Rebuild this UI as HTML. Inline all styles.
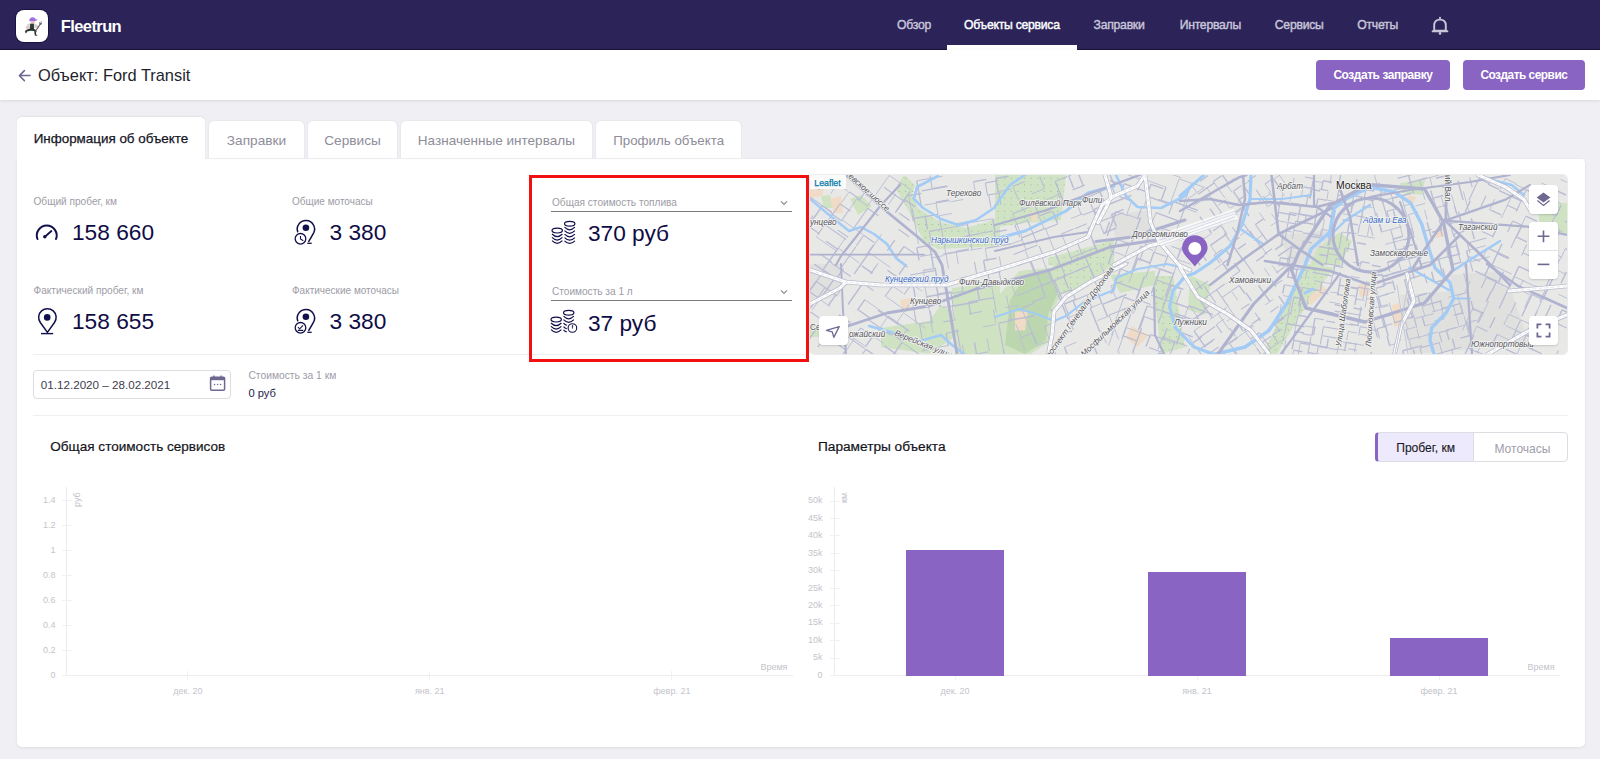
<!DOCTYPE html><html><head><meta charset="utf-8"><style>
html,body{margin:0;padding:0;width:1600px;height:759px;overflow:hidden;background:#efeff4;font-family:"Liberation Sans",sans-serif;position:relative}
.t{position:absolute;white-space:nowrap}
svg{position:absolute;overflow:visible}
</style></head><body>
<div style="position:absolute;left:0px;top:0px;width:1600px;height:50px;background:#2c2459;"></div>
<div style="position:absolute;left:0px;top:49px;width:1600px;height:1px;background:#1a143f;"></div>
<div style="position:absolute;left:16px;top:9.5px;width:32px;height:32px;background:#fff;border-radius:8px;box-shadow:0 0 0 1px #191340;"></div>
<svg style="left:16px;top:9.5px" width="32" height="32" viewBox="0 0 32 32">
<path d="M13.3 10.6 Q13.4 7.4 16.8 7.3 Q19.2 7.4 19.6 9.2 L21.8 9.6 Q21 10.8 19 11.1 L13.6 11.3 Z" fill="#9b72e6"/>
<path d="M14.6 11 L18.9 11 L18.6 13.6 Q16.8 14.6 15 13.6 Z" fill="#f1bcbc"/>
<path d="M11 14.6 Q14 13 17 13.4 Q20.5 13.6 22.3 15.8 L21.6 17.6 Q18.5 17.2 17.6 18.4 L13 18.6 Q11.8 17.6 10.8 17.2 Z" fill="#d6d6d6"/>
<path d="M14.2 13.8 L17.8 13.8 L18 19 L14 19.2 Z" fill="#2b3a35"/>
<ellipse cx="11.4" cy="17.4" rx="1.5" ry="1.5" fill="#f1bcbc"/>
<ellipse cx="21.7" cy="17.2" rx="1.4" ry="1.6" fill="#f1bcbc"/>
<path d="M14 18.6 L10.6 19.8 L9 21 L9.6 23.4 L10.8 22.6 L11 21.4 L14.6 20.8 L18.2 21 L18.8 25.4 L21.4 25.8 L21 24.8 L20 24.4 L20.2 20.4 L17.6 18.6 Z" fill="#263430"/>
<path d="M19.8 20.8 L24.6 13.6" stroke="#666" stroke-width="1.1"/>
<path d="M23.6 12.4 L24.2 14 L25.8 13.6 M24.8 12.2 L25.6 11.8" stroke="#555" stroke-width="1.1" fill="none"/>
<path d="M19.2 19.6 L19.6 21.6 L20.8 21" stroke="#555" stroke-width="1" fill="none"/>
</svg>
<div class="t" style="font-size:16.5px;line-height:16.5px;top:18.43px;color:#ffffff;font-weight:700;left:60.8px;letter-spacing:-0.6px;">Fleetrun</div>
<div class="t" style="font-size:12.2px;line-height:12.2px;top:18.67px;color:#c9c6d9;-webkit-text-stroke:0.4px #c9c6d9;left:897px;letter-spacing:-0.25px;">Обзор</div>
<div class="t" style="font-size:12.2px;line-height:12.2px;top:18.67px;color:#ffffff;-webkit-text-stroke:0.4px #ffffff;left:964px;letter-spacing:-0.25px;">Объекты сервиса</div>
<div class="t" style="font-size:12.2px;line-height:12.2px;top:18.67px;color:#c9c6d9;-webkit-text-stroke:0.4px #c9c6d9;left:1093.6px;letter-spacing:-0.25px;">Заправки</div>
<div class="t" style="font-size:12.2px;line-height:12.2px;top:18.67px;color:#c9c6d9;-webkit-text-stroke:0.4px #c9c6d9;left:1179.7px;letter-spacing:-0.25px;">Интервалы</div>
<div class="t" style="font-size:12.2px;line-height:12.2px;top:18.67px;color:#c9c6d9;-webkit-text-stroke:0.4px #c9c6d9;left:1274.8px;letter-spacing:-0.25px;">Сервисы</div>
<div class="t" style="font-size:12.2px;line-height:12.2px;top:18.67px;color:#c9c6d9;-webkit-text-stroke:0.4px #c9c6d9;left:1357.3px;letter-spacing:-0.25px;">Отчеты</div>
<div style="position:absolute;left:947px;top:45px;width:130px;height:4.6px;background:#ffffff;"></div>
<svg style="left:1430px;top:16px" width="20" height="20" viewBox="0 0 20 20">
<path d="M10 1.6 L10 3" stroke="#c9c6d9" stroke-width="1.8" stroke-linecap="round"/>
<path d="M4.2 14.8 L4.2 9.4 Q4.2 3.6 10 3.6 Q15.8 3.6 15.8 9.4 L15.8 14.8 Z" fill="none" stroke="#c9c6d9" stroke-width="1.9" stroke-linejoin="round"/>
<path d="M2.6 15.2 L17.4 15.2" stroke="#c9c6d9" stroke-width="1.9" stroke-linecap="round"/>
<circle cx="10" cy="17.4" r="1.3" fill="#c9c6d9"/>
</svg>
<div style="position:absolute;left:0px;top:50px;width:1600px;height:50px;background:#ffffff;box-shadow:0 1px 3px rgba(0,0,0,0.10);"></div>
<svg style="left:17px;top:68px" width="15" height="15" viewBox="0 0 15 15">
<path d="M13 7.6 L2.6 7.6 M7.4 2.6 L2.4 7.6 L7.4 12.6" stroke="#6e6891" stroke-width="1.5" fill="none" stroke-linecap="round" stroke-linejoin="round"/>
</svg>
<div class="t" style="font-size:16.4px;line-height:16.4px;top:67.32px;color:#1f1f2e;left:38px;">Объект: Ford Transit</div>
<div style="position:absolute;left:1316px;top:60px;width:134px;height:30px;background:#8964c2;border-radius:4px;"></div>
<div style="position:absolute;left:1463px;top:60px;width:122px;height:30px;background:#8964c2;border-radius:4px;"></div>
<div class="t" style="font-size:11.9px;line-height:11.9px;top:69.93px;color:#ffffff;font-weight:700;left:1333.4px;letter-spacing:-0.4px;">Создать заправку</div>
<div class="t" style="font-size:11.9px;line-height:11.9px;top:69.93px;color:#ffffff;font-weight:700;left:1480.4px;letter-spacing:-0.5px;">Создать сервис</div>
<div style="position:absolute;left:17px;top:158px;width:1568px;height:588.6px;background:#ffffff;border-radius:0 5px 5px 5px;box-shadow:0 1px 3px rgba(0,0,0,0.08);"></div>
<div style="position:absolute;left:209px;top:121px;width:95px;height:37px;background:#ffffff;border-radius:5px 5px 0 0;box-shadow:0 0 2px rgba(0,0,0,0.10);"></div>
<div style="position:absolute;left:308px;top:121px;width:89px;height:37px;background:#ffffff;border-radius:5px 5px 0 0;box-shadow:0 0 2px rgba(0,0,0,0.10);"></div>
<div style="position:absolute;left:401px;top:121px;width:191.39999999999998px;height:37px;background:#ffffff;border-radius:5px 5px 0 0;box-shadow:0 0 2px rgba(0,0,0,0.10);"></div>
<div style="position:absolute;left:596px;top:121px;width:145px;height:37px;background:#ffffff;border-radius:5px 5px 0 0;box-shadow:0 0 2px rgba(0,0,0,0.10);"></div>
<div style="position:absolute;left:17px;top:158px;width:1568px;height:1px;background:#ecebf0;"></div>
<div style="position:absolute;left:17px;top:117px;width:188px;height:42px;background:#ffffff;border-radius:5px 5px 0 0;box-shadow:0 -1px 2px rgba(0,0,0,0.06);"></div>
<div class="t" style="font-size:13.4px;line-height:13.4px;top:131.56px;color:#15151f;-webkit-text-stroke:0.25px #15151f;left:33.7px;">Информация об объекте</div>
<div class="t" style="font-size:13.68px;line-height:13.68px;top:133.92px;color:#8e8d99;left:226.8px;">Заправки</div>
<div class="t" style="font-size:13.68px;line-height:13.68px;top:133.92px;color:#8e8d99;left:324.2px;">Сервисы</div>
<div class="t" style="font-size:13.56px;line-height:13.56px;top:134.02px;color:#8e8d99;left:417.8px;">Назначенные интервалы</div>
<div class="t" style="font-size:13.34px;line-height:13.34px;top:134.21px;color:#8e8d99;left:613.2px;">Профиль объекта</div>
<div class="t" style="font-size:10.1px;line-height:10.1px;top:196.85px;color:#9d9ca6;left:33.5px;">Общий пробег, км</div>
<div class="t" style="font-size:22.7px;line-height:22.7px;top:221.18px;color:#0f0c45;left:72px;">158 660</div>
<div class="t" style="font-size:10.0px;line-height:10.0px;top:196.94px;color:#9d9ca6;left:292px;">Общие моточасы</div>
<div class="t" style="font-size:22.7px;line-height:22.7px;top:220.78px;color:#0f0c45;left:329.5px;">3 380</div>
<div class="t" style="font-size:10.1px;line-height:10.1px;top:286.05px;color:#9d9ca6;left:33.5px;">Фактический пробег, км</div>
<div class="t" style="font-size:22.7px;line-height:22.7px;top:309.68px;color:#0f0c45;left:72px;">158 655</div>
<div class="t" style="font-size:10.0px;line-height:10.0px;top:286.13px;color:#9d9ca6;left:292px;">Фактические моточасы</div>
<div class="t" style="font-size:22.7px;line-height:22.7px;top:309.68px;color:#0f0c45;left:329.5px;">3 380</div>
<svg style="left:30px;top:213.5px" width="32" height="30" viewBox="0 0 32 30">
<path d="M7.5 25 A9.92 9.92 0 1 1 26 25" fill="none" stroke="#12104a" stroke-width="2" stroke-linecap="round"/>
<path d="M14.6 23 L21.4 17" stroke="#12104a" stroke-width="1.8" stroke-linecap="round"/>
<circle cx="14.8" cy="22.8" r="1.7" fill="#12104a"/>
</svg>
<svg style="left:30px;top:300px" width="40" height="40" viewBox="0 0 40 40">
<path d="M17.4 32.4 L10.3 22.5 A8.75 8.75 0 1 1 24.5 22.5 Z" fill="none" stroke="#12104a" stroke-width="1.5" stroke-linejoin="round"/>
<circle cx="17.2" cy="17.4" r="3.3" fill="#12104a"/>
<path d="M11 33.6 L23.2 33.6" stroke="#12104a" stroke-width="1.4"/>
</svg>
<svg style="left:289px;top:214px" width="32" height="34" viewBox="0 0 32 34">
<path d="M8.7 17.8 A8.65 8.65 0 1 1 24.8 18.6 Q22.6 22.6 19.8 27.4" fill="none" stroke="#12104a" stroke-width="1.5" stroke-linecap="round"/>
<circle cx="16.9" cy="13.7" r="3.3" fill="#12104a"/>
<circle cx="11.5" cy="24.8" r="5.3" fill="none" stroke="#12104a" stroke-width="1.3"/>
<path d="M11.5 21.9 L11.5 25 L14.3 26.8" fill="none" stroke="#12104a" stroke-width="1.1"/>
<path d="M18.3 29.3 L22.7 29.3" stroke="#12104a" stroke-width="1.3"/>
</svg>
<svg style="left:289px;top:303.3px" width="32" height="34" viewBox="0 0 32 34">
<path d="M8.7 17.8 A8.65 8.65 0 1 1 24.8 18.6 Q22.6 22.6 19.8 27.4" fill="none" stroke="#12104a" stroke-width="1.5" stroke-linecap="round"/>
<circle cx="16.9" cy="13.7" r="3.3" fill="#12104a"/>
<circle cx="11.5" cy="24.8" r="5.3" fill="none" stroke="#12104a" stroke-width="1.3"/>
<path d="M8.9 24.2 L10.7 25.8 L14 22.4 M8.8 27.4 L14.2 27.4" fill="none" stroke="#12104a" stroke-width="1.1"/>
<path d="M18.3 29.3 L22.7 29.3" stroke="#12104a" stroke-width="1.3"/>
</svg>
<div style="position:absolute;left:33px;top:354px;width:775px;height:1px;background:#eeeef3;"></div>
<div style="position:absolute;left:33px;top:414.5px;width:1535px;height:1px;background:#eeeef3;"></div>
<div class="t" style="font-size:10.1px;line-height:10.1px;top:197.85px;color:#9d9ca6;left:552px;">Общая стоимость топлива</div>
<div style="position:absolute;left:551px;top:210.8px;width:240.6px;height:1.6px;background:#7a7a80;"></div>
<div class="t" style="font-size:10.1px;line-height:10.1px;top:287.05px;color:#9d9ca6;left:552px;">Стоимость за 1 л</div>
<div style="position:absolute;left:551px;top:299.8px;width:240.6px;height:1.6px;background:#7a7a80;"></div>
<svg style="left:779px;top:198.5px" width="10" height="8" viewBox="0 0 10 8"><path d="M2 2.4 L5 5.4 L8 2.4" fill="none" stroke="#8a8a94" stroke-width="1.2"/></svg>
<svg style="left:779px;top:287.7px" width="10" height="8" viewBox="0 0 10 8"><path d="M2 2.4 L5 5.4 L8 2.4" fill="none" stroke="#8a8a94" stroke-width="1.2"/></svg>
<svg style="left:550.5px;top:216px" width="32" height="28" viewBox="0 0 32 28"><ellipse cx="6.2" cy="14.6" rx="5.2" ry="2.4" fill="none" stroke="#12104a" stroke-width="1.2"/><path d="M1 18.0 Q6.2 23.2 11.4 18.0" fill="none" stroke="#12104a" stroke-width="1.2"/><path d="M1 21.4 Q6.2 26.6 11.4 21.4" fill="none" stroke="#12104a" stroke-width="1.2"/><path d="M1 24.7 Q6.2 29.9 11.4 24.7" fill="none" stroke="#12104a" stroke-width="1.2"/><ellipse cx="18.7" cy="7.8" rx="5.2" ry="2.4" fill="none" stroke="#12104a" stroke-width="1.2"/><path d="M13.5 11.2 Q18.7 16.4 23.9 11.2" fill="none" stroke="#12104a" stroke-width="1.2"/><path d="M13.5 14.7 Q18.7 19.9 23.9 14.7" fill="none" stroke="#12104a" stroke-width="1.2"/><path d="M13.5 18.2 Q18.7 23.4 23.9 18.2" fill="none" stroke="#12104a" stroke-width="1.2"/><path d="M13.5 21.6 Q18.7 26.8 23.9 21.6" fill="none" stroke="#12104a" stroke-width="1.2"/><path d="M13.5 24.8 Q18.7 30.0 23.9 24.8" fill="none" stroke="#12104a" stroke-width="1.2"/></svg>
<svg style="left:549.5px;top:305px" width="32" height="28" viewBox="0 0 32 28"><ellipse cx="6.2" cy="14.6" rx="5.2" ry="2.4" fill="none" stroke="#12104a" stroke-width="1.2"/><path d="M1 18.0 Q6.2 23.2 11.4 18.0" fill="none" stroke="#12104a" stroke-width="1.2"/><path d="M1 21.4 Q6.2 26.6 11.4 21.4" fill="none" stroke="#12104a" stroke-width="1.2"/><path d="M1 24.7 Q6.2 29.9 11.4 24.7" fill="none" stroke="#12104a" stroke-width="1.2"/><ellipse cx="18.7" cy="7.8" rx="5.2" ry="2.4" fill="none" stroke="#12104a" stroke-width="1.2"/><path d="M13.5 11.2 Q18.7 16.4 23.9 11.2" fill="none" stroke="#12104a" stroke-width="1.2"/><path d="M13.5 14.7 Q18.7 19.9 23.9 14.7" fill="none" stroke="#12104a" stroke-width="1.2"/><path d="M13.5 18.2 Q15 19.8 16.8 20.4" fill="none" stroke="#12104a" stroke-width="1.2"/><path d="M13.5 21.6 Q15 23.200000000000003 16.8 23.8" fill="none" stroke="#12104a" stroke-width="1.2"/><path d="M13.5 24.8 Q15 26.4 16.8 27.0" fill="none" stroke="#12104a" stroke-width="1.2"/><circle cx="22.4" cy="23" r="4.3" fill="#fff" stroke="#12104a" stroke-width="1.1"/><path d="M22.4 20.4 L22.4 23.6 M22.4 20.4 L23.4 21" fill="none" stroke="#12104a" stroke-width="0.9"/></svg>
<div class="t" style="font-size:22.66px;line-height:22.66px;top:222.22px;color:#0f0c45;left:588px;">370 руб</div>
<div class="t" style="font-size:22.66px;line-height:22.66px;top:311.52px;color:#0f0c45;left:588px;">37 руб</div>
<div style="position:absolute;left:529px;top:175px;width:280px;height:187px;border:3px solid #f21010;box-sizing:border-box;"></div>
<div style="position:absolute;left:33.4px;top:369.7px;width:198px;height:29.3px;border:1px solid #dcdce2;border-radius:4px;box-sizing:border-box;"></div>
<div class="t" style="font-size:11.65px;line-height:11.65px;top:379.44px;color:#3e3d4c;left:40.8px;">01.12.2020 – 28.02.2021</div>
<svg style="left:208px;top:373px" width="20" height="20" viewBox="0 0 20 20">
<rect x="2.6" y="4.2" width="14" height="13" rx="1.2" fill="none" stroke="#6e6891" stroke-width="1.5"/>
<rect x="2.6" y="4.2" width="14" height="3" fill="#6e6891"/>
<path d="M6 2.4 L6 5 M13.2 2.4 L13.2 5" stroke="#6e6891" stroke-width="1.4"/>
<circle cx="6.6" cy="11.4" r="0.75" fill="#6e6891"/><circle cx="9.6" cy="11.4" r="0.75" fill="#6e6891"/><circle cx="12.6" cy="11.4" r="0.75" fill="#6e6891"/>
</svg>
<div class="t" style="font-size:10.3px;line-height:10.3px;top:371.38px;color:#9d9ca6;left:248.4px;">Стоимость за 1 км</div>
<div class="t" style="font-size:11.2px;line-height:11.2px;top:387.92px;color:#1f1c4d;left:248.4px;">0 руб</div>
<div style="position:absolute;left:810px;top:175px;width:757px;height:179px;border-radius:4px;overflow:hidden;box-shadow:0 0 0 1px rgba(0,0,0,0.08)">
<svg style="left:0;top:0" width="757" height="179" viewBox="0 0 757 179"><defs><pattern id="gd" x="0" y="0" width="6.6" height="6.6" patternUnits="userSpaceOnUse"><rect width="6.6" height="6.6" fill="#d0e3c4"/><circle cx="3.3" cy="3.3" r="0.55" fill="#8fb386"/></pattern></defs><rect x="0" y="0" width="757" height="179" fill="#e8e9e6"/><polygon points="0.0,89.0 30.0,89.0 30.0,120.0 0.0,128.0" fill="#e0e1df" /><polygon points="590.0,120.0 700.0,112.0 720.0,170.0 600.0,179.0" fill="#e0e1df" /><polygon points="300.0,40.0 340.0,35.0 345.0,60.0 305.0,62.0" fill="#e0e1df" /><polygon points="470.0,60.0 520.0,55.0 525.0,85.0 480.0,90.0" fill="#e0e1df" /><polygon points="640.0,100.0 690.0,96.0 700.0,140.0 650.0,150.0" fill="#e0e1df" /><polygon points="62.0,1.0 93.0,1.0 86.0,14.0 97.0,33.0 107.0,53.0 114.0,66.0 128.0,74.0 190.0,71.0 190.0,40.0 178.0,47.0 155.0,53.0 130.0,47.0 108.0,33.0 102.0,20.0 105.0,10.0 96.0,1.0" fill="url(#gd)" /><polygon points="185.0,0.0 256.0,0.0 251.0,45.0 220.0,47.5 185.0,52.0" fill="url(#gd)" /><polygon points="11.0,21.0 20.0,20.0 24.0,33.0 14.0,33.0" fill="#cfe3c3" /><polygon points="40.0,24.0 51.0,20.0 62.0,31.0 48.0,40.0" fill="#cfe3c3" /><polygon points="238.0,83.0 304.0,65.0 304.0,90.0 238.0,90.0" fill="url(#gd)" /><polygon points="71.0,153.0 119.0,146.0 131.0,130.0 142.0,136.0 148.0,160.0 119.0,179.0 71.0,172.0" fill="#cfe3c3" /><polygon points="209.0,96.0 244.0,92.6 251.5,119.0 241.0,139.0 241.0,166.0 220.6,179.0 185.0,179.0 185.0,125.0" fill="#cfe3c3" /><polygon points="242.0,89.0 304.0,89.0 268.0,116.0 251.5,119.0" fill="url(#gd)" /><polygon points="345.0,101.0 363.0,101.0 375.0,172.0 351.0,179.0 345.0,125.0" fill="url(#gd)" /><polygon points="142.0,113.0 190.0,107.0 190.0,179.0 148.0,179.0" fill="#cfe3c3" /><polygon points="506.6,74.0 530.0,57.0 542.0,66.5 530.0,90.0 500.6,90.0" fill="#cfe3c3" /><polygon points="494.7,89.0 524.0,92.6 489.0,142.5 467.0,179.0 453.0,179.0 477.0,128.0" fill="url(#gd)" /><polygon points="300.0,100.0 345.0,96.0 345.0,110.0 310.0,118.0" fill="#cfe3c3" /><polygon points="0.0,150.0 12.0,152.0 12.0,162.0 0.0,162.0" fill="#cfe3c3" /><polygon points="728.0,30.0 757.0,28.0 757.0,60.0 730.0,55.0" fill="#cfe3c3" /><polygon points="590.0,8.0 615.0,5.0 612.0,20.0 592.0,18.0" fill="#cfe3c3" /><polygon points="380.0,100.0 400.0,110.0 395.0,140.0 378.0,135.0" fill="#cfe3c3" /><polygon points="215.0,100.0 240.0,96.0 248.0,118.0 238.0,140.0 236.0,165.0 215.0,179.0 195.0,170.0 200.0,125.0" fill="#bcd7b0" /><polygon points="20.0,24.0 31.0,21.0 33.0,38.0 24.0,38.0" fill="#f0dcc6" /><polygon points="0.0,15.0 14.0,14.0 12.0,21.0 0.0,23.0" fill="#f0dcc6" /><polygon points="205.0,136.5 218.0,136.5 215.0,155.5 205.0,155.5" fill="#f0dcc6" /><polygon points="321.6,151.0 339.0,160.0 327.5,172.0 315.6,163.0" fill="#f0dcc6" /><polygon points="498.0,123.4 512.5,110.0 517.0,115.0 500.6,130.6" fill="#f0dcc6" /><polygon points="90.0,125.0 100.0,123.0 100.0,133.0 92.0,134.0" fill="#f0dcc6" /><polygon points="548.0,110.0 557.0,108.0 560.0,120.0 550.0,122.0" fill="#f0dcc6" /><polygon points="582.0,130.0 590.0,128.0 592.0,150.0 584.0,152.0" fill="#f0dcc6" /><polygon points="598.0,20.0 606.0,22.0 604.0,28.0 596.0,26.0" fill="#f0dcc6" /><polygon points="220.0,37.0 226.0,36.0 228.0,46.0 222.0,46.0" fill="#f0dcc6" /><polygon points="625.0,55.0 633.0,53.0 634.0,62.0 626.0,63.0" fill="#f0dcc6" /><line x1="-0.9" y1="7.2" x2="9.8" y2="14.7" stroke="#b9bcd4" stroke-width="1.1"/><line x1="-0.9" y1="7.2" x2="-8.4" y2="17.9" stroke="#b9bcd4" stroke-width="0.9"/><line x1="16.5" y1="1.3" x2="37.8" y2="16.2" stroke="#b9bcd4" stroke-width="0.9"/><line x1="16.5" y1="1.3" x2="9.1" y2="12.0" stroke="#b9bcd4" stroke-width="1.1"/><line x1="0.6" y1="22.4" x2="21.9" y2="37.3" stroke="#b9bcd4" stroke-width="1.1"/><line x1="0.6" y1="22.4" x2="-14.3" y2="43.7" stroke="#b9bcd4" stroke-width="0.9"/><line x1="28.2" y1="8.0" x2="20.7" y2="18.6" stroke="#b9bcd4" stroke-width="0.9"/><line x1="12.2" y1="31.0" x2="22.8" y2="38.5" stroke="#b9bcd4" stroke-width="0.9"/><line x1="12.2" y1="31.0" x2="-2.7" y2="52.3" stroke="#b9bcd4" stroke-width="1.4"/><line x1="3.0" y1="40.6" x2="-11.9" y2="61.9" stroke="#b9bcd4" stroke-width="1.1"/><line x1="-1.3" y1="51.3" x2="9.4" y2="58.8" stroke="#b9bcd4" stroke-width="1.1"/><line x1="-1.3" y1="51.3" x2="-16.2" y2="72.6" stroke="#b9bcd4" stroke-width="0.9"/><line x1="44.8" y1="6.3" x2="66.1" y2="21.2" stroke="#b9bcd4" stroke-width="1.1"/><line x1="39.2" y1="16.8" x2="49.8" y2="24.3" stroke="#b9bcd4" stroke-width="1.1"/><line x1="39.2" y1="16.8" x2="31.7" y2="27.5" stroke="#b9bcd4" stroke-width="0.9"/><line x1="30.0" y1="28.8" x2="40.7" y2="36.2" stroke="#b9bcd4" stroke-width="1.1"/><line x1="30.0" y1="28.8" x2="15.1" y2="50.1" stroke="#b9bcd4" stroke-width="1.1"/><line x1="21.1" y1="38.5" x2="31.7" y2="46.0" stroke="#b9bcd4" stroke-width="1.1"/><line x1="14.8" y1="49.6" x2="36.1" y2="64.5" stroke="#b9bcd4" stroke-width="1.1"/><line x1="14.8" y1="49.6" x2="7.3" y2="60.2" stroke="#b9bcd4" stroke-width="1.1"/><line x1="5.7" y1="61.4" x2="27.0" y2="76.3" stroke="#b9bcd4" stroke-width="0.9"/><line x1="56.3" y1="15.3" x2="48.9" y2="25.9" stroke="#b9bcd4" stroke-width="1.1"/><line x1="47.0" y1="23.6" x2="57.6" y2="31.1" stroke="#b9bcd4" stroke-width="0.9"/><line x1="47.0" y1="23.6" x2="39.5" y2="34.3" stroke="#b9bcd4" stroke-width="0.9"/><line x1="39.4" y1="34.3" x2="31.9" y2="45.0" stroke="#b9bcd4" stroke-width="1.1"/><line x1="32.0" y1="44.8" x2="53.3" y2="59.7" stroke="#b9bcd4" stroke-width="0.9"/><line x1="27.5" y1="54.9" x2="38.1" y2="62.3" stroke="#b9bcd4" stroke-width="1.1"/><line x1="16.2" y1="66.3" x2="26.9" y2="73.8" stroke="#b9bcd4" stroke-width="1.4"/><line x1="10.9" y1="79.5" x2="21.6" y2="87.0" stroke="#b9bcd4" stroke-width="1.1"/><line x1="4.2" y1="89.1" x2="25.5" y2="104.0" stroke="#b9bcd4" stroke-width="1.4"/><line x1="79.3" y1="0.4" x2="89.9" y2="7.8" stroke="#b9bcd4" stroke-width="0.9"/><line x1="79.3" y1="0.4" x2="64.3" y2="21.7" stroke="#b9bcd4" stroke-width="0.9"/><line x1="74.0" y1="12.3" x2="95.3" y2="27.2" stroke="#b9bcd4" stroke-width="1.1"/><line x1="64.7" y1="20.7" x2="75.3" y2="28.2" stroke="#b9bcd4" stroke-width="0.9"/><line x1="64.7" y1="20.7" x2="57.2" y2="31.4" stroke="#b9bcd4" stroke-width="0.9"/><line x1="57.7" y1="33.3" x2="68.4" y2="40.8" stroke="#b9bcd4" stroke-width="1.1"/><line x1="57.7" y1="33.3" x2="42.8" y2="54.6" stroke="#b9bcd4" stroke-width="1.1"/><line x1="34.9" y1="63.8" x2="20.0" y2="85.1" stroke="#b9bcd4" stroke-width="0.9"/><line x1="28.2" y1="73.1" x2="49.5" y2="88.0" stroke="#b9bcd4" stroke-width="0.9"/><line x1="28.2" y1="73.1" x2="13.3" y2="94.4" stroke="#b9bcd4" stroke-width="1.4"/><line x1="19.4" y1="86.6" x2="40.7" y2="101.5" stroke="#b9bcd4" stroke-width="1.1"/><line x1="14.3" y1="95.1" x2="35.6" y2="110.0" stroke="#b9bcd4" stroke-width="0.9"/><line x1="14.3" y1="95.1" x2="-0.6" y2="116.4" stroke="#b9bcd4" stroke-width="1.1"/><line x1="6.1" y1="106.3" x2="27.4" y2="121.2" stroke="#b9bcd4" stroke-width="1.1"/><line x1="6.1" y1="106.3" x2="-1.3" y2="116.9" stroke="#b9bcd4" stroke-width="1.4"/><line x1="-0.0" y1="117.0" x2="10.6" y2="124.5" stroke="#b9bcd4" stroke-width="1.1"/><line x1="-0.0" y1="117.0" x2="-7.5" y2="127.7" stroke="#b9bcd4" stroke-width="1.1"/><line x1="90.6" y1="7.5" x2="101.2" y2="15.0" stroke="#b9bcd4" stroke-width="0.9"/><line x1="90.6" y1="7.5" x2="83.1" y2="18.2" stroke="#b9bcd4" stroke-width="1.4"/><line x1="85.8" y1="18.9" x2="78.4" y2="29.5" stroke="#b9bcd4" stroke-width="0.9"/><line x1="53.7" y1="60.2" x2="64.4" y2="67.7" stroke="#b9bcd4" stroke-width="1.1"/><line x1="53.7" y1="60.2" x2="46.3" y2="70.9" stroke="#b9bcd4" stroke-width="1.1"/><line x1="45.7" y1="71.9" x2="30.8" y2="93.2" stroke="#b9bcd4" stroke-width="1.1"/><line x1="33.5" y1="93.6" x2="26.0" y2="104.3" stroke="#b9bcd4" stroke-width="1.4"/><line x1="24.9" y1="103.0" x2="35.6" y2="110.5" stroke="#b9bcd4" stroke-width="0.9"/><line x1="24.9" y1="103.0" x2="10.0" y2="124.3" stroke="#b9bcd4" stroke-width="1.4"/><line x1="15.2" y1="112.2" x2="0.3" y2="133.5" stroke="#b9bcd4" stroke-width="1.1"/><line x1="9.7" y1="124.3" x2="20.3" y2="131.7" stroke="#b9bcd4" stroke-width="0.9"/><line x1="9.7" y1="124.3" x2="2.2" y2="134.9" stroke="#b9bcd4" stroke-width="0.9"/><line x1="0.6" y1="137.0" x2="11.3" y2="144.5" stroke="#b9bcd4" stroke-width="1.1"/><line x1="0.6" y1="137.0" x2="-14.3" y2="158.3" stroke="#b9bcd4" stroke-width="0.9"/><line x1="100.2" y1="16.3" x2="85.3" y2="37.6" stroke="#b9bcd4" stroke-width="1.4"/><line x1="94.5" y1="24.5" x2="105.2" y2="32.0" stroke="#b9bcd4" stroke-width="1.4"/><line x1="94.5" y1="24.5" x2="87.1" y2="35.2" stroke="#b9bcd4" stroke-width="1.4"/><line x1="89.0" y1="38.0" x2="99.6" y2="45.5" stroke="#b9bcd4" stroke-width="1.1"/><line x1="71.6" y1="59.3" x2="56.6" y2="80.6" stroke="#b9bcd4" stroke-width="0.9"/><line x1="63.6" y1="69.8" x2="56.1" y2="80.5" stroke="#b9bcd4" stroke-width="1.4"/><line x1="59.1" y1="77.6" x2="80.4" y2="92.5" stroke="#b9bcd4" stroke-width="0.9"/><line x1="59.1" y1="77.6" x2="44.2" y2="98.9" stroke="#b9bcd4" stroke-width="1.4"/><line x1="51.9" y1="90.9" x2="62.6" y2="98.3" stroke="#b9bcd4" stroke-width="1.4"/><line x1="34.3" y1="109.6" x2="26.9" y2="120.3" stroke="#b9bcd4" stroke-width="0.9"/><line x1="25.8" y1="119.9" x2="18.3" y2="130.5" stroke="#b9bcd4" stroke-width="1.4"/><line x1="13.5" y1="143.7" x2="34.8" y2="158.6" stroke="#b9bcd4" stroke-width="1.1"/><line x1="13.5" y1="143.7" x2="-1.4" y2="165.0" stroke="#b9bcd4" stroke-width="1.4"/><line x1="88.5" y1="54.3" x2="99.1" y2="61.8" stroke="#b9bcd4" stroke-width="1.1"/><line x1="84.8" y1="65.1" x2="77.4" y2="75.7" stroke="#b9bcd4" stroke-width="1.4"/><line x1="68.1" y1="88.3" x2="60.6" y2="98.9" stroke="#b9bcd4" stroke-width="1.1"/><line x1="52.9" y1="108.2" x2="63.5" y2="115.6" stroke="#b9bcd4" stroke-width="1.1"/><line x1="52.9" y1="108.2" x2="38.0" y2="129.5" stroke="#b9bcd4" stroke-width="1.4"/><line x1="29.0" y1="139.9" x2="39.6" y2="147.3" stroke="#b9bcd4" stroke-width="1.4"/><line x1="22.7" y1="150.1" x2="15.2" y2="160.7" stroke="#b9bcd4" stroke-width="0.9"/><line x1="15.2" y1="161.4" x2="7.8" y2="172.1" stroke="#b9bcd4" stroke-width="1.1"/><line x1="94.0" y1="71.4" x2="104.7" y2="78.8" stroke="#b9bcd4" stroke-width="1.1"/><line x1="94.0" y1="71.4" x2="86.5" y2="82.0" stroke="#b9bcd4" stroke-width="1.4"/><line x1="87.0" y1="84.7" x2="97.7" y2="92.2" stroke="#b9bcd4" stroke-width="1.4"/><line x1="77.4" y1="95.2" x2="88.0" y2="102.6" stroke="#b9bcd4" stroke-width="1.4"/><line x1="54.8" y1="124.7" x2="76.1" y2="139.6" stroke="#b9bcd4" stroke-width="0.9"/><line x1="54.8" y1="124.7" x2="47.4" y2="135.4" stroke="#b9bcd4" stroke-width="1.4"/><line x1="48.8" y1="135.2" x2="59.4" y2="142.6" stroke="#b9bcd4" stroke-width="1.4"/><line x1="41.0" y1="146.4" x2="26.0" y2="167.7" stroke="#b9bcd4" stroke-width="0.9"/><line x1="33.6" y1="158.7" x2="54.9" y2="173.6" stroke="#b9bcd4" stroke-width="1.1"/><line x1="25.6" y1="167.8" x2="36.2" y2="175.3" stroke="#b9bcd4" stroke-width="1.1"/><line x1="19.6" y1="179.7" x2="12.2" y2="190.3" stroke="#b9bcd4" stroke-width="1.4"/><line x1="96.4" y1="88.9" x2="88.9" y2="99.6" stroke="#b9bcd4" stroke-width="1.4"/><line x1="90.7" y1="101.8" x2="101.4" y2="109.2" stroke="#b9bcd4" stroke-width="0.9"/><line x1="82.6" y1="110.9" x2="93.2" y2="118.3" stroke="#b9bcd4" stroke-width="0.9"/><line x1="82.6" y1="110.9" x2="75.1" y2="121.5" stroke="#b9bcd4" stroke-width="1.1"/><line x1="75.6" y1="121.4" x2="96.9" y2="136.3" stroke="#b9bcd4" stroke-width="0.9"/><line x1="67.8" y1="135.1" x2="89.1" y2="150.0" stroke="#b9bcd4" stroke-width="1.4"/><line x1="58.4" y1="144.6" x2="79.7" y2="159.5" stroke="#b9bcd4" stroke-width="1.1"/><line x1="50.6" y1="152.9" x2="61.2" y2="160.4" stroke="#b9bcd4" stroke-width="1.1"/><line x1="50.6" y1="152.9" x2="43.1" y2="163.6" stroke="#b9bcd4" stroke-width="1.1"/><line x1="44.5" y1="163.7" x2="55.2" y2="171.1" stroke="#b9bcd4" stroke-width="0.9"/><line x1="44.5" y1="163.7" x2="29.6" y2="185.0" stroke="#b9bcd4" stroke-width="0.9"/><line x1="35.8" y1="175.0" x2="28.4" y2="185.7" stroke="#b9bcd4" stroke-width="1.1"/><line x1="101.6" y1="108.9" x2="112.2" y2="116.3" stroke="#b9bcd4" stroke-width="0.9"/><line x1="101.6" y1="108.9" x2="94.1" y2="119.5" stroke="#b9bcd4" stroke-width="1.1"/><line x1="78.1" y1="141.3" x2="99.4" y2="156.3" stroke="#b9bcd4" stroke-width="1.4"/><line x1="78.1" y1="141.3" x2="70.6" y2="152.0" stroke="#b9bcd4" stroke-width="0.9"/><line x1="70.9" y1="152.7" x2="81.5" y2="160.2" stroke="#b9bcd4" stroke-width="1.4"/><line x1="70.9" y1="152.7" x2="63.4" y2="163.4" stroke="#b9bcd4" stroke-width="1.1"/><line x1="63.0" y1="161.0" x2="73.7" y2="168.4" stroke="#b9bcd4" stroke-width="0.9"/><line x1="63.0" y1="161.0" x2="55.6" y2="171.6" stroke="#b9bcd4" stroke-width="1.4"/><line x1="55.9" y1="174.3" x2="77.2" y2="189.2" stroke="#b9bcd4" stroke-width="1.4"/><line x1="55.9" y1="174.3" x2="48.4" y2="185.0" stroke="#b9bcd4" stroke-width="1.1"/><line x1="101.5" y1="126.3" x2="86.6" y2="147.6" stroke="#b9bcd4" stroke-width="0.9"/><line x1="94.4" y1="138.6" x2="115.7" y2="153.5" stroke="#b9bcd4" stroke-width="0.9"/><line x1="82.0" y1="159.0" x2="92.7" y2="166.5" stroke="#b9bcd4" stroke-width="1.4"/><line x1="74.2" y1="170.7" x2="95.5" y2="185.6" stroke="#b9bcd4" stroke-width="1.4"/><line x1="67.3" y1="180.4" x2="77.9" y2="187.9" stroke="#b9bcd4" stroke-width="0.9"/><line x1="67.3" y1="180.4" x2="52.4" y2="201.7" stroke="#b9bcd4" stroke-width="1.1"/><line x1="97.6" y1="153.7" x2="90.1" y2="164.4" stroke="#b9bcd4" stroke-width="1.1"/><line x1="92.1" y1="167.3" x2="113.4" y2="182.2" stroke="#b9bcd4" stroke-width="0.9"/><line x1="92.1" y1="167.3" x2="77.1" y2="188.6" stroke="#b9bcd4" stroke-width="1.4"/><line x1="100.7" y1="173.6" x2="111.3" y2="181.0" stroke="#b9bcd4" stroke-width="0.9"/><line x1="99.2" y1="179.6" x2="101.4" y2="192.4" stroke="#b9bcd4" stroke-width="1.1"/><line x1="100.2" y1="100.0" x2="125.8" y2="95.4" stroke="#b9bcd4" stroke-width="1.1"/><line x1="103.0" y1="109.6" x2="105.3" y2="122.4" stroke="#b9bcd4" stroke-width="1.4"/><line x1="102.0" y1="123.6" x2="106.5" y2="149.2" stroke="#b9bcd4" stroke-width="1.1"/><line x1="109.5" y1="149.0" x2="122.3" y2="146.8" stroke="#b9bcd4" stroke-width="0.9"/><line x1="109.5" y1="149.0" x2="114.0" y2="174.6" stroke="#b9bcd4" stroke-width="1.1"/><line x1="111.5" y1="176.0" x2="124.3" y2="173.7" stroke="#b9bcd4" stroke-width="1.1"/><line x1="98.6" y1="20.7" x2="111.4" y2="18.4" stroke="#b9bcd4" stroke-width="1.4"/><line x1="98.6" y1="20.7" x2="103.2" y2="46.3" stroke="#b9bcd4" stroke-width="0.9"/><line x1="102.2" y1="33.7" x2="104.5" y2="46.5" stroke="#b9bcd4" stroke-width="1.1"/><line x1="104.0" y1="43.4" x2="116.8" y2="41.1" stroke="#b9bcd4" stroke-width="1.4"/><line x1="104.0" y1="43.4" x2="108.5" y2="69.0" stroke="#b9bcd4" stroke-width="0.9"/><line x1="106.8" y1="72.6" x2="119.6" y2="70.4" stroke="#b9bcd4" stroke-width="1.1"/><line x1="106.8" y1="72.6" x2="109.1" y2="85.4" stroke="#b9bcd4" stroke-width="1.4"/><line x1="110.3" y1="81.5" x2="123.1" y2="79.3" stroke="#b9bcd4" stroke-width="1.1"/><line x1="113.3" y1="95.4" x2="126.1" y2="93.2" stroke="#b9bcd4" stroke-width="1.1"/><line x1="113.3" y1="95.4" x2="115.6" y2="108.3" stroke="#b9bcd4" stroke-width="0.9"/><line x1="114.1" y1="107.1" x2="126.9" y2="104.9" stroke="#b9bcd4" stroke-width="1.4"/><line x1="114.1" y1="107.1" x2="118.6" y2="132.7" stroke="#b9bcd4" stroke-width="0.9"/><line x1="117.0" y1="121.8" x2="142.6" y2="117.3" stroke="#b9bcd4" stroke-width="1.4"/><line x1="117.0" y1="121.8" x2="121.5" y2="147.4" stroke="#b9bcd4" stroke-width="0.9"/><line x1="120.4" y1="135.9" x2="122.6" y2="148.7" stroke="#b9bcd4" stroke-width="0.9"/><line x1="120.7" y1="145.5" x2="123.0" y2="158.3" stroke="#b9bcd4" stroke-width="0.9"/><line x1="125.2" y1="172.8" x2="138.0" y2="170.5" stroke="#b9bcd4" stroke-width="0.9"/><line x1="106.8" y1="5.8" x2="132.4" y2="1.3" stroke="#b9bcd4" stroke-width="1.1"/><line x1="106.8" y1="5.8" x2="111.3" y2="31.5" stroke="#b9bcd4" stroke-width="1.4"/><line x1="111.8" y1="15.9" x2="137.4" y2="11.3" stroke="#b9bcd4" stroke-width="1.4"/><line x1="114.3" y1="30.1" x2="139.9" y2="25.6" stroke="#b9bcd4" stroke-width="0.9"/><line x1="115.2" y1="41.6" x2="128.0" y2="39.4" stroke="#b9bcd4" stroke-width="1.1"/><line x1="115.2" y1="41.6" x2="117.5" y2="54.4" stroke="#b9bcd4" stroke-width="1.4"/><line x1="119.2" y1="56.4" x2="132.0" y2="54.1" stroke="#b9bcd4" stroke-width="1.4"/><line x1="119.2" y1="56.4" x2="121.5" y2="69.2" stroke="#b9bcd4" stroke-width="1.1"/><line x1="119.1" y1="67.3" x2="123.6" y2="92.9" stroke="#b9bcd4" stroke-width="1.4"/><line x1="120.8" y1="82.9" x2="133.6" y2="80.6" stroke="#b9bcd4" stroke-width="0.9"/><line x1="125.1" y1="92.9" x2="127.3" y2="105.7" stroke="#b9bcd4" stroke-width="1.4"/><line x1="125.8" y1="107.4" x2="128.1" y2="120.2" stroke="#b9bcd4" stroke-width="1.4"/><line x1="127.6" y1="119.0" x2="140.4" y2="116.7" stroke="#b9bcd4" stroke-width="1.1"/><line x1="127.6" y1="119.0" x2="129.9" y2="131.8" stroke="#b9bcd4" stroke-width="1.4"/><line x1="132.9" y1="132.5" x2="145.7" y2="130.3" stroke="#b9bcd4" stroke-width="0.9"/><line x1="133.4" y1="146.9" x2="146.2" y2="144.7" stroke="#b9bcd4" stroke-width="1.1"/><line x1="136.1" y1="158.2" x2="148.9" y2="155.9" stroke="#b9bcd4" stroke-width="1.1"/><line x1="136.1" y1="158.2" x2="138.3" y2="171.0" stroke="#b9bcd4" stroke-width="1.4"/><line x1="120.0" y1="0.5" x2="122.2" y2="13.3" stroke="#b9bcd4" stroke-width="1.1"/><line x1="123.8" y1="13.4" x2="136.6" y2="11.2" stroke="#b9bcd4" stroke-width="1.4"/><line x1="125.9" y1="27.2" x2="138.7" y2="25.0" stroke="#b9bcd4" stroke-width="1.4"/><line x1="125.9" y1="27.2" x2="128.2" y2="40.0" stroke="#b9bcd4" stroke-width="0.9"/><line x1="129.1" y1="40.7" x2="141.9" y2="38.4" stroke="#b9bcd4" stroke-width="0.9"/><line x1="129.1" y1="40.7" x2="131.3" y2="53.5" stroke="#b9bcd4" stroke-width="1.1"/><line x1="131.6" y1="54.2" x2="157.2" y2="49.6" stroke="#b9bcd4" stroke-width="0.9"/><line x1="131.6" y1="54.2" x2="133.8" y2="67.0" stroke="#b9bcd4" stroke-width="0.9"/><line x1="134.0" y1="68.1" x2="159.7" y2="63.6" stroke="#b9bcd4" stroke-width="1.4"/><line x1="134.0" y1="68.1" x2="138.6" y2="93.8" stroke="#b9bcd4" stroke-width="0.9"/><line x1="133.3" y1="79.3" x2="158.9" y2="74.8" stroke="#b9bcd4" stroke-width="1.4"/><line x1="141.1" y1="118.6" x2="153.9" y2="116.3" stroke="#b9bcd4" stroke-width="0.9"/><line x1="141.1" y1="118.6" x2="143.3" y2="131.4" stroke="#b9bcd4" stroke-width="1.1"/><line x1="142.1" y1="131.3" x2="167.7" y2="126.8" stroke="#b9bcd4" stroke-width="1.4"/><line x1="142.1" y1="131.3" x2="144.4" y2="144.1" stroke="#b9bcd4" stroke-width="0.9"/><line x1="146.8" y1="153.8" x2="151.3" y2="179.4" stroke="#b9bcd4" stroke-width="1.1"/><line x1="152.4" y1="169.6" x2="156.9" y2="195.2" stroke="#b9bcd4" stroke-width="0.9"/><line x1="140.5" y1="26.8" x2="153.3" y2="24.5" stroke="#b9bcd4" stroke-width="0.9"/><line x1="144.4" y1="49.1" x2="157.2" y2="46.9" stroke="#b9bcd4" stroke-width="0.9"/><line x1="145.4" y1="63.5" x2="158.2" y2="61.3" stroke="#b9bcd4" stroke-width="1.1"/><line x1="146.1" y1="76.3" x2="158.9" y2="74.0" stroke="#b9bcd4" stroke-width="1.1"/><line x1="146.1" y1="76.3" x2="148.3" y2="89.1" stroke="#b9bcd4" stroke-width="0.9"/><line x1="150.7" y1="103.0" x2="163.5" y2="100.8" stroke="#b9bcd4" stroke-width="1.1"/><line x1="150.7" y1="103.0" x2="153.0" y2="115.8" stroke="#b9bcd4" stroke-width="1.1"/><line x1="158.6" y1="127.1" x2="184.2" y2="122.6" stroke="#b9bcd4" stroke-width="1.4"/><line x1="158.6" y1="127.1" x2="160.9" y2="139.9" stroke="#b9bcd4" stroke-width="1.1"/><line x1="159.1" y1="138.7" x2="171.9" y2="136.5" stroke="#b9bcd4" stroke-width="1.1"/><line x1="164.5" y1="167.3" x2="166.7" y2="180.1" stroke="#b9bcd4" stroke-width="1.4"/><line x1="165.5" y1="179.2" x2="178.3" y2="176.9" stroke="#b9bcd4" stroke-width="1.1"/><line x1="165.5" y1="179.2" x2="170.0" y2="204.8" stroke="#b9bcd4" stroke-width="1.4"/><line x1="157.2" y1="48.2" x2="182.8" y2="43.7" stroke="#b9bcd4" stroke-width="0.9"/><line x1="157.2" y1="48.2" x2="161.7" y2="73.8" stroke="#b9bcd4" stroke-width="1.4"/><line x1="157.0" y1="60.9" x2="169.8" y2="58.6" stroke="#b9bcd4" stroke-width="1.1"/><line x1="160.0" y1="75.2" x2="172.8" y2="73.0" stroke="#b9bcd4" stroke-width="0.9"/><line x1="164.5" y1="86.9" x2="166.8" y2="99.7" stroke="#b9bcd4" stroke-width="1.1"/><line x1="166.2" y1="99.9" x2="191.8" y2="95.4" stroke="#b9bcd4" stroke-width="1.1"/><line x1="167.0" y1="111.5" x2="169.2" y2="124.3" stroke="#b9bcd4" stroke-width="1.4"/><line x1="173.2" y1="151.8" x2="186.0" y2="149.5" stroke="#b9bcd4" stroke-width="0.9"/><line x1="177.1" y1="163.3" x2="179.4" y2="176.1" stroke="#b9bcd4" stroke-width="0.9"/><line x1="163.5" y1="6.7" x2="176.3" y2="4.4" stroke="#b9bcd4" stroke-width="1.4"/><line x1="163.5" y1="6.7" x2="165.7" y2="19.5" stroke="#b9bcd4" stroke-width="0.9"/><line x1="170.2" y1="58.2" x2="183.0" y2="56.0" stroke="#b9bcd4" stroke-width="1.1"/><line x1="175.2" y1="73.4" x2="200.9" y2="68.9" stroke="#b9bcd4" stroke-width="1.4"/><line x1="175.2" y1="73.4" x2="177.5" y2="86.2" stroke="#b9bcd4" stroke-width="0.9"/><line x1="173.6" y1="85.5" x2="186.4" y2="83.2" stroke="#b9bcd4" stroke-width="1.4"/><line x1="173.6" y1="85.5" x2="175.9" y2="98.3" stroke="#b9bcd4" stroke-width="1.4"/><line x1="178.1" y1="99.0" x2="190.9" y2="96.8" stroke="#b9bcd4" stroke-width="0.9"/><line x1="178.1" y1="99.0" x2="180.3" y2="111.8" stroke="#b9bcd4" stroke-width="1.4"/><line x1="181.9" y1="112.4" x2="186.4" y2="138.1" stroke="#b9bcd4" stroke-width="0.9"/><line x1="183.5" y1="134.9" x2="185.8" y2="147.7" stroke="#b9bcd4" stroke-width="0.9"/><line x1="188.7" y1="148.1" x2="201.5" y2="145.8" stroke="#b9bcd4" stroke-width="1.1"/><line x1="188.7" y1="148.1" x2="193.2" y2="173.7" stroke="#b9bcd4" stroke-width="1.1"/><line x1="193.3" y1="173.9" x2="195.5" y2="186.7" stroke="#b9bcd4" stroke-width="1.4"/><line x1="175.4" y1="7.9" x2="188.2" y2="5.6" stroke="#b9bcd4" stroke-width="1.4"/><line x1="175.4" y1="7.9" x2="177.6" y2="20.7" stroke="#b9bcd4" stroke-width="1.1"/><line x1="178.7" y1="19.9" x2="191.5" y2="17.7" stroke="#b9bcd4" stroke-width="1.1"/><line x1="178.7" y1="19.9" x2="181.0" y2="32.7" stroke="#b9bcd4" stroke-width="1.1"/><line x1="182.8" y1="44.2" x2="185.1" y2="57.0" stroke="#b9bcd4" stroke-width="1.4"/><line x1="184.1" y1="57.2" x2="196.9" y2="54.9" stroke="#b9bcd4" stroke-width="1.4"/><line x1="184.1" y1="57.2" x2="186.4" y2="70.0" stroke="#b9bcd4" stroke-width="1.4"/><line x1="189.3" y1="81.4" x2="191.6" y2="94.2" stroke="#b9bcd4" stroke-width="0.9"/><line x1="189.1" y1="96.4" x2="191.4" y2="109.2" stroke="#b9bcd4" stroke-width="1.1"/><line x1="196.6" y1="120.5" x2="201.1" y2="146.1" stroke="#b9bcd4" stroke-width="0.9"/><line x1="195.5" y1="132.8" x2="208.3" y2="130.5" stroke="#b9bcd4" stroke-width="0.9"/><line x1="198.2" y1="145.5" x2="223.8" y2="141.0" stroke="#b9bcd4" stroke-width="1.4"/><line x1="185.8" y1="3.5" x2="198.6" y2="1.3" stroke="#b9bcd4" stroke-width="1.4"/><line x1="185.8" y1="3.5" x2="188.1" y2="16.3" stroke="#b9bcd4" stroke-width="1.4"/><line x1="188.6" y1="16.5" x2="201.4" y2="14.2" stroke="#b9bcd4" stroke-width="0.9"/><line x1="188.6" y1="16.5" x2="190.8" y2="29.3" stroke="#b9bcd4" stroke-width="1.4"/><line x1="205.8" y1="149.2" x2="210.7" y2="161.3" stroke="#b9bcd4" stroke-width="0.9"/><line x1="210.1" y1="163.0" x2="222.1" y2="158.1" stroke="#b9bcd4" stroke-width="1.1"/><line x1="210.1" y1="163.0" x2="215.0" y2="175.1" stroke="#b9bcd4" stroke-width="0.9"/><line x1="201.0" y1="108.6" x2="213.1" y2="103.8" stroke="#b9bcd4" stroke-width="0.9"/><line x1="201.0" y1="108.6" x2="205.9" y2="120.7" stroke="#b9bcd4" stroke-width="0.9"/><line x1="207.3" y1="120.7" x2="219.3" y2="115.9" stroke="#b9bcd4" stroke-width="1.1"/><line x1="211.6" y1="133.3" x2="223.7" y2="128.4" stroke="#b9bcd4" stroke-width="1.4"/><line x1="211.6" y1="133.3" x2="216.5" y2="145.3" stroke="#b9bcd4" stroke-width="0.9"/><line x1="217.0" y1="145.0" x2="226.8" y2="169.1" stroke="#b9bcd4" stroke-width="1.1"/><line x1="221.5" y1="156.7" x2="226.3" y2="168.8" stroke="#b9bcd4" stroke-width="1.4"/><line x1="225.9" y1="171.2" x2="238.0" y2="166.3" stroke="#b9bcd4" stroke-width="0.9"/><line x1="200.9" y1="69.2" x2="213.0" y2="64.3" stroke="#b9bcd4" stroke-width="0.9"/><line x1="203.4" y1="79.6" x2="227.5" y2="69.9" stroke="#b9bcd4" stroke-width="1.1"/><line x1="209.1" y1="90.3" x2="221.2" y2="85.5" stroke="#b9bcd4" stroke-width="1.1"/><line x1="220.2" y1="115.3" x2="244.3" y2="105.6" stroke="#b9bcd4" stroke-width="1.1"/><line x1="222.0" y1="127.3" x2="234.1" y2="122.4" stroke="#b9bcd4" stroke-width="1.4"/><line x1="234.3" y1="151.6" x2="246.3" y2="146.7" stroke="#b9bcd4" stroke-width="1.1"/><line x1="234.3" y1="151.6" x2="239.2" y2="163.7" stroke="#b9bcd4" stroke-width="0.9"/><line x1="238.8" y1="162.8" x2="248.5" y2="186.9" stroke="#b9bcd4" stroke-width="1.4"/><line x1="244.0" y1="175.5" x2="253.7" y2="199.6" stroke="#b9bcd4" stroke-width="0.9"/><line x1="202.7" y1="38.8" x2="214.7" y2="33.9" stroke="#b9bcd4" stroke-width="1.1"/><line x1="202.7" y1="38.8" x2="212.4" y2="62.9" stroke="#b9bcd4" stroke-width="0.9"/><line x1="204.9" y1="50.2" x2="217.0" y2="45.4" stroke="#b9bcd4" stroke-width="0.9"/><line x1="204.9" y1="50.2" x2="209.8" y2="62.3" stroke="#b9bcd4" stroke-width="1.1"/><line x1="211.3" y1="63.1" x2="235.4" y2="53.3" stroke="#b9bcd4" stroke-width="1.4"/><line x1="211.3" y1="63.1" x2="216.2" y2="75.1" stroke="#b9bcd4" stroke-width="0.9"/><line x1="215.5" y1="76.1" x2="225.3" y2="100.2" stroke="#b9bcd4" stroke-width="0.9"/><line x1="220.7" y1="85.9" x2="225.6" y2="98.0" stroke="#b9bcd4" stroke-width="1.4"/><line x1="226.8" y1="98.7" x2="231.7" y2="110.7" stroke="#b9bcd4" stroke-width="1.1"/><line x1="231.3" y1="111.2" x2="255.4" y2="101.5" stroke="#b9bcd4" stroke-width="0.9"/><line x1="231.3" y1="111.2" x2="236.2" y2="123.3" stroke="#b9bcd4" stroke-width="1.1"/><line x1="241.0" y1="133.9" x2="245.9" y2="146.0" stroke="#b9bcd4" stroke-width="1.4"/><line x1="250.0" y1="160.9" x2="262.0" y2="156.0" stroke="#b9bcd4" stroke-width="1.4"/><line x1="254.4" y1="172.1" x2="266.4" y2="167.3" stroke="#b9bcd4" stroke-width="0.9"/><line x1="254.4" y1="172.1" x2="264.1" y2="196.2" stroke="#b9bcd4" stroke-width="1.4"/><line x1="202.9" y1="11.3" x2="214.9" y2="6.5" stroke="#b9bcd4" stroke-width="1.1"/><line x1="202.9" y1="11.3" x2="207.7" y2="23.4" stroke="#b9bcd4" stroke-width="0.9"/><line x1="208.2" y1="23.2" x2="213.1" y2="35.3" stroke="#b9bcd4" stroke-width="0.9"/><line x1="212.1" y1="35.1" x2="224.1" y2="30.2" stroke="#b9bcd4" stroke-width="0.9"/><line x1="217.3" y1="44.3" x2="227.0" y2="68.4" stroke="#b9bcd4" stroke-width="1.1"/><line x1="229.2" y1="71.0" x2="234.1" y2="83.0" stroke="#b9bcd4" stroke-width="1.1"/><line x1="231.8" y1="81.9" x2="241.5" y2="106.0" stroke="#b9bcd4" stroke-width="0.9"/><line x1="238.2" y1="94.2" x2="247.9" y2="118.3" stroke="#b9bcd4" stroke-width="1.4"/><line x1="244.3" y1="104.7" x2="256.3" y2="99.9" stroke="#b9bcd4" stroke-width="0.9"/><line x1="244.3" y1="104.7" x2="254.0" y2="128.8" stroke="#b9bcd4" stroke-width="1.1"/><line x1="248.2" y1="119.8" x2="260.3" y2="115.0" stroke="#b9bcd4" stroke-width="1.1"/><line x1="248.2" y1="119.8" x2="258.0" y2="144.0" stroke="#b9bcd4" stroke-width="1.4"/><line x1="254.3" y1="129.1" x2="266.3" y2="124.2" stroke="#b9bcd4" stroke-width="1.4"/><line x1="254.3" y1="129.1" x2="259.2" y2="141.2" stroke="#b9bcd4" stroke-width="1.1"/><line x1="258.3" y1="142.7" x2="270.4" y2="137.8" stroke="#b9bcd4" stroke-width="0.9"/><line x1="258.3" y1="142.7" x2="263.2" y2="154.7" stroke="#b9bcd4" stroke-width="1.1"/><line x1="221.9" y1="18.8" x2="234.0" y2="14.0" stroke="#b9bcd4" stroke-width="0.9"/><line x1="224.1" y1="28.4" x2="229.0" y2="40.5" stroke="#b9bcd4" stroke-width="1.1"/><line x1="229.0" y1="41.2" x2="241.1" y2="36.3" stroke="#b9bcd4" stroke-width="1.4"/><line x1="229.0" y1="41.2" x2="233.9" y2="53.2" stroke="#b9bcd4" stroke-width="0.9"/><line x1="235.6" y1="53.8" x2="247.7" y2="48.9" stroke="#b9bcd4" stroke-width="1.1"/><line x1="235.6" y1="53.8" x2="245.3" y2="77.9" stroke="#b9bcd4" stroke-width="0.9"/><line x1="245.3" y1="78.1" x2="257.4" y2="73.2" stroke="#b9bcd4" stroke-width="0.9"/><line x1="245.3" y1="78.1" x2="250.2" y2="90.1" stroke="#b9bcd4" stroke-width="1.4"/><line x1="250.8" y1="89.9" x2="255.6" y2="101.9" stroke="#b9bcd4" stroke-width="1.1"/><line x1="253.6" y1="101.3" x2="277.7" y2="91.6" stroke="#b9bcd4" stroke-width="1.1"/><line x1="253.6" y1="101.3" x2="258.5" y2="113.4" stroke="#b9bcd4" stroke-width="1.4"/><line x1="260.3" y1="111.9" x2="265.2" y2="124.0" stroke="#b9bcd4" stroke-width="1.1"/><line x1="263.1" y1="125.7" x2="287.2" y2="116.0" stroke="#b9bcd4" stroke-width="1.1"/><line x1="263.1" y1="125.7" x2="267.9" y2="137.7" stroke="#b9bcd4" stroke-width="1.4"/><line x1="284.3" y1="172.2" x2="289.2" y2="184.2" stroke="#b9bcd4" stroke-width="1.4"/><line x1="229.7" y1="1.6" x2="234.6" y2="13.6" stroke="#b9bcd4" stroke-width="1.1"/><line x1="236.4" y1="24.5" x2="248.5" y2="19.7" stroke="#b9bcd4" stroke-width="0.9"/><line x1="242.7" y1="36.3" x2="247.6" y2="48.4" stroke="#b9bcd4" stroke-width="1.4"/><line x1="251.5" y1="58.9" x2="263.5" y2="54.0" stroke="#b9bcd4" stroke-width="1.1"/><line x1="251.5" y1="58.9" x2="256.3" y2="70.9" stroke="#b9bcd4" stroke-width="0.9"/><line x1="256.9" y1="73.1" x2="261.8" y2="85.2" stroke="#b9bcd4" stroke-width="1.1"/><line x1="261.1" y1="82.7" x2="285.2" y2="73.0" stroke="#b9bcd4" stroke-width="1.1"/><line x1="266.9" y1="95.7" x2="279.0" y2="90.8" stroke="#b9bcd4" stroke-width="1.1"/><line x1="277.2" y1="121.1" x2="282.0" y2="133.2" stroke="#b9bcd4" stroke-width="1.1"/><line x1="280.2" y1="133.0" x2="292.2" y2="128.1" stroke="#b9bcd4" stroke-width="0.9"/><line x1="280.2" y1="133.0" x2="289.9" y2="157.1" stroke="#b9bcd4" stroke-width="1.4"/><line x1="287.5" y1="145.6" x2="299.6" y2="140.7" stroke="#b9bcd4" stroke-width="0.9"/><line x1="291.5" y1="156.3" x2="296.4" y2="168.3" stroke="#b9bcd4" stroke-width="0.9"/><line x1="245.2" y1="6.4" x2="257.3" y2="1.5" stroke="#b9bcd4" stroke-width="1.1"/><line x1="245.2" y1="6.4" x2="255.0" y2="30.5" stroke="#b9bcd4" stroke-width="1.4"/><line x1="247.8" y1="17.6" x2="252.7" y2="29.7" stroke="#b9bcd4" stroke-width="1.1"/><line x1="260.9" y1="43.6" x2="273.0" y2="38.7" stroke="#b9bcd4" stroke-width="0.9"/><line x1="264.7" y1="53.7" x2="276.7" y2="48.8" stroke="#b9bcd4" stroke-width="1.1"/><line x1="267.5" y1="67.9" x2="279.6" y2="63.0" stroke="#b9bcd4" stroke-width="0.9"/><line x1="267.5" y1="67.9" x2="272.4" y2="79.9" stroke="#b9bcd4" stroke-width="1.1"/><line x1="275.0" y1="81.0" x2="284.8" y2="105.1" stroke="#b9bcd4" stroke-width="1.1"/><line x1="280.5" y1="93.8" x2="285.3" y2="105.8" stroke="#b9bcd4" stroke-width="1.4"/><line x1="284.2" y1="104.5" x2="296.3" y2="99.7" stroke="#b9bcd4" stroke-width="0.9"/><line x1="284.2" y1="104.5" x2="289.1" y2="116.6" stroke="#b9bcd4" stroke-width="1.1"/><line x1="287.1" y1="116.4" x2="292.0" y2="128.5" stroke="#b9bcd4" stroke-width="1.4"/><line x1="292.5" y1="129.3" x2="316.6" y2="119.5" stroke="#b9bcd4" stroke-width="1.4"/><line x1="292.5" y1="129.3" x2="297.4" y2="141.3" stroke="#b9bcd4" stroke-width="1.4"/><line x1="299.0" y1="140.3" x2="323.1" y2="130.6" stroke="#b9bcd4" stroke-width="1.1"/><line x1="299.0" y1="140.3" x2="308.7" y2="164.5" stroke="#b9bcd4" stroke-width="0.9"/><line x1="258.7" y1="0.8" x2="270.7" y2="-4.0" stroke="#b9bcd4" stroke-width="1.1"/><line x1="258.7" y1="0.8" x2="263.5" y2="12.9" stroke="#b9bcd4" stroke-width="1.4"/><line x1="262.6" y1="14.9" x2="274.7" y2="10.1" stroke="#b9bcd4" stroke-width="1.4"/><line x1="266.6" y1="28.0" x2="278.7" y2="23.2" stroke="#b9bcd4" stroke-width="1.1"/><line x1="266.6" y1="28.0" x2="271.5" y2="40.1" stroke="#b9bcd4" stroke-width="0.9"/><line x1="273.0" y1="40.0" x2="285.1" y2="35.2" stroke="#b9bcd4" stroke-width="1.1"/><line x1="277.8" y1="52.7" x2="289.8" y2="47.9" stroke="#b9bcd4" stroke-width="0.9"/><line x1="277.8" y1="52.7" x2="287.5" y2="76.8" stroke="#b9bcd4" stroke-width="1.1"/><line x1="282.0" y1="64.2" x2="286.9" y2="76.3" stroke="#b9bcd4" stroke-width="1.4"/><line x1="290.0" y1="87.7" x2="294.9" y2="99.8" stroke="#b9bcd4" stroke-width="0.9"/><line x1="295.1" y1="97.4" x2="319.2" y2="87.7" stroke="#b9bcd4" stroke-width="1.1"/><line x1="300.9" y1="110.8" x2="313.0" y2="106.0" stroke="#b9bcd4" stroke-width="0.9"/><line x1="300.9" y1="110.8" x2="305.8" y2="122.9" stroke="#b9bcd4" stroke-width="0.9"/><line x1="268.5" y1="-0.9" x2="273.4" y2="11.1" stroke="#b9bcd4" stroke-width="1.4"/><line x1="278.0" y1="21.9" x2="290.0" y2="17.0" stroke="#b9bcd4" stroke-width="1.1"/><line x1="278.0" y1="21.9" x2="287.7" y2="46.0" stroke="#b9bcd4" stroke-width="1.1"/><line x1="284.1" y1="34.3" x2="296.1" y2="29.5" stroke="#b9bcd4" stroke-width="1.4"/><line x1="284.1" y1="34.3" x2="288.9" y2="46.4" stroke="#b9bcd4" stroke-width="1.1"/><line x1="289.3" y1="47.1" x2="313.4" y2="37.4" stroke="#b9bcd4" stroke-width="1.1"/><line x1="289.3" y1="47.1" x2="294.2" y2="59.2" stroke="#b9bcd4" stroke-width="1.1"/><line x1="294.4" y1="57.8" x2="306.4" y2="53.0" stroke="#b9bcd4" stroke-width="1.4"/><line x1="299.1" y1="68.4" x2="304.0" y2="80.4" stroke="#b9bcd4" stroke-width="0.9"/><line x1="289.9" y1="16.7" x2="302.0" y2="11.8" stroke="#b9bcd4" stroke-width="1.1"/><line x1="289.9" y1="16.7" x2="294.8" y2="28.8" stroke="#b9bcd4" stroke-width="1.4"/><line x1="297.3" y1="30.0" x2="321.4" y2="20.3" stroke="#b9bcd4" stroke-width="1.4"/><line x1="301.6" y1="39.3" x2="313.6" y2="34.4" stroke="#b9bcd4" stroke-width="1.4"/><line x1="301.6" y1="39.3" x2="306.4" y2="51.4" stroke="#b9bcd4" stroke-width="1.4"/><line x1="299.6" y1="-1.2" x2="311.7" y2="-6.1" stroke="#b9bcd4" stroke-width="1.4"/><line x1="299.6" y1="-1.2" x2="304.5" y2="10.8" stroke="#b9bcd4" stroke-width="1.4"/><line x1="301.4" y1="10.5" x2="325.5" y2="0.7" stroke="#b9bcd4" stroke-width="1.1"/><line x1="301.4" y1="10.5" x2="306.3" y2="22.5" stroke="#b9bcd4" stroke-width="1.1"/><line x1="300.1" y1="5.5" x2="312.3" y2="10.0" stroke="#b9bcd4" stroke-width="1.4"/><line x1="317.7" y1="-0.3" x2="329.9" y2="4.1" stroke="#b9bcd4" stroke-width="0.9"/><line x1="314.2" y1="8.7" x2="338.6" y2="17.6" stroke="#b9bcd4" stroke-width="1.4"/><line x1="314.2" y1="8.7" x2="309.7" y2="20.9" stroke="#b9bcd4" stroke-width="1.4"/><line x1="309.2" y1="21.6" x2="321.4" y2="26.0" stroke="#b9bcd4" stroke-width="1.1"/><line x1="306.1" y1="36.5" x2="318.3" y2="40.9" stroke="#b9bcd4" stroke-width="0.9"/><line x1="306.1" y1="36.5" x2="297.2" y2="60.9" stroke="#b9bcd4" stroke-width="1.4"/><line x1="299.5" y1="46.7" x2="295.1" y2="58.9" stroke="#b9bcd4" stroke-width="1.4"/><line x1="332.0" y1="3.5" x2="356.4" y2="12.4" stroke="#b9bcd4" stroke-width="0.9"/><line x1="332.0" y1="3.5" x2="327.5" y2="15.7" stroke="#b9bcd4" stroke-width="1.1"/><line x1="321.1" y1="27.5" x2="316.7" y2="39.7" stroke="#b9bcd4" stroke-width="0.9"/><line x1="317.4" y1="39.7" x2="329.7" y2="44.1" stroke="#b9bcd4" stroke-width="0.9"/><line x1="307.2" y1="64.4" x2="319.4" y2="68.8" stroke="#b9bcd4" stroke-width="1.1"/><line x1="307.2" y1="64.4" x2="298.3" y2="88.8" stroke="#b9bcd4" stroke-width="1.4"/><line x1="301.8" y1="76.0" x2="314.1" y2="80.5" stroke="#b9bcd4" stroke-width="0.9"/><line x1="340.9" y1="9.3" x2="353.2" y2="13.7" stroke="#b9bcd4" stroke-width="1.4"/><line x1="340.9" y1="9.3" x2="336.5" y2="21.5" stroke="#b9bcd4" stroke-width="1.4"/><line x1="337.6" y1="21.4" x2="362.1" y2="30.2" stroke="#b9bcd4" stroke-width="1.4"/><line x1="337.6" y1="21.4" x2="333.2" y2="33.6" stroke="#b9bcd4" stroke-width="0.9"/><line x1="331.9" y1="31.8" x2="327.5" y2="44.0" stroke="#b9bcd4" stroke-width="1.1"/><line x1="330.6" y1="42.5" x2="321.8" y2="66.9" stroke="#b9bcd4" stroke-width="1.4"/><line x1="323.0" y1="55.2" x2="335.3" y2="59.7" stroke="#b9bcd4" stroke-width="1.1"/><line x1="319.3" y1="69.6" x2="310.4" y2="94.0" stroke="#b9bcd4" stroke-width="0.9"/><line x1="316.4" y1="81.7" x2="311.9" y2="93.9" stroke="#b9bcd4" stroke-width="0.9"/><line x1="310.5" y1="94.1" x2="322.7" y2="98.6" stroke="#b9bcd4" stroke-width="1.1"/><line x1="310.5" y1="94.1" x2="301.6" y2="118.6" stroke="#b9bcd4" stroke-width="1.4"/><line x1="305.2" y1="106.6" x2="329.6" y2="115.5" stroke="#b9bcd4" stroke-width="1.4"/><line x1="305.2" y1="106.6" x2="300.7" y2="118.8" stroke="#b9bcd4" stroke-width="1.1"/><line x1="358.7" y1="-1.8" x2="370.9" y2="2.7" stroke="#b9bcd4" stroke-width="0.9"/><line x1="356.0" y1="12.2" x2="351.5" y2="24.4" stroke="#b9bcd4" stroke-width="1.4"/><line x1="348.6" y1="24.2" x2="360.8" y2="28.6" stroke="#b9bcd4" stroke-width="1.1"/><line x1="345.9" y1="37.7" x2="370.3" y2="46.6" stroke="#b9bcd4" stroke-width="1.4"/><line x1="345.9" y1="37.7" x2="341.4" y2="49.9" stroke="#b9bcd4" stroke-width="0.9"/><line x1="342.5" y1="47.0" x2="338.0" y2="59.2" stroke="#b9bcd4" stroke-width="1.1"/><line x1="338.4" y1="61.7" x2="329.5" y2="86.1" stroke="#b9bcd4" stroke-width="1.1"/><line x1="331.0" y1="71.0" x2="343.2" y2="75.5" stroke="#b9bcd4" stroke-width="0.9"/><line x1="331.0" y1="71.0" x2="322.1" y2="95.5" stroke="#b9bcd4" stroke-width="1.4"/><line x1="327.8" y1="83.5" x2="340.0" y2="88.0" stroke="#b9bcd4" stroke-width="1.4"/><line x1="327.8" y1="83.5" x2="323.3" y2="95.7" stroke="#b9bcd4" stroke-width="1.4"/><line x1="323.4" y1="95.4" x2="318.9" y2="107.7" stroke="#b9bcd4" stroke-width="0.9"/><line x1="314.0" y1="122.1" x2="326.2" y2="126.6" stroke="#b9bcd4" stroke-width="1.4"/><line x1="314.0" y1="122.1" x2="305.1" y2="146.5" stroke="#b9bcd4" stroke-width="0.9"/><line x1="312.0" y1="133.9" x2="324.2" y2="138.4" stroke="#b9bcd4" stroke-width="0.9"/><line x1="306.0" y1="148.1" x2="301.6" y2="160.3" stroke="#b9bcd4" stroke-width="1.1"/><line x1="302.9" y1="158.3" x2="298.5" y2="170.5" stroke="#b9bcd4" stroke-width="0.9"/><line x1="369.2" y1="3.8" x2="381.4" y2="8.3" stroke="#b9bcd4" stroke-width="0.9"/><line x1="369.2" y1="3.8" x2="360.3" y2="28.3" stroke="#b9bcd4" stroke-width="0.9"/><line x1="363.4" y1="26.5" x2="387.8" y2="35.4" stroke="#b9bcd4" stroke-width="1.4"/><line x1="363.4" y1="26.5" x2="358.9" y2="38.7" stroke="#b9bcd4" stroke-width="1.1"/><line x1="353.1" y1="53.4" x2="365.3" y2="57.8" stroke="#b9bcd4" stroke-width="1.1"/><line x1="353.1" y1="53.4" x2="344.2" y2="77.8" stroke="#b9bcd4" stroke-width="0.9"/><line x1="343.9" y1="77.2" x2="356.1" y2="81.6" stroke="#b9bcd4" stroke-width="1.1"/><line x1="343.9" y1="77.2" x2="339.5" y2="89.4" stroke="#b9bcd4" stroke-width="1.4"/><line x1="340.1" y1="90.4" x2="352.3" y2="94.9" stroke="#b9bcd4" stroke-width="1.1"/><line x1="340.1" y1="90.4" x2="335.6" y2="102.6" stroke="#b9bcd4" stroke-width="1.1"/><line x1="334.4" y1="101.6" x2="325.6" y2="126.1" stroke="#b9bcd4" stroke-width="1.4"/><line x1="331.1" y1="112.0" x2="322.2" y2="136.4" stroke="#b9bcd4" stroke-width="1.1"/><line x1="328.5" y1="125.0" x2="340.7" y2="129.4" stroke="#b9bcd4" stroke-width="1.1"/><line x1="328.5" y1="125.0" x2="324.1" y2="137.2" stroke="#b9bcd4" stroke-width="1.4"/><line x1="320.8" y1="139.0" x2="311.9" y2="163.5" stroke="#b9bcd4" stroke-width="1.1"/><line x1="316.5" y1="152.6" x2="341.0" y2="161.5" stroke="#b9bcd4" stroke-width="0.9"/><line x1="316.5" y1="152.6" x2="307.6" y2="177.0" stroke="#b9bcd4" stroke-width="0.9"/><line x1="313.9" y1="161.2" x2="326.1" y2="165.6" stroke="#b9bcd4" stroke-width="1.4"/><line x1="309.3" y1="176.6" x2="304.9" y2="188.9" stroke="#b9bcd4" stroke-width="0.9"/><line x1="381.8" y1="7.9" x2="394.1" y2="12.3" stroke="#b9bcd4" stroke-width="0.9"/><line x1="381.8" y1="7.9" x2="372.9" y2="32.3" stroke="#b9bcd4" stroke-width="0.9"/><line x1="378.9" y1="22.5" x2="374.4" y2="34.7" stroke="#b9bcd4" stroke-width="0.9"/><line x1="374.7" y1="33.0" x2="386.9" y2="37.4" stroke="#b9bcd4" stroke-width="0.9"/><line x1="374.7" y1="33.0" x2="370.3" y2="45.2" stroke="#b9bcd4" stroke-width="1.1"/><line x1="370.5" y1="44.4" x2="366.0" y2="56.6" stroke="#b9bcd4" stroke-width="0.9"/><line x1="365.0" y1="56.4" x2="377.2" y2="60.9" stroke="#b9bcd4" stroke-width="1.4"/><line x1="361.5" y1="71.3" x2="373.7" y2="75.8" stroke="#b9bcd4" stroke-width="1.1"/><line x1="358.0" y1="80.3" x2="353.5" y2="92.5" stroke="#b9bcd4" stroke-width="1.1"/><line x1="350.2" y1="94.0" x2="362.5" y2="98.5" stroke="#b9bcd4" stroke-width="1.4"/><line x1="350.2" y1="94.0" x2="341.3" y2="118.4" stroke="#b9bcd4" stroke-width="1.4"/><line x1="346.8" y1="105.0" x2="371.2" y2="113.9" stroke="#b9bcd4" stroke-width="1.1"/><line x1="341.3" y1="120.2" x2="353.6" y2="124.7" stroke="#b9bcd4" stroke-width="1.4"/><line x1="337.3" y1="130.7" x2="361.8" y2="139.6" stroke="#b9bcd4" stroke-width="1.1"/><line x1="337.3" y1="130.7" x2="328.4" y2="155.1" stroke="#b9bcd4" stroke-width="1.4"/><line x1="334.2" y1="141.5" x2="346.4" y2="145.9" stroke="#b9bcd4" stroke-width="1.1"/><line x1="334.2" y1="141.5" x2="329.8" y2="153.7" stroke="#b9bcd4" stroke-width="1.1"/><line x1="331.5" y1="153.3" x2="322.6" y2="177.7" stroke="#b9bcd4" stroke-width="1.4"/><line x1="322.9" y1="178.8" x2="347.4" y2="187.6" stroke="#b9bcd4" stroke-width="1.4"/><line x1="371.5" y1="72.3" x2="383.7" y2="76.7" stroke="#b9bcd4" stroke-width="0.9"/><line x1="371.5" y1="72.3" x2="367.0" y2="84.5" stroke="#b9bcd4" stroke-width="1.4"/><line x1="368.6" y1="84.9" x2="380.8" y2="89.3" stroke="#b9bcd4" stroke-width="0.9"/><line x1="368.6" y1="84.9" x2="364.2" y2="97.1" stroke="#b9bcd4" stroke-width="0.9"/><line x1="364.2" y1="96.9" x2="355.3" y2="121.4" stroke="#b9bcd4" stroke-width="1.4"/><line x1="361.2" y1="109.9" x2="373.4" y2="114.3" stroke="#b9bcd4" stroke-width="1.4"/><line x1="361.2" y1="109.9" x2="352.3" y2="134.3" stroke="#b9bcd4" stroke-width="1.4"/><line x1="354.6" y1="124.6" x2="366.8" y2="129.1" stroke="#b9bcd4" stroke-width="1.1"/><line x1="352.7" y1="136.1" x2="377.1" y2="145.0" stroke="#b9bcd4" stroke-width="1.4"/><line x1="352.7" y1="136.1" x2="348.2" y2="148.3" stroke="#b9bcd4" stroke-width="1.1"/><line x1="340.5" y1="159.4" x2="364.9" y2="168.3" stroke="#b9bcd4" stroke-width="1.1"/><line x1="340.5" y1="159.4" x2="336.0" y2="171.6" stroke="#b9bcd4" stroke-width="1.4"/><line x1="339.0" y1="172.4" x2="351.2" y2="176.9" stroke="#b9bcd4" stroke-width="1.1"/><line x1="371.0" y1="115.4" x2="366.6" y2="127.7" stroke="#b9bcd4" stroke-width="1.1"/><line x1="366.6" y1="128.5" x2="378.8" y2="132.9" stroke="#b9bcd4" stroke-width="1.4"/><line x1="364.6" y1="138.1" x2="389.0" y2="147.0" stroke="#b9bcd4" stroke-width="1.4"/><line x1="357.1" y1="153.3" x2="352.7" y2="165.5" stroke="#b9bcd4" stroke-width="1.4"/><line x1="352.5" y1="162.1" x2="376.9" y2="171.0" stroke="#b9bcd4" stroke-width="1.1"/><line x1="352.5" y1="162.1" x2="348.0" y2="174.3" stroke="#b9bcd4" stroke-width="1.1"/><line x1="348.8" y1="178.0" x2="361.0" y2="182.4" stroke="#b9bcd4" stroke-width="1.4"/><line x1="348.8" y1="178.0" x2="339.9" y2="202.4" stroke="#b9bcd4" stroke-width="1.4"/><line x1="378.6" y1="130.7" x2="403.0" y2="139.6" stroke="#b9bcd4" stroke-width="1.4"/><line x1="378.6" y1="130.7" x2="374.2" y2="142.9" stroke="#b9bcd4" stroke-width="0.9"/><line x1="373.7" y1="145.9" x2="385.9" y2="150.3" stroke="#b9bcd4" stroke-width="0.9"/><line x1="373.7" y1="145.9" x2="369.2" y2="158.1" stroke="#b9bcd4" stroke-width="0.9"/><line x1="370.6" y1="157.4" x2="382.8" y2="161.8" stroke="#b9bcd4" stroke-width="1.4"/><line x1="370.6" y1="157.4" x2="366.2" y2="169.6" stroke="#b9bcd4" stroke-width="1.4"/><line x1="364.8" y1="166.8" x2="360.4" y2="179.0" stroke="#b9bcd4" stroke-width="1.1"/><line x1="379.7" y1="173.7" x2="375.2" y2="185.9" stroke="#b9bcd4" stroke-width="1.1"/><line x1="378.3" y1="161.3" x2="384.0" y2="169.5" stroke="#b9bcd4" stroke-width="0.9"/><line x1="383.7" y1="167.4" x2="391.9" y2="161.7" stroke="#b9bcd4" stroke-width="1.4"/><line x1="388.3" y1="175.2" x2="404.7" y2="163.7" stroke="#b9bcd4" stroke-width="1.1"/><line x1="388.3" y1="175.2" x2="394.1" y2="183.4" stroke="#b9bcd4" stroke-width="1.1"/><line x1="378.7" y1="147.6" x2="395.1" y2="136.1" stroke="#b9bcd4" stroke-width="1.4"/><line x1="384.0" y1="155.9" x2="392.2" y2="150.1" stroke="#b9bcd4" stroke-width="0.9"/><line x1="384.0" y1="155.9" x2="395.5" y2="172.3" stroke="#b9bcd4" stroke-width="1.4"/><line x1="388.7" y1="163.0" x2="405.0" y2="151.5" stroke="#b9bcd4" stroke-width="1.1"/><line x1="394.6" y1="171.6" x2="402.7" y2="165.8" stroke="#b9bcd4" stroke-width="1.1"/><line x1="400.4" y1="177.7" x2="408.6" y2="172.0" stroke="#b9bcd4" stroke-width="1.1"/><line x1="379.9" y1="131.0" x2="391.4" y2="147.4" stroke="#b9bcd4" stroke-width="0.9"/><line x1="386.6" y1="142.0" x2="394.8" y2="136.3" stroke="#b9bcd4" stroke-width="1.1"/><line x1="386.6" y1="142.0" x2="392.3" y2="150.2" stroke="#b9bcd4" stroke-width="1.4"/><line x1="411.0" y1="173.8" x2="427.4" y2="162.3" stroke="#b9bcd4" stroke-width="1.1"/><line x1="411.0" y1="173.8" x2="416.7" y2="182.0" stroke="#b9bcd4" stroke-width="1.4"/><line x1="382.1" y1="117.3" x2="398.4" y2="105.9" stroke="#b9bcd4" stroke-width="1.1"/><line x1="390.5" y1="126.1" x2="406.9" y2="114.6" stroke="#b9bcd4" stroke-width="1.1"/><line x1="390.5" y1="126.1" x2="402.0" y2="142.5" stroke="#b9bcd4" stroke-width="1.4"/><line x1="393.8" y1="134.5" x2="402.0" y2="128.7" stroke="#b9bcd4" stroke-width="1.4"/><line x1="400.2" y1="144.3" x2="416.6" y2="132.8" stroke="#b9bcd4" stroke-width="0.9"/><line x1="406.2" y1="149.7" x2="414.4" y2="143.9" stroke="#b9bcd4" stroke-width="0.9"/><line x1="406.2" y1="149.7" x2="411.9" y2="157.9" stroke="#b9bcd4" stroke-width="1.1"/><line x1="419.5" y1="168.4" x2="427.7" y2="162.7" stroke="#b9bcd4" stroke-width="1.1"/><line x1="419.5" y1="168.4" x2="431.0" y2="184.8" stroke="#b9bcd4" stroke-width="1.1"/><line x1="422.3" y1="173.8" x2="433.7" y2="190.2" stroke="#b9bcd4" stroke-width="1.4"/><line x1="386.2" y1="105.9" x2="392.0" y2="114.1" stroke="#b9bcd4" stroke-width="1.4"/><line x1="394.2" y1="111.3" x2="405.7" y2="127.7" stroke="#b9bcd4" stroke-width="1.1"/><line x1="404.5" y1="128.6" x2="410.2" y2="136.8" stroke="#b9bcd4" stroke-width="1.1"/><line x1="408.0" y1="138.5" x2="416.2" y2="132.8" stroke="#b9bcd4" stroke-width="0.9"/><line x1="408.0" y1="138.5" x2="419.4" y2="154.9" stroke="#b9bcd4" stroke-width="0.9"/><line x1="416.9" y1="146.3" x2="425.1" y2="140.6" stroke="#b9bcd4" stroke-width="0.9"/><line x1="419.8" y1="153.3" x2="425.6" y2="161.5" stroke="#b9bcd4" stroke-width="1.1"/><line x1="427.6" y1="162.3" x2="444.0" y2="150.8" stroke="#b9bcd4" stroke-width="0.9"/><line x1="378.1" y1="74.3" x2="394.5" y2="62.9" stroke="#b9bcd4" stroke-width="1.4"/><line x1="384.3" y1="82.0" x2="392.5" y2="76.3" stroke="#b9bcd4" stroke-width="1.4"/><line x1="384.3" y1="82.0" x2="390.1" y2="90.2" stroke="#b9bcd4" stroke-width="1.4"/><line x1="406.5" y1="114.8" x2="414.7" y2="109.0" stroke="#b9bcd4" stroke-width="1.1"/><line x1="406.5" y1="114.8" x2="418.0" y2="131.1" stroke="#b9bcd4" stroke-width="1.1"/><line x1="412.6" y1="122.1" x2="429.0" y2="110.6" stroke="#b9bcd4" stroke-width="1.1"/><line x1="417.4" y1="130.6" x2="428.8" y2="147.0" stroke="#b9bcd4" stroke-width="0.9"/><line x1="427.5" y1="147.9" x2="433.3" y2="156.1" stroke="#b9bcd4" stroke-width="1.4"/><line x1="434.5" y1="155.4" x2="442.6" y2="149.7" stroke="#b9bcd4" stroke-width="1.4"/><line x1="434.5" y1="155.4" x2="445.9" y2="171.8" stroke="#b9bcd4" stroke-width="0.9"/><line x1="440.9" y1="163.7" x2="449.1" y2="157.9" stroke="#b9bcd4" stroke-width="1.4"/><line x1="446.5" y1="172.9" x2="458.0" y2="189.3" stroke="#b9bcd4" stroke-width="1.1"/><line x1="451.7" y1="180.2" x2="459.9" y2="174.5" stroke="#b9bcd4" stroke-width="1.1"/><line x1="381.7" y1="59.2" x2="398.0" y2="47.8" stroke="#b9bcd4" stroke-width="1.4"/><line x1="381.7" y1="59.2" x2="393.1" y2="75.6" stroke="#b9bcd4" stroke-width="1.4"/><line x1="390.7" y1="77.7" x2="396.5" y2="85.9" stroke="#b9bcd4" stroke-width="1.4"/><line x1="404.2" y1="94.7" x2="420.6" y2="83.2" stroke="#b9bcd4" stroke-width="0.9"/><line x1="416.3" y1="108.9" x2="424.5" y2="103.2" stroke="#b9bcd4" stroke-width="0.9"/><line x1="422.0" y1="117.0" x2="427.7" y2="125.2" stroke="#b9bcd4" stroke-width="0.9"/><line x1="431.1" y1="134.4" x2="439.3" y2="128.7" stroke="#b9bcd4" stroke-width="1.1"/><line x1="442.2" y1="148.8" x2="450.4" y2="143.1" stroke="#b9bcd4" stroke-width="1.4"/><line x1="449.4" y1="157.5" x2="460.9" y2="173.8" stroke="#b9bcd4" stroke-width="1.1"/><line x1="452.9" y1="167.0" x2="461.1" y2="161.3" stroke="#b9bcd4" stroke-width="1.1"/><line x1="459.0" y1="174.5" x2="475.4" y2="163.0" stroke="#b9bcd4" stroke-width="0.9"/><line x1="389.6" y1="52.5" x2="397.8" y2="46.8" stroke="#b9bcd4" stroke-width="1.1"/><line x1="393.4" y1="64.2" x2="401.6" y2="58.4" stroke="#b9bcd4" stroke-width="0.9"/><line x1="400.5" y1="70.4" x2="416.9" y2="58.9" stroke="#b9bcd4" stroke-width="1.4"/><line x1="400.5" y1="70.4" x2="412.0" y2="86.8" stroke="#b9bcd4" stroke-width="0.9"/><line x1="404.2" y1="80.1" x2="412.4" y2="74.3" stroke="#b9bcd4" stroke-width="1.1"/><line x1="404.2" y1="80.1" x2="410.0" y2="88.3" stroke="#b9bcd4" stroke-width="1.1"/><line x1="412.7" y1="88.3" x2="420.9" y2="82.6" stroke="#b9bcd4" stroke-width="1.4"/><line x1="412.7" y1="88.3" x2="418.5" y2="96.5" stroke="#b9bcd4" stroke-width="1.4"/><line x1="418.5" y1="94.2" x2="434.9" y2="82.7" stroke="#b9bcd4" stroke-width="1.4"/><line x1="421.4" y1="102.1" x2="429.6" y2="96.4" stroke="#b9bcd4" stroke-width="1.1"/><line x1="429.2" y1="110.6" x2="434.9" y2="118.7" stroke="#b9bcd4" stroke-width="1.4"/><line x1="436.0" y1="117.8" x2="441.7" y2="126.0" stroke="#b9bcd4" stroke-width="1.4"/><line x1="445.0" y1="137.8" x2="450.7" y2="146.0" stroke="#b9bcd4" stroke-width="1.1"/><line x1="457.7" y1="154.4" x2="474.1" y2="142.9" stroke="#b9bcd4" stroke-width="1.4"/><line x1="462.6" y1="160.0" x2="470.8" y2="154.3" stroke="#b9bcd4" stroke-width="1.4"/><line x1="462.6" y1="160.0" x2="468.4" y2="168.2" stroke="#b9bcd4" stroke-width="1.1"/><line x1="378.3" y1="23.6" x2="394.7" y2="12.1" stroke="#b9bcd4" stroke-width="0.9"/><line x1="383.6" y1="31.0" x2="391.8" y2="25.3" stroke="#b9bcd4" stroke-width="0.9"/><line x1="389.9" y1="41.6" x2="401.4" y2="58.0" stroke="#b9bcd4" stroke-width="1.4"/><line x1="394.9" y1="48.5" x2="403.1" y2="42.7" stroke="#b9bcd4" stroke-width="1.4"/><line x1="403.0" y1="56.0" x2="411.2" y2="50.3" stroke="#b9bcd4" stroke-width="1.1"/><line x1="415.3" y1="74.1" x2="421.1" y2="82.3" stroke="#b9bcd4" stroke-width="1.4"/><line x1="424.3" y1="88.2" x2="430.1" y2="96.4" stroke="#b9bcd4" stroke-width="1.4"/><line x1="448.9" y1="122.8" x2="457.1" y2="117.1" stroke="#b9bcd4" stroke-width="0.9"/><line x1="455.1" y1="130.0" x2="463.3" y2="124.3" stroke="#b9bcd4" stroke-width="0.9"/><line x1="460.4" y1="137.2" x2="468.6" y2="131.4" stroke="#b9bcd4" stroke-width="1.1"/><line x1="464.2" y1="148.4" x2="472.3" y2="142.7" stroke="#b9bcd4" stroke-width="1.4"/><line x1="464.2" y1="148.4" x2="469.9" y2="156.6" stroke="#b9bcd4" stroke-width="1.1"/><line x1="380.8" y1="9.0" x2="386.5" y2="17.2" stroke="#b9bcd4" stroke-width="0.9"/><line x1="388.1" y1="19.3" x2="404.5" y2="7.8" stroke="#b9bcd4" stroke-width="1.4"/><line x1="392.0" y1="26.1" x2="400.2" y2="20.4" stroke="#b9bcd4" stroke-width="1.1"/><line x1="399.9" y1="33.6" x2="411.3" y2="49.9" stroke="#b9bcd4" stroke-width="1.4"/><line x1="402.8" y1="43.8" x2="410.9" y2="38.0" stroke="#b9bcd4" stroke-width="0.9"/><line x1="410.9" y1="50.4" x2="427.3" y2="38.9" stroke="#b9bcd4" stroke-width="1.1"/><line x1="410.9" y1="50.4" x2="416.6" y2="58.6" stroke="#b9bcd4" stroke-width="1.1"/><line x1="414.2" y1="57.9" x2="419.9" y2="66.1" stroke="#b9bcd4" stroke-width="1.1"/><line x1="421.1" y1="68.0" x2="429.3" y2="62.3" stroke="#b9bcd4" stroke-width="1.4"/><line x1="421.1" y1="68.0" x2="432.6" y2="84.4" stroke="#b9bcd4" stroke-width="1.4"/><line x1="427.6" y1="74.3" x2="435.8" y2="68.6" stroke="#b9bcd4" stroke-width="1.4"/><line x1="432.5" y1="82.9" x2="443.9" y2="99.3" stroke="#b9bcd4" stroke-width="1.1"/><line x1="448.5" y1="110.3" x2="460.0" y2="126.6" stroke="#b9bcd4" stroke-width="1.4"/><line x1="454.3" y1="117.4" x2="462.5" y2="111.7" stroke="#b9bcd4" stroke-width="0.9"/><line x1="472.0" y1="143.1" x2="480.2" y2="137.3" stroke="#b9bcd4" stroke-width="1.1"/><line x1="390.0" y1="6.3" x2="398.2" y2="0.5" stroke="#b9bcd4" stroke-width="1.1"/><line x1="396.0" y1="11.6" x2="401.8" y2="19.8" stroke="#b9bcd4" stroke-width="0.9"/><line x1="400.3" y1="21.9" x2="411.8" y2="38.3" stroke="#b9bcd4" stroke-width="1.1"/><line x1="408.4" y1="30.3" x2="416.6" y2="24.6" stroke="#b9bcd4" stroke-width="0.9"/><line x1="417.8" y1="43.9" x2="434.1" y2="32.4" stroke="#b9bcd4" stroke-width="0.9"/><line x1="422.3" y1="52.3" x2="428.1" y2="60.5" stroke="#b9bcd4" stroke-width="1.1"/><line x1="429.9" y1="60.7" x2="438.1" y2="55.0" stroke="#b9bcd4" stroke-width="0.9"/><line x1="446.3" y1="86.2" x2="454.5" y2="80.4" stroke="#b9bcd4" stroke-width="1.4"/><line x1="454.2" y1="93.3" x2="460.0" y2="101.5" stroke="#b9bcd4" stroke-width="0.9"/><line x1="460.3" y1="103.5" x2="466.1" y2="111.7" stroke="#b9bcd4" stroke-width="1.1"/><line x1="464.1" y1="110.9" x2="472.3" y2="105.1" stroke="#b9bcd4" stroke-width="1.1"/><line x1="468.7" y1="120.9" x2="474.4" y2="129.1" stroke="#b9bcd4" stroke-width="1.4"/><line x1="398.2" y1="-0.6" x2="406.4" y2="-6.3" stroke="#b9bcd4" stroke-width="0.9"/><line x1="403.3" y1="6.5" x2="411.5" y2="0.8" stroke="#b9bcd4" stroke-width="1.4"/><line x1="403.3" y1="6.5" x2="414.8" y2="22.9" stroke="#b9bcd4" stroke-width="0.9"/><line x1="413.9" y1="24.8" x2="419.7" y2="33.0" stroke="#b9bcd4" stroke-width="0.9"/><line x1="420.4" y1="33.3" x2="428.6" y2="27.5" stroke="#b9bcd4" stroke-width="0.9"/><line x1="424.6" y1="37.6" x2="432.8" y2="31.8" stroke="#b9bcd4" stroke-width="1.1"/><line x1="431.9" y1="46.1" x2="443.4" y2="62.5" stroke="#b9bcd4" stroke-width="1.1"/><line x1="439.7" y1="56.0" x2="451.2" y2="72.4" stroke="#b9bcd4" stroke-width="1.4"/><line x1="444.1" y1="65.8" x2="452.3" y2="60.1" stroke="#b9bcd4" stroke-width="0.9"/><line x1="451.5" y1="71.7" x2="459.6" y2="66.0" stroke="#b9bcd4" stroke-width="0.9"/><line x1="451.5" y1="71.7" x2="457.2" y2="79.9" stroke="#b9bcd4" stroke-width="0.9"/><line x1="453.9" y1="79.5" x2="462.1" y2="73.7" stroke="#b9bcd4" stroke-width="1.1"/><line x1="462.3" y1="90.5" x2="468.0" y2="98.7" stroke="#b9bcd4" stroke-width="0.9"/><line x1="466.5" y1="97.6" x2="474.7" y2="91.8" stroke="#b9bcd4" stroke-width="1.1"/><line x1="412.4" y1="-0.0" x2="418.2" y2="8.2" stroke="#b9bcd4" stroke-width="1.4"/><line x1="416.2" y1="9.1" x2="424.4" y2="3.4" stroke="#b9bcd4" stroke-width="0.9"/><line x1="416.2" y1="9.1" x2="422.0" y2="17.3" stroke="#b9bcd4" stroke-width="0.9"/><line x1="423.3" y1="16.3" x2="431.4" y2="10.5" stroke="#b9bcd4" stroke-width="1.1"/><line x1="423.3" y1="16.3" x2="434.7" y2="32.6" stroke="#b9bcd4" stroke-width="1.4"/><line x1="428.3" y1="25.2" x2="436.5" y2="19.5" stroke="#b9bcd4" stroke-width="1.4"/><line x1="428.3" y1="25.2" x2="434.0" y2="33.4" stroke="#b9bcd4" stroke-width="0.9"/><line x1="433.4" y1="32.6" x2="441.6" y2="26.9" stroke="#b9bcd4" stroke-width="1.4"/><line x1="433.4" y1="32.6" x2="439.1" y2="40.8" stroke="#b9bcd4" stroke-width="1.4"/><line x1="445.4" y1="49.5" x2="453.6" y2="43.7" stroke="#b9bcd4" stroke-width="1.4"/><line x1="445.4" y1="49.5" x2="456.9" y2="65.8" stroke="#b9bcd4" stroke-width="1.1"/><line x1="451.1" y1="57.2" x2="456.8" y2="65.4" stroke="#b9bcd4" stroke-width="0.9"/><line x1="459.1" y1="65.5" x2="467.3" y2="59.8" stroke="#b9bcd4" stroke-width="0.9"/><line x1="465.2" y1="74.6" x2="473.4" y2="68.9" stroke="#b9bcd4" stroke-width="1.4"/><line x1="468.1" y1="81.1" x2="484.5" y2="69.7" stroke="#b9bcd4" stroke-width="1.4"/><line x1="426.0" y1="5.2" x2="442.4" y2="-6.2" stroke="#b9bcd4" stroke-width="0.9"/><line x1="433.2" y1="10.3" x2="441.4" y2="4.6" stroke="#b9bcd4" stroke-width="0.9"/><line x1="433.2" y1="10.3" x2="438.9" y2="18.5" stroke="#b9bcd4" stroke-width="1.4"/><line x1="444.4" y1="29.8" x2="460.8" y2="18.3" stroke="#b9bcd4" stroke-width="0.9"/><line x1="449.4" y1="37.6" x2="455.2" y2="45.8" stroke="#b9bcd4" stroke-width="0.9"/><line x1="460.8" y1="50.8" x2="469.0" y2="45.1" stroke="#b9bcd4" stroke-width="0.9"/><line x1="466.3" y1="62.0" x2="482.7" y2="50.5" stroke="#b9bcd4" stroke-width="1.1"/><line x1="438.0" y1="6.1" x2="446.2" y2="0.4" stroke="#b9bcd4" stroke-width="1.1"/><line x1="446.1" y1="14.8" x2="457.5" y2="31.2" stroke="#b9bcd4" stroke-width="1.1"/><line x1="453.1" y1="20.7" x2="458.8" y2="28.9" stroke="#b9bcd4" stroke-width="0.9"/><line x1="457.6" y1="31.9" x2="465.8" y2="26.2" stroke="#b9bcd4" stroke-width="0.9"/><line x1="461.5" y1="38.7" x2="467.2" y2="46.9" stroke="#b9bcd4" stroke-width="0.9"/><line x1="455.0" y1="9.0" x2="463.2" y2="3.3" stroke="#b9bcd4" stroke-width="1.1"/><line x1="455.0" y1="9.0" x2="460.7" y2="17.2" stroke="#b9bcd4" stroke-width="0.9"/><line x1="458.8" y1="16.8" x2="464.6" y2="24.9" stroke="#b9bcd4" stroke-width="0.9"/><line x1="463.2" y1="22.9" x2="468.9" y2="31.1" stroke="#b9bcd4" stroke-width="1.4"/><line x1="463.7" y1="4.3" x2="471.9" y2="-1.4" stroke="#b9bcd4" stroke-width="0.9"/><line x1="463.7" y1="4.3" x2="469.5" y2="12.5" stroke="#b9bcd4" stroke-width="1.4"/><line x1="468.7" y1="12.4" x2="474.5" y2="20.6" stroke="#b9bcd4" stroke-width="0.9"/><line x1="468.3" y1="-1.3" x2="476.5" y2="-7.1" stroke="#b9bcd4" stroke-width="0.9"/><line x1="468.3" y1="-1.3" x2="479.7" y2="15.0" stroke="#b9bcd4" stroke-width="0.9"/><line x1="472.6" y1="19.3" x2="471.1" y2="28.1" stroke="#b9bcd4" stroke-width="0.9"/><line x1="470.2" y1="26.5" x2="479.1" y2="28.0" stroke="#b9bcd4" stroke-width="1.1"/><line x1="470.2" y1="26.5" x2="467.1" y2="44.2" stroke="#b9bcd4" stroke-width="1.1"/><line x1="468.6" y1="37.4" x2="486.4" y2="40.5" stroke="#b9bcd4" stroke-width="1.4"/><line x1="468.6" y1="37.4" x2="467.1" y2="46.3" stroke="#b9bcd4" stroke-width="1.1"/><line x1="468.4" y1="45.9" x2="477.2" y2="47.4" stroke="#b9bcd4" stroke-width="0.9"/><line x1="484.1" y1="2.9" x2="482.6" y2="11.8" stroke="#b9bcd4" stroke-width="1.1"/><line x1="481.4" y1="17.7" x2="479.9" y2="26.5" stroke="#b9bcd4" stroke-width="0.9"/><line x1="481.0" y1="27.8" x2="489.9" y2="29.3" stroke="#b9bcd4" stroke-width="0.9"/><line x1="479.9" y1="37.5" x2="497.6" y2="40.6" stroke="#b9bcd4" stroke-width="1.1"/><line x1="479.9" y1="37.5" x2="478.3" y2="46.3" stroke="#b9bcd4" stroke-width="1.4"/><line x1="478.0" y1="47.5" x2="486.9" y2="49.1" stroke="#b9bcd4" stroke-width="1.1"/><line x1="478.0" y1="47.5" x2="474.9" y2="65.3" stroke="#b9bcd4" stroke-width="1.1"/><line x1="473.5" y1="55.6" x2="482.4" y2="57.1" stroke="#b9bcd4" stroke-width="0.9"/><line x1="473.5" y1="55.6" x2="472.0" y2="64.4" stroke="#b9bcd4" stroke-width="0.9"/><line x1="472.7" y1="62.5" x2="471.1" y2="71.4" stroke="#b9bcd4" stroke-width="1.1"/><line x1="470.4" y1="82.6" x2="479.2" y2="84.2" stroke="#b9bcd4" stroke-width="1.4"/><line x1="470.4" y1="82.6" x2="468.8" y2="91.5" stroke="#b9bcd4" stroke-width="0.9"/><line x1="468.9" y1="89.8" x2="477.8" y2="91.4" stroke="#b9bcd4" stroke-width="1.1"/><line x1="494.8" y1="2.0" x2="503.7" y2="3.6" stroke="#b9bcd4" stroke-width="1.1"/><line x1="493.2" y1="11.9" x2="502.1" y2="13.5" stroke="#b9bcd4" stroke-width="1.4"/><line x1="493.2" y1="11.9" x2="491.6" y2="20.8" stroke="#b9bcd4" stroke-width="0.9"/><line x1="490.1" y1="20.5" x2="499.0" y2="22.0" stroke="#b9bcd4" stroke-width="0.9"/><line x1="490.7" y1="29.8" x2="499.5" y2="31.4" stroke="#b9bcd4" stroke-width="1.1"/><line x1="490.7" y1="29.8" x2="489.1" y2="38.7" stroke="#b9bcd4" stroke-width="1.4"/><line x1="488.9" y1="39.0" x2="506.6" y2="42.2" stroke="#b9bcd4" stroke-width="1.4"/><line x1="488.9" y1="39.0" x2="487.3" y2="47.9" stroke="#b9bcd4" stroke-width="0.9"/><line x1="485.6" y1="46.1" x2="503.3" y2="49.2" stroke="#b9bcd4" stroke-width="1.4"/><line x1="485.6" y1="46.1" x2="482.4" y2="63.8" stroke="#b9bcd4" stroke-width="0.9"/><line x1="483.6" y1="55.2" x2="492.5" y2="56.8" stroke="#b9bcd4" stroke-width="1.1"/><line x1="481.6" y1="72.5" x2="490.5" y2="74.1" stroke="#b9bcd4" stroke-width="0.9"/><line x1="481.6" y1="72.5" x2="478.5" y2="90.2" stroke="#b9bcd4" stroke-width="1.4"/><line x1="478.3" y1="82.1" x2="487.2" y2="83.7" stroke="#b9bcd4" stroke-width="0.9"/><line x1="478.3" y1="82.1" x2="476.7" y2="91.0" stroke="#b9bcd4" stroke-width="0.9"/><line x1="479.3" y1="93.0" x2="488.2" y2="94.6" stroke="#b9bcd4" stroke-width="1.4"/><line x1="479.3" y1="93.0" x2="477.8" y2="101.9" stroke="#b9bcd4" stroke-width="1.4"/><line x1="477.0" y1="101.9" x2="485.9" y2="103.5" stroke="#b9bcd4" stroke-width="1.4"/><line x1="474.3" y1="109.8" x2="492.0" y2="113.0" stroke="#b9bcd4" stroke-width="1.1"/><line x1="474.3" y1="109.8" x2="472.7" y2="118.7" stroke="#b9bcd4" stroke-width="1.4"/><line x1="473.1" y1="120.6" x2="481.9" y2="122.2" stroke="#b9bcd4" stroke-width="0.9"/><line x1="471.3" y1="129.1" x2="468.2" y2="146.8" stroke="#b9bcd4" stroke-width="0.9"/><line x1="503.1" y1="5.9" x2="511.9" y2="7.5" stroke="#b9bcd4" stroke-width="0.9"/><line x1="503.1" y1="5.9" x2="500.0" y2="23.6" stroke="#b9bcd4" stroke-width="1.4"/><line x1="501.2" y1="14.4" x2="510.1" y2="16.0" stroke="#b9bcd4" stroke-width="1.4"/><line x1="501.2" y1="14.4" x2="499.6" y2="23.3" stroke="#b9bcd4" stroke-width="1.4"/><line x1="497.7" y1="21.8" x2="496.2" y2="30.7" stroke="#b9bcd4" stroke-width="1.1"/><line x1="496.2" y1="40.1" x2="505.1" y2="41.7" stroke="#b9bcd4" stroke-width="0.9"/><line x1="496.2" y1="40.1" x2="494.7" y2="49.0" stroke="#b9bcd4" stroke-width="1.1"/><line x1="492.6" y1="57.7" x2="510.4" y2="60.8" stroke="#b9bcd4" stroke-width="1.1"/><line x1="493.0" y1="66.1" x2="501.8" y2="67.7" stroke="#b9bcd4" stroke-width="1.4"/><line x1="493.0" y1="66.1" x2="491.4" y2="75.0" stroke="#b9bcd4" stroke-width="0.9"/><line x1="488.0" y1="76.0" x2="496.9" y2="77.6" stroke="#b9bcd4" stroke-width="0.9"/><line x1="487.2" y1="93.8" x2="496.0" y2="95.3" stroke="#b9bcd4" stroke-width="1.1"/><line x1="487.2" y1="93.8" x2="485.6" y2="102.6" stroke="#b9bcd4" stroke-width="1.4"/><line x1="483.2" y1="112.1" x2="480.1" y2="129.8" stroke="#b9bcd4" stroke-width="0.9"/><line x1="483.7" y1="122.3" x2="492.6" y2="123.8" stroke="#b9bcd4" stroke-width="1.4"/><line x1="483.7" y1="122.3" x2="480.6" y2="140.0" stroke="#b9bcd4" stroke-width="1.1"/><line x1="480.2" y1="128.0" x2="478.6" y2="136.8" stroke="#b9bcd4" stroke-width="0.9"/><line x1="478.6" y1="139.3" x2="477.0" y2="148.2" stroke="#b9bcd4" stroke-width="0.9"/><line x1="476.6" y1="148.6" x2="494.4" y2="151.7" stroke="#b9bcd4" stroke-width="1.4"/><line x1="476.6" y1="148.6" x2="475.1" y2="157.4" stroke="#b9bcd4" stroke-width="1.1"/><line x1="474.6" y1="157.2" x2="473.0" y2="166.0" stroke="#b9bcd4" stroke-width="0.9"/><line x1="475.8" y1="165.5" x2="472.7" y2="183.2" stroke="#b9bcd4" stroke-width="0.9"/><line x1="513.1" y1="5.7" x2="521.9" y2="7.3" stroke="#b9bcd4" stroke-width="1.4"/><line x1="513.1" y1="5.7" x2="511.5" y2="14.6" stroke="#b9bcd4" stroke-width="1.4"/><line x1="509.1" y1="14.0" x2="518.0" y2="15.6" stroke="#b9bcd4" stroke-width="1.1"/><line x1="507.8" y1="23.8" x2="516.7" y2="25.4" stroke="#b9bcd4" stroke-width="1.1"/><line x1="507.8" y1="23.8" x2="506.2" y2="32.7" stroke="#b9bcd4" stroke-width="1.4"/><line x1="507.2" y1="34.1" x2="504.1" y2="51.9" stroke="#b9bcd4" stroke-width="1.4"/><line x1="500.9" y1="61.2" x2="509.8" y2="62.7" stroke="#b9bcd4" stroke-width="1.4"/><line x1="497.0" y1="95.3" x2="495.4" y2="104.1" stroke="#b9bcd4" stroke-width="0.9"/><line x1="492.5" y1="112.5" x2="510.2" y2="115.6" stroke="#b9bcd4" stroke-width="1.1"/><line x1="492.5" y1="112.5" x2="489.4" y2="130.2" stroke="#b9bcd4" stroke-width="1.1"/><line x1="490.3" y1="122.4" x2="488.7" y2="131.3" stroke="#b9bcd4" stroke-width="1.4"/><line x1="490.7" y1="129.1" x2="489.1" y2="138.0" stroke="#b9bcd4" stroke-width="1.1"/><line x1="488.0" y1="140.2" x2="496.8" y2="141.8" stroke="#b9bcd4" stroke-width="1.4"/><line x1="488.0" y1="140.2" x2="486.4" y2="149.1" stroke="#b9bcd4" stroke-width="0.9"/><line x1="486.6" y1="146.6" x2="483.4" y2="164.3" stroke="#b9bcd4" stroke-width="0.9"/><line x1="485.0" y1="156.4" x2="493.9" y2="157.9" stroke="#b9bcd4" stroke-width="1.1"/><line x1="485.0" y1="156.4" x2="483.4" y2="165.2" stroke="#b9bcd4" stroke-width="1.4"/><line x1="483.8" y1="165.4" x2="501.5" y2="168.5" stroke="#b9bcd4" stroke-width="1.4"/><line x1="483.8" y1="165.4" x2="482.2" y2="174.2" stroke="#b9bcd4" stroke-width="1.4"/><line x1="483.6" y1="175.1" x2="492.5" y2="176.7" stroke="#b9bcd4" stroke-width="1.4"/><line x1="483.6" y1="175.1" x2="480.5" y2="192.9" stroke="#b9bcd4" stroke-width="0.9"/><line x1="521.5" y1="-0.1" x2="520.0" y2="8.7" stroke="#b9bcd4" stroke-width="0.9"/><line x1="518.3" y1="16.5" x2="516.7" y2="25.3" stroke="#b9bcd4" stroke-width="0.9"/><line x1="517.5" y1="25.2" x2="526.4" y2="26.8" stroke="#b9bcd4" stroke-width="0.9"/><line x1="514.8" y1="35.9" x2="513.2" y2="44.8" stroke="#b9bcd4" stroke-width="0.9"/><line x1="514.4" y1="44.4" x2="511.3" y2="62.1" stroke="#b9bcd4" stroke-width="0.9"/><line x1="511.4" y1="54.2" x2="520.2" y2="55.8" stroke="#b9bcd4" stroke-width="0.9"/><line x1="511.4" y1="54.2" x2="509.8" y2="63.1" stroke="#b9bcd4" stroke-width="0.9"/><line x1="508.8" y1="71.5" x2="526.5" y2="74.6" stroke="#b9bcd4" stroke-width="1.4"/><line x1="509.2" y1="79.5" x2="518.1" y2="81.0" stroke="#b9bcd4" stroke-width="1.4"/><line x1="502.6" y1="97.4" x2="520.3" y2="100.5" stroke="#b9bcd4" stroke-width="1.1"/><line x1="504.2" y1="105.7" x2="521.9" y2="108.8" stroke="#b9bcd4" stroke-width="0.9"/><line x1="498.0" y1="124.2" x2="496.4" y2="133.1" stroke="#b9bcd4" stroke-width="0.9"/><line x1="494.7" y1="150.9" x2="503.6" y2="152.4" stroke="#b9bcd4" stroke-width="0.9"/><line x1="492.2" y1="158.7" x2="501.1" y2="160.3" stroke="#b9bcd4" stroke-width="1.1"/><line x1="490.3" y1="167.9" x2="499.2" y2="169.5" stroke="#b9bcd4" stroke-width="1.4"/><line x1="490.3" y1="167.9" x2="487.2" y2="185.6" stroke="#b9bcd4" stroke-width="0.9"/><line x1="488.9" y1="175.5" x2="487.4" y2="184.4" stroke="#b9bcd4" stroke-width="0.9"/><line x1="530.6" y1="-0.2" x2="529.0" y2="8.7" stroke="#b9bcd4" stroke-width="1.4"/><line x1="529.8" y1="9.1" x2="547.5" y2="12.3" stroke="#b9bcd4" stroke-width="1.1"/><line x1="529.8" y1="9.1" x2="526.7" y2="26.9" stroke="#b9bcd4" stroke-width="1.1"/><line x1="528.1" y1="20.0" x2="537.0" y2="21.6" stroke="#b9bcd4" stroke-width="1.1"/><line x1="528.1" y1="20.0" x2="526.5" y2="28.9" stroke="#b9bcd4" stroke-width="0.9"/><line x1="525.0" y1="28.8" x2="542.7" y2="31.9" stroke="#b9bcd4" stroke-width="0.9"/><line x1="525.2" y1="35.2" x2="523.6" y2="44.1" stroke="#b9bcd4" stroke-width="1.4"/><line x1="522.5" y1="52.7" x2="519.4" y2="70.4" stroke="#b9bcd4" stroke-width="1.1"/><line x1="519.5" y1="62.1" x2="517.9" y2="71.0" stroke="#b9bcd4" stroke-width="1.4"/><line x1="518.8" y1="72.6" x2="527.6" y2="74.2" stroke="#b9bcd4" stroke-width="1.4"/><line x1="518.8" y1="72.6" x2="515.7" y2="90.3" stroke="#b9bcd4" stroke-width="1.1"/><line x1="518.0" y1="78.8" x2="526.9" y2="80.3" stroke="#b9bcd4" stroke-width="0.9"/><line x1="513.5" y1="88.2" x2="531.3" y2="91.3" stroke="#b9bcd4" stroke-width="1.1"/><line x1="513.1" y1="99.5" x2="522.0" y2="101.0" stroke="#b9bcd4" stroke-width="1.1"/><line x1="511.8" y1="107.2" x2="510.2" y2="116.1" stroke="#b9bcd4" stroke-width="1.4"/><line x1="509.6" y1="117.4" x2="518.5" y2="119.0" stroke="#b9bcd4" stroke-width="1.1"/><line x1="504.9" y1="143.2" x2="513.8" y2="144.8" stroke="#b9bcd4" stroke-width="1.1"/><line x1="504.9" y1="143.2" x2="501.8" y2="161.0" stroke="#b9bcd4" stroke-width="1.4"/><line x1="505.0" y1="151.3" x2="503.5" y2="160.1" stroke="#b9bcd4" stroke-width="1.4"/><line x1="501.0" y1="161.7" x2="497.8" y2="179.4" stroke="#b9bcd4" stroke-width="1.1"/><line x1="501.0" y1="169.5" x2="518.7" y2="172.7" stroke="#b9bcd4" stroke-width="1.4"/><line x1="498.6" y1="177.6" x2="516.4" y2="180.7" stroke="#b9bcd4" stroke-width="1.4"/><line x1="539.5" y1="12.3" x2="548.4" y2="13.8" stroke="#b9bcd4" stroke-width="1.1"/><line x1="535.6" y1="28.4" x2="544.4" y2="29.9" stroke="#b9bcd4" stroke-width="1.4"/><line x1="535.6" y1="28.4" x2="534.0" y2="37.2" stroke="#b9bcd4" stroke-width="0.9"/><line x1="532.8" y1="38.8" x2="541.7" y2="40.4" stroke="#b9bcd4" stroke-width="0.9"/><line x1="532.7" y1="44.8" x2="541.6" y2="46.4" stroke="#b9bcd4" stroke-width="1.4"/><line x1="532.0" y1="57.0" x2="540.9" y2="58.6" stroke="#b9bcd4" stroke-width="0.9"/><line x1="532.0" y1="57.0" x2="528.9" y2="74.7" stroke="#b9bcd4" stroke-width="1.1"/><line x1="526.0" y1="83.7" x2="534.9" y2="85.3" stroke="#b9bcd4" stroke-width="1.1"/><line x1="526.0" y1="83.7" x2="524.4" y2="92.6" stroke="#b9bcd4" stroke-width="0.9"/><line x1="524.7" y1="90.9" x2="533.5" y2="92.5" stroke="#b9bcd4" stroke-width="1.1"/><line x1="524.7" y1="90.9" x2="523.1" y2="99.8" stroke="#b9bcd4" stroke-width="1.4"/><line x1="522.6" y1="99.5" x2="521.0" y2="108.4" stroke="#b9bcd4" stroke-width="0.9"/><line x1="520.2" y1="116.9" x2="529.1" y2="118.4" stroke="#b9bcd4" stroke-width="0.9"/><line x1="519.2" y1="126.9" x2="537.0" y2="130.1" stroke="#b9bcd4" stroke-width="0.9"/><line x1="514.3" y1="136.5" x2="523.2" y2="138.1" stroke="#b9bcd4" stroke-width="1.4"/><line x1="516.2" y1="146.0" x2="525.1" y2="147.6" stroke="#b9bcd4" stroke-width="1.1"/><line x1="513.5" y1="151.7" x2="531.2" y2="154.8" stroke="#b9bcd4" stroke-width="1.1"/><line x1="513.5" y1="151.7" x2="510.3" y2="169.4" stroke="#b9bcd4" stroke-width="1.1"/><line x1="513.0" y1="160.7" x2="530.7" y2="163.9" stroke="#b9bcd4" stroke-width="1.1"/><line x1="508.3" y1="171.5" x2="517.1" y2="173.1" stroke="#b9bcd4" stroke-width="1.1"/><line x1="508.3" y1="171.5" x2="505.2" y2="189.3" stroke="#b9bcd4" stroke-width="1.1"/><line x1="506.7" y1="180.3" x2="515.6" y2="181.9" stroke="#b9bcd4" stroke-width="0.9"/><line x1="506.7" y1="180.3" x2="505.2" y2="189.2" stroke="#b9bcd4" stroke-width="1.4"/><line x1="547.0" y1="4.2" x2="545.4" y2="13.1" stroke="#b9bcd4" stroke-width="1.4"/><line x1="546.5" y1="11.2" x2="564.3" y2="14.3" stroke="#b9bcd4" stroke-width="1.4"/><line x1="546.5" y1="11.2" x2="545.0" y2="20.1" stroke="#b9bcd4" stroke-width="1.1"/><line x1="543.7" y1="20.6" x2="552.6" y2="22.2" stroke="#b9bcd4" stroke-width="1.4"/><line x1="543.7" y1="20.6" x2="540.6" y2="38.4" stroke="#b9bcd4" stroke-width="1.1"/><line x1="542.9" y1="28.9" x2="541.4" y2="37.8" stroke="#b9bcd4" stroke-width="0.9"/><line x1="541.7" y1="40.0" x2="559.4" y2="43.1" stroke="#b9bcd4" stroke-width="1.1"/><line x1="539.2" y1="48.4" x2="548.1" y2="49.9" stroke="#b9bcd4" stroke-width="1.4"/><line x1="539.2" y1="48.4" x2="537.6" y2="57.2" stroke="#b9bcd4" stroke-width="1.4"/><line x1="538.3" y1="57.2" x2="547.2" y2="58.8" stroke="#b9bcd4" stroke-width="0.9"/><line x1="538.3" y1="57.2" x2="536.7" y2="66.1" stroke="#b9bcd4" stroke-width="1.4"/><line x1="539.1" y1="68.0" x2="537.5" y2="76.8" stroke="#b9bcd4" stroke-width="0.9"/><line x1="535.1" y1="73.0" x2="544.0" y2="74.6" stroke="#b9bcd4" stroke-width="1.1"/><line x1="535.1" y1="73.0" x2="532.0" y2="90.8" stroke="#b9bcd4" stroke-width="1.4"/><line x1="530.7" y1="102.6" x2="527.6" y2="120.3" stroke="#b9bcd4" stroke-width="1.4"/><line x1="529.5" y1="110.1" x2="547.2" y2="113.2" stroke="#b9bcd4" stroke-width="1.4"/><line x1="527.4" y1="119.4" x2="536.2" y2="121.0" stroke="#b9bcd4" stroke-width="1.4"/><line x1="524.5" y1="129.6" x2="533.4" y2="131.2" stroke="#b9bcd4" stroke-width="1.4"/><line x1="524.6" y1="136.1" x2="533.5" y2="137.7" stroke="#b9bcd4" stroke-width="1.4"/><line x1="518.3" y1="163.7" x2="516.8" y2="172.5" stroke="#b9bcd4" stroke-width="1.4"/><line x1="518.9" y1="173.2" x2="527.7" y2="174.8" stroke="#b9bcd4" stroke-width="1.1"/><line x1="518.9" y1="179.9" x2="536.6" y2="183.0" stroke="#b9bcd4" stroke-width="1.1"/><line x1="557.2" y1="6.9" x2="554.0" y2="24.6" stroke="#b9bcd4" stroke-width="1.1"/><line x1="555.3" y1="14.4" x2="564.2" y2="16.0" stroke="#b9bcd4" stroke-width="1.4"/><line x1="555.1" y1="24.1" x2="564.0" y2="25.7" stroke="#b9bcd4" stroke-width="1.4"/><line x1="555.1" y1="24.1" x2="553.5" y2="33.0" stroke="#b9bcd4" stroke-width="0.9"/><line x1="553.5" y1="31.1" x2="562.3" y2="32.6" stroke="#b9bcd4" stroke-width="0.9"/><line x1="553.5" y1="31.1" x2="550.4" y2="48.8" stroke="#b9bcd4" stroke-width="1.4"/><line x1="549.7" y1="49.3" x2="548.1" y2="58.1" stroke="#b9bcd4" stroke-width="1.1"/><line x1="547.3" y1="60.1" x2="565.0" y2="63.2" stroke="#b9bcd4" stroke-width="0.9"/><line x1="546.9" y1="67.7" x2="555.8" y2="69.3" stroke="#b9bcd4" stroke-width="1.4"/><line x1="542.9" y1="87.2" x2="551.8" y2="88.8" stroke="#b9bcd4" stroke-width="0.9"/><line x1="542.5" y1="93.9" x2="560.2" y2="97.0" stroke="#b9bcd4" stroke-width="1.1"/><line x1="540.9" y1="101.3" x2="549.7" y2="102.9" stroke="#b9bcd4" stroke-width="0.9"/><line x1="539.1" y1="112.3" x2="548.0" y2="113.9" stroke="#b9bcd4" stroke-width="1.4"/><line x1="539.1" y1="112.3" x2="537.6" y2="121.2" stroke="#b9bcd4" stroke-width="1.1"/><line x1="536.5" y1="119.7" x2="545.3" y2="121.2" stroke="#b9bcd4" stroke-width="0.9"/><line x1="536.5" y1="119.7" x2="533.3" y2="137.4" stroke="#b9bcd4" stroke-width="0.9"/><line x1="536.9" y1="130.7" x2="533.8" y2="148.4" stroke="#b9bcd4" stroke-width="1.4"/><line x1="533.2" y1="137.2" x2="550.9" y2="140.3" stroke="#b9bcd4" stroke-width="1.1"/><line x1="533.2" y1="137.2" x2="531.7" y2="146.0" stroke="#b9bcd4" stroke-width="1.4"/><line x1="533.6" y1="148.6" x2="542.5" y2="150.2" stroke="#b9bcd4" stroke-width="0.9"/><line x1="529.2" y1="166.4" x2="547.0" y2="169.5" stroke="#b9bcd4" stroke-width="0.9"/><line x1="529.2" y1="166.4" x2="526.1" y2="184.1" stroke="#b9bcd4" stroke-width="0.9"/><line x1="527.2" y1="173.9" x2="536.1" y2="175.5" stroke="#b9bcd4" stroke-width="0.9"/><line x1="561.4" y1="23.0" x2="570.2" y2="24.6" stroke="#b9bcd4" stroke-width="1.4"/><line x1="560.5" y1="43.1" x2="557.4" y2="60.8" stroke="#b9bcd4" stroke-width="0.9"/><line x1="550.9" y1="86.6" x2="559.8" y2="88.1" stroke="#b9bcd4" stroke-width="1.1"/><line x1="550.9" y1="86.6" x2="549.3" y2="95.4" stroke="#b9bcd4" stroke-width="0.9"/><line x1="549.0" y1="96.0" x2="566.7" y2="99.1" stroke="#b9bcd4" stroke-width="0.9"/><line x1="548.0" y1="112.3" x2="565.7" y2="115.4" stroke="#b9bcd4" stroke-width="1.1"/><line x1="548.0" y1="112.3" x2="544.9" y2="130.0" stroke="#b9bcd4" stroke-width="1.4"/><line x1="545.4" y1="123.9" x2="554.3" y2="125.5" stroke="#b9bcd4" stroke-width="0.9"/><line x1="543.6" y1="133.0" x2="552.4" y2="134.6" stroke="#b9bcd4" stroke-width="1.4"/><line x1="540.1" y1="149.0" x2="549.0" y2="150.6" stroke="#b9bcd4" stroke-width="1.4"/><line x1="538.3" y1="156.4" x2="547.2" y2="158.0" stroke="#b9bcd4" stroke-width="0.9"/><line x1="538.3" y1="156.4" x2="536.7" y2="165.3" stroke="#b9bcd4" stroke-width="0.9"/><line x1="536.2" y1="167.2" x2="554.0" y2="170.4" stroke="#b9bcd4" stroke-width="0.9"/><line x1="536.2" y1="167.2" x2="534.7" y2="176.1" stroke="#b9bcd4" stroke-width="1.4"/><line x1="538.1" y1="173.8" x2="547.0" y2="175.3" stroke="#b9bcd4" stroke-width="1.1"/><line x1="561.8" y1="90.3" x2="570.6" y2="91.8" stroke="#b9bcd4" stroke-width="1.4"/><line x1="560.1" y1="98.4" x2="577.8" y2="101.5" stroke="#b9bcd4" stroke-width="1.1"/><line x1="556.1" y1="106.8" x2="564.9" y2="108.3" stroke="#b9bcd4" stroke-width="0.9"/><line x1="556.1" y1="106.8" x2="552.9" y2="124.5" stroke="#b9bcd4" stroke-width="1.1"/><line x1="557.9" y1="114.9" x2="556.3" y2="123.7" stroke="#b9bcd4" stroke-width="0.9"/><line x1="556.6" y1="123.5" x2="565.4" y2="125.1" stroke="#b9bcd4" stroke-width="0.9"/><line x1="556.6" y1="123.5" x2="555.0" y2="132.4" stroke="#b9bcd4" stroke-width="0.9"/><line x1="551.2" y1="131.9" x2="548.1" y2="149.6" stroke="#b9bcd4" stroke-width="1.4"/><line x1="550.2" y1="151.6" x2="559.1" y2="153.2" stroke="#b9bcd4" stroke-width="1.1"/><line x1="550.2" y1="151.6" x2="548.7" y2="160.5" stroke="#b9bcd4" stroke-width="1.1"/><line x1="550.2" y1="159.2" x2="559.1" y2="160.7" stroke="#b9bcd4" stroke-width="1.1"/><line x1="546.0" y1="168.4" x2="544.4" y2="177.3" stroke="#b9bcd4" stroke-width="0.9"/><line x1="545.0" y1="179.0" x2="553.9" y2="180.6" stroke="#b9bcd4" stroke-width="1.1"/><line x1="545.0" y1="179.0" x2="543.5" y2="187.9" stroke="#b9bcd4" stroke-width="1.4"/><line x1="558.9" y1="154.0" x2="567.8" y2="155.6" stroke="#b9bcd4" stroke-width="1.1"/><line x1="558.9" y1="154.0" x2="557.3" y2="162.9" stroke="#b9bcd4" stroke-width="1.4"/><line x1="560.9" y1="177.0" x2="563.5" y2="186.7" stroke="#b9bcd4" stroke-width="1.4"/><line x1="558.3" y1="134.6" x2="577.6" y2="129.5" stroke="#b9bcd4" stroke-width="0.9"/><line x1="562.2" y1="143.0" x2="567.4" y2="162.4" stroke="#b9bcd4" stroke-width="1.1"/><line x1="567.0" y1="153.7" x2="576.6" y2="151.1" stroke="#b9bcd4" stroke-width="1.1"/><line x1="567.0" y1="153.7" x2="569.6" y2="163.4" stroke="#b9bcd4" stroke-width="1.1"/><line x1="562.9" y1="101.5" x2="572.5" y2="99.0" stroke="#b9bcd4" stroke-width="1.1"/><line x1="562.9" y1="101.5" x2="568.0" y2="120.9" stroke="#b9bcd4" stroke-width="0.9"/><line x1="564.5" y1="113.6" x2="574.2" y2="111.0" stroke="#b9bcd4" stroke-width="1.4"/><line x1="564.5" y1="113.6" x2="569.7" y2="132.9" stroke="#b9bcd4" stroke-width="1.1"/><line x1="568.3" y1="121.7" x2="578.0" y2="119.1" stroke="#b9bcd4" stroke-width="1.1"/><line x1="568.3" y1="121.7" x2="570.9" y2="131.3" stroke="#b9bcd4" stroke-width="1.4"/><line x1="569.2" y1="133.0" x2="578.9" y2="130.4" stroke="#b9bcd4" stroke-width="0.9"/><line x1="569.2" y1="133.0" x2="574.4" y2="152.3" stroke="#b9bcd4" stroke-width="1.1"/><line x1="573.1" y1="142.2" x2="582.8" y2="139.6" stroke="#b9bcd4" stroke-width="1.1"/><line x1="573.1" y1="142.2" x2="578.3" y2="161.5" stroke="#b9bcd4" stroke-width="1.4"/><line x1="572.7" y1="151.3" x2="582.3" y2="148.7" stroke="#b9bcd4" stroke-width="1.1"/><line x1="577.1" y1="161.1" x2="579.7" y2="170.7" stroke="#b9bcd4" stroke-width="1.4"/><line x1="579.0" y1="170.5" x2="588.6" y2="167.9" stroke="#b9bcd4" stroke-width="0.9"/><line x1="582.9" y1="180.0" x2="585.5" y2="189.6" stroke="#b9bcd4" stroke-width="1.1"/><line x1="560.3" y1="51.2" x2="562.9" y2="60.9" stroke="#b9bcd4" stroke-width="1.1"/><line x1="572.4" y1="101.5" x2="591.7" y2="96.3" stroke="#b9bcd4" stroke-width="1.4"/><line x1="572.4" y1="101.5" x2="575.0" y2="111.1" stroke="#b9bcd4" stroke-width="1.4"/><line x1="572.4" y1="109.8" x2="582.1" y2="107.3" stroke="#b9bcd4" stroke-width="1.4"/><line x1="574.9" y1="119.5" x2="584.6" y2="117.0" stroke="#b9bcd4" stroke-width="1.1"/><line x1="579.3" y1="127.6" x2="584.5" y2="147.0" stroke="#b9bcd4" stroke-width="0.9"/><line x1="583.8" y1="147.9" x2="593.5" y2="145.3" stroke="#b9bcd4" stroke-width="1.4"/><line x1="587.6" y1="156.3" x2="590.2" y2="165.9" stroke="#b9bcd4" stroke-width="1.4"/><line x1="592.7" y1="175.8" x2="612.1" y2="170.6" stroke="#b9bcd4" stroke-width="1.4"/><line x1="592.7" y1="175.8" x2="597.9" y2="195.1" stroke="#b9bcd4" stroke-width="1.4"/><line x1="560.8" y1="21.7" x2="570.5" y2="19.1" stroke="#b9bcd4" stroke-width="1.1"/><line x1="560.8" y1="21.7" x2="566.0" y2="41.0" stroke="#b9bcd4" stroke-width="1.1"/><line x1="566.5" y1="37.9" x2="571.7" y2="57.2" stroke="#b9bcd4" stroke-width="1.1"/><line x1="569.1" y1="47.5" x2="571.7" y2="57.2" stroke="#b9bcd4" stroke-width="1.4"/><line x1="572.4" y1="56.8" x2="591.8" y2="51.6" stroke="#b9bcd4" stroke-width="0.9"/><line x1="575.1" y1="69.5" x2="594.5" y2="64.3" stroke="#b9bcd4" stroke-width="0.9"/><line x1="574.9" y1="78.0" x2="584.6" y2="75.4" stroke="#b9bcd4" stroke-width="1.4"/><line x1="577.5" y1="87.2" x2="596.8" y2="82.0" stroke="#b9bcd4" stroke-width="1.4"/><line x1="577.5" y1="87.2" x2="580.0" y2="96.8" stroke="#b9bcd4" stroke-width="1.1"/><line x1="581.7" y1="98.7" x2="601.1" y2="93.5" stroke="#b9bcd4" stroke-width="1.4"/><line x1="582.5" y1="105.6" x2="585.1" y2="115.3" stroke="#b9bcd4" stroke-width="1.4"/><line x1="592.5" y1="134.9" x2="602.2" y2="132.3" stroke="#b9bcd4" stroke-width="1.1"/><line x1="594.9" y1="144.0" x2="604.6" y2="141.5" stroke="#b9bcd4" stroke-width="1.4"/><line x1="594.9" y1="144.0" x2="597.5" y2="153.7" stroke="#b9bcd4" stroke-width="0.9"/><line x1="595.9" y1="154.7" x2="605.5" y2="152.1" stroke="#b9bcd4" stroke-width="0.9"/><line x1="595.9" y1="154.7" x2="598.4" y2="164.4" stroke="#b9bcd4" stroke-width="1.4"/><line x1="599.1" y1="164.4" x2="608.8" y2="161.8" stroke="#b9bcd4" stroke-width="0.9"/><line x1="599.1" y1="164.4" x2="601.7" y2="174.0" stroke="#b9bcd4" stroke-width="0.9"/><line x1="603.3" y1="174.6" x2="605.9" y2="184.3" stroke="#b9bcd4" stroke-width="1.4"/><line x1="564.3" y1="-0.7" x2="583.6" y2="-5.8" stroke="#b9bcd4" stroke-width="1.1"/><line x1="564.3" y1="-0.7" x2="566.9" y2="9.0" stroke="#b9bcd4" stroke-width="0.9"/><line x1="568.6" y1="7.9" x2="571.2" y2="17.6" stroke="#b9bcd4" stroke-width="1.4"/><line x1="570.1" y1="18.6" x2="579.8" y2="16.0" stroke="#b9bcd4" stroke-width="0.9"/><line x1="570.1" y1="18.6" x2="572.7" y2="28.3" stroke="#b9bcd4" stroke-width="1.1"/><line x1="572.5" y1="25.8" x2="582.1" y2="23.2" stroke="#b9bcd4" stroke-width="0.9"/><line x1="572.5" y1="25.8" x2="577.7" y2="45.1" stroke="#b9bcd4" stroke-width="1.1"/><line x1="576.8" y1="36.2" x2="586.4" y2="33.7" stroke="#b9bcd4" stroke-width="1.1"/><line x1="576.8" y1="36.2" x2="579.4" y2="45.9" stroke="#b9bcd4" stroke-width="1.4"/><line x1="577.0" y1="47.4" x2="586.6" y2="44.8" stroke="#b9bcd4" stroke-width="0.9"/><line x1="580.9" y1="55.2" x2="583.5" y2="64.8" stroke="#b9bcd4" stroke-width="1.1"/><line x1="583.2" y1="64.0" x2="592.8" y2="61.4" stroke="#b9bcd4" stroke-width="1.4"/><line x1="583.2" y1="64.0" x2="588.3" y2="83.3" stroke="#b9bcd4" stroke-width="1.4"/><line x1="585.7" y1="75.6" x2="595.4" y2="73.1" stroke="#b9bcd4" stroke-width="1.4"/><line x1="585.7" y1="75.6" x2="590.9" y2="95.0" stroke="#b9bcd4" stroke-width="0.9"/><line x1="589.7" y1="85.8" x2="609.0" y2="80.7" stroke="#b9bcd4" stroke-width="1.4"/><line x1="594.6" y1="104.9" x2="613.9" y2="99.8" stroke="#b9bcd4" stroke-width="1.1"/><line x1="594.6" y1="104.9" x2="599.7" y2="124.3" stroke="#b9bcd4" stroke-width="1.4"/><line x1="597.4" y1="113.3" x2="602.5" y2="132.6" stroke="#b9bcd4" stroke-width="1.1"/><line x1="597.3" y1="124.0" x2="616.7" y2="118.8" stroke="#b9bcd4" stroke-width="0.9"/><line x1="597.3" y1="124.0" x2="602.5" y2="143.3" stroke="#b9bcd4" stroke-width="1.4"/><line x1="601.1" y1="132.0" x2="606.3" y2="151.3" stroke="#b9bcd4" stroke-width="0.9"/><line x1="604.5" y1="143.7" x2="623.8" y2="138.6" stroke="#b9bcd4" stroke-width="0.9"/><line x1="604.5" y1="143.7" x2="607.1" y2="153.4" stroke="#b9bcd4" stroke-width="0.9"/><line x1="606.9" y1="154.6" x2="609.5" y2="164.2" stroke="#b9bcd4" stroke-width="0.9"/><line x1="608.5" y1="162.3" x2="627.8" y2="157.1" stroke="#b9bcd4" stroke-width="0.9"/><line x1="610.0" y1="172.9" x2="629.3" y2="167.8" stroke="#b9bcd4" stroke-width="1.1"/><line x1="610.0" y1="172.9" x2="612.6" y2="182.6" stroke="#b9bcd4" stroke-width="1.1"/><line x1="580.4" y1="16.2" x2="599.7" y2="11.0" stroke="#b9bcd4" stroke-width="1.1"/><line x1="580.4" y1="16.2" x2="583.0" y2="25.8" stroke="#b9bcd4" stroke-width="0.9"/><line x1="582.1" y1="23.3" x2="601.4" y2="18.2" stroke="#b9bcd4" stroke-width="1.4"/><line x1="582.1" y1="23.3" x2="584.7" y2="33.0" stroke="#b9bcd4" stroke-width="0.9"/><line x1="583.4" y1="35.5" x2="585.9" y2="45.1" stroke="#b9bcd4" stroke-width="1.4"/><line x1="587.6" y1="41.9" x2="592.8" y2="61.3" stroke="#b9bcd4" stroke-width="0.9"/><line x1="594.3" y1="64.8" x2="604.0" y2="62.2" stroke="#b9bcd4" stroke-width="1.4"/><line x1="593.2" y1="72.1" x2="602.9" y2="69.6" stroke="#b9bcd4" stroke-width="1.4"/><line x1="598.6" y1="83.5" x2="617.9" y2="78.3" stroke="#b9bcd4" stroke-width="1.4"/><line x1="598.6" y1="83.5" x2="603.8" y2="102.8" stroke="#b9bcd4" stroke-width="0.9"/><line x1="601.9" y1="93.7" x2="611.5" y2="91.1" stroke="#b9bcd4" stroke-width="0.9"/><line x1="601.9" y1="93.7" x2="604.5" y2="103.4" stroke="#b9bcd4" stroke-width="1.1"/><line x1="607.8" y1="120.6" x2="617.5" y2="118.0" stroke="#b9bcd4" stroke-width="1.1"/><line x1="607.8" y1="120.6" x2="610.4" y2="130.2" stroke="#b9bcd4" stroke-width="1.4"/><line x1="612.1" y1="131.1" x2="631.5" y2="125.9" stroke="#b9bcd4" stroke-width="1.1"/><line x1="612.1" y1="131.1" x2="614.7" y2="140.8" stroke="#b9bcd4" stroke-width="0.9"/><line x1="612.3" y1="141.5" x2="614.9" y2="151.2" stroke="#b9bcd4" stroke-width="1.4"/><line x1="615.5" y1="150.8" x2="625.2" y2="148.2" stroke="#b9bcd4" stroke-width="0.9"/><line x1="618.2" y1="157.9" x2="620.7" y2="167.6" stroke="#b9bcd4" stroke-width="0.9"/><line x1="621.5" y1="168.9" x2="626.7" y2="188.2" stroke="#b9bcd4" stroke-width="1.1"/><line x1="624.4" y1="179.6" x2="643.8" y2="174.4" stroke="#b9bcd4" stroke-width="1.1"/><line x1="587.7" y1="3.4" x2="607.0" y2="-1.8" stroke="#b9bcd4" stroke-width="1.1"/><line x1="589.0" y1="13.9" x2="598.7" y2="11.3" stroke="#b9bcd4" stroke-width="1.4"/><line x1="592.0" y1="23.1" x2="597.2" y2="42.4" stroke="#b9bcd4" stroke-width="0.9"/><line x1="593.2" y1="31.0" x2="602.8" y2="28.4" stroke="#b9bcd4" stroke-width="0.9"/><line x1="598.5" y1="39.6" x2="608.2" y2="37.0" stroke="#b9bcd4" stroke-width="0.9"/><line x1="598.5" y1="39.6" x2="603.7" y2="58.9" stroke="#b9bcd4" stroke-width="0.9"/><line x1="601.5" y1="52.5" x2="604.1" y2="62.2" stroke="#b9bcd4" stroke-width="1.1"/><line x1="606.1" y1="69.2" x2="608.7" y2="78.8" stroke="#b9bcd4" stroke-width="0.9"/><line x1="606.1" y1="77.9" x2="615.7" y2="75.3" stroke="#b9bcd4" stroke-width="1.1"/><line x1="610.2" y1="89.4" x2="629.5" y2="84.2" stroke="#b9bcd4" stroke-width="1.1"/><line x1="614.3" y1="98.5" x2="616.9" y2="108.1" stroke="#b9bcd4" stroke-width="1.1"/><line x1="619.3" y1="117.3" x2="624.5" y2="136.6" stroke="#b9bcd4" stroke-width="1.1"/><line x1="622.1" y1="136.9" x2="641.5" y2="131.7" stroke="#b9bcd4" stroke-width="0.9"/><line x1="624.4" y1="146.2" x2="634.0" y2="143.6" stroke="#b9bcd4" stroke-width="1.1"/><line x1="629.2" y1="157.6" x2="638.9" y2="155.0" stroke="#b9bcd4" stroke-width="1.1"/><line x1="629.2" y1="157.6" x2="631.8" y2="167.3" stroke="#b9bcd4" stroke-width="1.1"/><line x1="629.1" y1="166.8" x2="634.2" y2="186.2" stroke="#b9bcd4" stroke-width="0.9"/><line x1="598.2" y1="-0.9" x2="603.4" y2="18.4" stroke="#b9bcd4" stroke-width="1.4"/><line x1="597.8" y1="8.1" x2="617.1" y2="2.9" stroke="#b9bcd4" stroke-width="1.1"/><line x1="605.4" y1="31.0" x2="615.1" y2="28.4" stroke="#b9bcd4" stroke-width="0.9"/><line x1="612.0" y1="56.7" x2="621.7" y2="54.2" stroke="#b9bcd4" stroke-width="1.1"/><line x1="616.4" y1="68.8" x2="619.0" y2="78.5" stroke="#b9bcd4" stroke-width="1.1"/><line x1="621.6" y1="96.8" x2="624.2" y2="106.5" stroke="#b9bcd4" stroke-width="1.4"/><line x1="625.6" y1="107.1" x2="635.3" y2="104.5" stroke="#b9bcd4" stroke-width="1.4"/><line x1="630.2" y1="125.3" x2="632.8" y2="134.9" stroke="#b9bcd4" stroke-width="1.1"/><line x1="631.6" y1="133.6" x2="650.9" y2="128.4" stroke="#b9bcd4" stroke-width="1.1"/><line x1="631.6" y1="133.6" x2="634.2" y2="143.3" stroke="#b9bcd4" stroke-width="0.9"/><line x1="636.4" y1="155.1" x2="646.1" y2="152.6" stroke="#b9bcd4" stroke-width="1.4"/><line x1="636.4" y1="155.1" x2="639.0" y2="164.8" stroke="#b9bcd4" stroke-width="1.4"/><line x1="642.4" y1="163.7" x2="645.0" y2="173.3" stroke="#b9bcd4" stroke-width="1.4"/><line x1="641.6" y1="174.8" x2="651.2" y2="172.2" stroke="#b9bcd4" stroke-width="1.1"/><line x1="641.6" y1="174.8" x2="646.8" y2="194.1" stroke="#b9bcd4" stroke-width="0.9"/><line x1="609.7" y1="5.3" x2="629.0" y2="0.1" stroke="#b9bcd4" stroke-width="0.9"/><line x1="609.7" y1="5.3" x2="614.9" y2="24.6" stroke="#b9bcd4" stroke-width="0.9"/><line x1="610.3" y1="14.8" x2="619.9" y2="12.3" stroke="#b9bcd4" stroke-width="1.4"/><line x1="614.6" y1="35.0" x2="617.2" y2="44.6" stroke="#b9bcd4" stroke-width="0.9"/><line x1="617.1" y1="47.3" x2="622.3" y2="66.6" stroke="#b9bcd4" stroke-width="1.4"/><line x1="622.2" y1="57.3" x2="631.9" y2="54.7" stroke="#b9bcd4" stroke-width="1.4"/><line x1="628.5" y1="84.2" x2="638.1" y2="81.6" stroke="#b9bcd4" stroke-width="1.1"/><line x1="628.5" y1="84.2" x2="633.6" y2="103.5" stroke="#b9bcd4" stroke-width="1.4"/><line x1="632.8" y1="93.6" x2="635.4" y2="103.2" stroke="#b9bcd4" stroke-width="1.4"/><line x1="638.6" y1="122.3" x2="648.2" y2="119.7" stroke="#b9bcd4" stroke-width="0.9"/><line x1="643.5" y1="130.7" x2="648.6" y2="150.0" stroke="#b9bcd4" stroke-width="0.9"/><line x1="643.6" y1="140.4" x2="653.3" y2="137.8" stroke="#b9bcd4" stroke-width="1.4"/><line x1="645.7" y1="152.6" x2="655.3" y2="150.0" stroke="#b9bcd4" stroke-width="0.9"/><line x1="650.4" y1="163.1" x2="660.0" y2="160.5" stroke="#b9bcd4" stroke-width="1.4"/><line x1="620.0" y1="2.9" x2="622.5" y2="12.6" stroke="#b9bcd4" stroke-width="0.9"/><line x1="620.8" y1="15.6" x2="623.4" y2="25.3" stroke="#b9bcd4" stroke-width="1.4"/><line x1="623.5" y1="23.1" x2="633.2" y2="20.5" stroke="#b9bcd4" stroke-width="1.4"/><line x1="623.5" y1="23.1" x2="626.1" y2="32.7" stroke="#b9bcd4" stroke-width="0.9"/><line x1="626.8" y1="32.6" x2="636.4" y2="30.0" stroke="#b9bcd4" stroke-width="0.9"/><line x1="626.8" y1="32.6" x2="629.3" y2="42.3" stroke="#b9bcd4" stroke-width="0.9"/><line x1="629.2" y1="44.4" x2="631.7" y2="54.0" stroke="#b9bcd4" stroke-width="1.1"/><line x1="629.8" y1="51.7" x2="632.4" y2="61.3" stroke="#b9bcd4" stroke-width="1.1"/><line x1="636.1" y1="73.6" x2="645.7" y2="71.0" stroke="#b9bcd4" stroke-width="1.4"/><line x1="636.1" y1="73.6" x2="638.7" y2="83.3" stroke="#b9bcd4" stroke-width="1.1"/><line x1="640.5" y1="81.4" x2="650.2" y2="78.8" stroke="#b9bcd4" stroke-width="1.4"/><line x1="640.5" y1="81.4" x2="643.1" y2="91.1" stroke="#b9bcd4" stroke-width="1.1"/><line x1="640.8" y1="90.0" x2="650.5" y2="87.4" stroke="#b9bcd4" stroke-width="1.4"/><line x1="647.6" y1="120.1" x2="657.2" y2="117.5" stroke="#b9bcd4" stroke-width="1.1"/><line x1="647.6" y1="120.1" x2="652.7" y2="139.4" stroke="#b9bcd4" stroke-width="0.9"/><line x1="650.7" y1="129.7" x2="653.3" y2="139.3" stroke="#b9bcd4" stroke-width="1.1"/><line x1="654.2" y1="141.4" x2="659.4" y2="160.8" stroke="#b9bcd4" stroke-width="0.9"/><line x1="657.2" y1="147.8" x2="666.9" y2="145.3" stroke="#b9bcd4" stroke-width="1.1"/><line x1="657.2" y1="147.8" x2="659.8" y2="157.5" stroke="#b9bcd4" stroke-width="1.4"/><line x1="626.0" y1="3.3" x2="635.7" y2="0.7" stroke="#b9bcd4" stroke-width="1.4"/><line x1="632.0" y1="12.5" x2="641.6" y2="9.9" stroke="#b9bcd4" stroke-width="1.1"/><line x1="631.5" y1="22.3" x2="634.0" y2="31.9" stroke="#b9bcd4" stroke-width="0.9"/><line x1="635.8" y1="30.4" x2="641.0" y2="49.7" stroke="#b9bcd4" stroke-width="1.4"/><line x1="638.7" y1="42.5" x2="643.8" y2="61.8" stroke="#b9bcd4" stroke-width="1.1"/><line x1="641.0" y1="48.6" x2="650.6" y2="46.0" stroke="#b9bcd4" stroke-width="0.9"/><line x1="644.1" y1="59.0" x2="653.7" y2="56.5" stroke="#b9bcd4" stroke-width="1.1"/><line x1="644.1" y1="59.0" x2="649.2" y2="78.4" stroke="#b9bcd4" stroke-width="1.1"/><line x1="645.8" y1="68.9" x2="651.0" y2="88.2" stroke="#b9bcd4" stroke-width="1.1"/><line x1="651.6" y1="88.3" x2="661.3" y2="85.7" stroke="#b9bcd4" stroke-width="0.9"/><line x1="653.7" y1="98.1" x2="656.3" y2="107.7" stroke="#b9bcd4" stroke-width="0.9"/><line x1="661.0" y1="125.9" x2="663.6" y2="135.6" stroke="#b9bcd4" stroke-width="1.4"/><line x1="641.6" y1="19.8" x2="646.8" y2="39.1" stroke="#b9bcd4" stroke-width="0.9"/><line x1="644.2" y1="30.1" x2="646.8" y2="39.7" stroke="#b9bcd4" stroke-width="1.1"/><line x1="648.3" y1="36.6" x2="653.5" y2="55.9" stroke="#b9bcd4" stroke-width="1.4"/><line x1="650.6" y1="48.9" x2="660.2" y2="46.4" stroke="#b9bcd4" stroke-width="0.9"/><line x1="652.1" y1="56.2" x2="671.5" y2="51.1" stroke="#b9bcd4" stroke-width="1.4"/><line x1="657.3" y1="68.2" x2="676.6" y2="63.0" stroke="#b9bcd4" stroke-width="1.1"/><line x1="657.3" y1="68.2" x2="659.9" y2="77.8" stroke="#b9bcd4" stroke-width="1.1"/><line x1="656.5" y1="75.8" x2="675.8" y2="70.6" stroke="#b9bcd4" stroke-width="0.9"/><line x1="656.5" y1="75.8" x2="659.1" y2="85.4" stroke="#b9bcd4" stroke-width="1.4"/><line x1="660.3" y1="86.9" x2="679.6" y2="81.7" stroke="#b9bcd4" stroke-width="0.9"/><line x1="660.3" y1="86.9" x2="662.9" y2="96.5" stroke="#b9bcd4" stroke-width="1.1"/><line x1="647.9" y1="5.8" x2="653.1" y2="25.1" stroke="#b9bcd4" stroke-width="1.4"/><line x1="653.4" y1="16.4" x2="658.6" y2="35.7" stroke="#b9bcd4" stroke-width="0.9"/><line x1="661.3" y1="43.4" x2="663.9" y2="53.0" stroke="#b9bcd4" stroke-width="1.4"/><line x1="661.8" y1="54.5" x2="664.4" y2="64.1" stroke="#b9bcd4" stroke-width="1.4"/><line x1="659.6" y1="2.5" x2="662.2" y2="12.1" stroke="#b9bcd4" stroke-width="1.1"/><line x1="668.9" y1="3.6" x2="679.8" y2="8.7" stroke="#b9bcd4" stroke-width="1.4"/><line x1="668.9" y1="3.6" x2="658.8" y2="25.4" stroke="#b9bcd4" stroke-width="1.1"/><line x1="660.3" y1="25.9" x2="655.2" y2="36.7" stroke="#b9bcd4" stroke-width="1.4"/><line x1="678.1" y1="9.2" x2="689.0" y2="14.3" stroke="#b9bcd4" stroke-width="1.4"/><line x1="676.0" y1="20.8" x2="670.9" y2="31.7" stroke="#b9bcd4" stroke-width="1.1"/><line x1="695.2" y1="3.5" x2="706.1" y2="8.6" stroke="#b9bcd4" stroke-width="0.9"/><line x1="695.2" y1="3.5" x2="690.2" y2="14.4" stroke="#b9bcd4" stroke-width="0.9"/><line x1="689.2" y1="15.6" x2="710.9" y2="25.7" stroke="#b9bcd4" stroke-width="1.4"/><line x1="684.7" y1="24.0" x2="679.6" y2="34.8" stroke="#b9bcd4" stroke-width="0.9"/><line x1="680.3" y1="34.9" x2="691.2" y2="39.9" stroke="#b9bcd4" stroke-width="1.4"/><line x1="674.3" y1="48.1" x2="685.2" y2="53.2" stroke="#b9bcd4" stroke-width="1.4"/><line x1="672.1" y1="56.4" x2="682.9" y2="61.5" stroke="#b9bcd4" stroke-width="1.1"/><line x1="659.2" y1="81.4" x2="670.1" y2="86.5" stroke="#b9bcd4" stroke-width="1.1"/><line x1="659.2" y1="81.4" x2="654.1" y2="92.3" stroke="#b9bcd4" stroke-width="0.9"/><line x1="704.9" y1="9.2" x2="726.6" y2="19.4" stroke="#b9bcd4" stroke-width="0.9"/><line x1="701.6" y1="21.3" x2="723.3" y2="31.4" stroke="#b9bcd4" stroke-width="1.1"/><line x1="701.6" y1="21.3" x2="691.4" y2="43.1" stroke="#b9bcd4" stroke-width="0.9"/><line x1="696.8" y1="30.0" x2="707.7" y2="35.1" stroke="#b9bcd4" stroke-width="1.1"/><line x1="687.5" y1="51.6" x2="682.4" y2="62.4" stroke="#b9bcd4" stroke-width="1.4"/><line x1="677.5" y1="72.8" x2="699.2" y2="82.9" stroke="#b9bcd4" stroke-width="1.4"/><line x1="677.5" y1="72.8" x2="672.4" y2="83.7" stroke="#b9bcd4" stroke-width="0.9"/><line x1="665.2" y1="96.2" x2="686.9" y2="106.3" stroke="#b9bcd4" stroke-width="1.4"/><line x1="660.2" y1="106.2" x2="655.1" y2="117.0" stroke="#b9bcd4" stroke-width="0.9"/><line x1="716.3" y1="14.9" x2="727.1" y2="20.0" stroke="#b9bcd4" stroke-width="1.1"/><line x1="716.3" y1="14.9" x2="706.1" y2="36.7" stroke="#b9bcd4" stroke-width="1.1"/><line x1="702.7" y1="46.1" x2="713.6" y2="51.1" stroke="#b9bcd4" stroke-width="1.1"/><line x1="702.7" y1="46.1" x2="697.6" y2="56.9" stroke="#b9bcd4" stroke-width="1.1"/><line x1="692.0" y1="68.7" x2="681.8" y2="90.5" stroke="#b9bcd4" stroke-width="1.4"/><line x1="687.5" y1="78.6" x2="698.4" y2="83.7" stroke="#b9bcd4" stroke-width="1.4"/><line x1="680.2" y1="89.0" x2="701.9" y2="99.2" stroke="#b9bcd4" stroke-width="0.9"/><line x1="680.2" y1="89.0" x2="675.1" y2="99.9" stroke="#b9bcd4" stroke-width="1.4"/><line x1="676.3" y1="102.5" x2="698.1" y2="112.6" stroke="#b9bcd4" stroke-width="1.1"/><line x1="676.3" y1="102.5" x2="671.2" y2="113.3" stroke="#b9bcd4" stroke-width="1.1"/><line x1="662.7" y1="133.5" x2="673.6" y2="138.5" stroke="#b9bcd4" stroke-width="1.4"/><line x1="662.7" y1="133.5" x2="652.6" y2="155.2" stroke="#b9bcd4" stroke-width="0.9"/><line x1="731.5" y1="8.0" x2="742.4" y2="13.1" stroke="#b9bcd4" stroke-width="0.9"/><line x1="729.7" y1="18.5" x2="751.5" y2="28.7" stroke="#b9bcd4" stroke-width="0.9"/><line x1="729.7" y1="18.5" x2="724.6" y2="29.4" stroke="#b9bcd4" stroke-width="1.1"/><line x1="715.9" y1="41.1" x2="726.8" y2="46.2" stroke="#b9bcd4" stroke-width="1.4"/><line x1="715.9" y1="41.1" x2="705.8" y2="62.9" stroke="#b9bcd4" stroke-width="0.9"/><line x1="711.9" y1="50.5" x2="706.8" y2="61.4" stroke="#b9bcd4" stroke-width="1.4"/><line x1="706.1" y1="61.8" x2="716.9" y2="66.9" stroke="#b9bcd4" stroke-width="1.4"/><line x1="706.1" y1="61.8" x2="701.0" y2="72.7" stroke="#b9bcd4" stroke-width="1.1"/><line x1="693.4" y1="96.8" x2="688.3" y2="107.6" stroke="#b9bcd4" stroke-width="1.4"/><line x1="686.9" y1="105.6" x2="681.8" y2="116.5" stroke="#b9bcd4" stroke-width="1.4"/><line x1="681.3" y1="116.0" x2="676.2" y2="126.9" stroke="#b9bcd4" stroke-width="1.4"/><line x1="678.7" y1="126.3" x2="668.5" y2="148.1" stroke="#b9bcd4" stroke-width="0.9"/><line x1="672.5" y1="136.9" x2="667.4" y2="147.8" stroke="#b9bcd4" stroke-width="1.4"/><line x1="666.7" y1="151.3" x2="677.6" y2="156.4" stroke="#b9bcd4" stroke-width="1.1"/><line x1="666.7" y1="151.3" x2="661.7" y2="162.2" stroke="#b9bcd4" stroke-width="0.9"/><line x1="663.9" y1="160.3" x2="653.8" y2="182.0" stroke="#b9bcd4" stroke-width="1.4"/><line x1="658.1" y1="172.9" x2="669.0" y2="178.0" stroke="#b9bcd4" stroke-width="1.1"/><line x1="750.5" y1="4.4" x2="772.2" y2="14.5" stroke="#b9bcd4" stroke-width="0.9"/><line x1="745.0" y1="14.9" x2="755.9" y2="20.0" stroke="#b9bcd4" stroke-width="1.4"/><line x1="740.2" y1="25.0" x2="735.2" y2="35.9" stroke="#b9bcd4" stroke-width="1.1"/><line x1="733.7" y1="35.2" x2="744.6" y2="40.3" stroke="#b9bcd4" stroke-width="0.9"/><line x1="716.7" y1="69.5" x2="711.7" y2="80.4" stroke="#b9bcd4" stroke-width="1.1"/><line x1="713.4" y1="78.0" x2="735.2" y2="88.1" stroke="#b9bcd4" stroke-width="1.1"/><line x1="708.9" y1="91.4" x2="730.7" y2="101.5" stroke="#b9bcd4" stroke-width="1.4"/><line x1="708.9" y1="91.4" x2="703.9" y2="102.3" stroke="#b9bcd4" stroke-width="1.4"/><line x1="704.3" y1="101.5" x2="715.2" y2="106.6" stroke="#b9bcd4" stroke-width="0.9"/><line x1="704.3" y1="101.5" x2="699.2" y2="112.4" stroke="#b9bcd4" stroke-width="1.4"/><line x1="699.2" y1="111.7" x2="689.1" y2="133.5" stroke="#b9bcd4" stroke-width="1.4"/><line x1="685.0" y1="142.1" x2="679.9" y2="153.0" stroke="#b9bcd4" stroke-width="1.4"/><line x1="672.7" y1="166.3" x2="667.6" y2="177.1" stroke="#b9bcd4" stroke-width="0.9"/><line x1="666.4" y1="176.2" x2="688.1" y2="186.4" stroke="#b9bcd4" stroke-width="0.9"/><line x1="751.1" y1="30.2" x2="746.0" y2="41.1" stroke="#b9bcd4" stroke-width="1.4"/><line x1="745.6" y1="40.0" x2="740.6" y2="50.8" stroke="#b9bcd4" stroke-width="1.1"/><line x1="741.4" y1="51.5" x2="752.2" y2="56.5" stroke="#b9bcd4" stroke-width="0.9"/><line x1="741.4" y1="51.5" x2="736.3" y2="62.3" stroke="#b9bcd4" stroke-width="0.9"/><line x1="734.6" y1="61.6" x2="724.4" y2="83.4" stroke="#b9bcd4" stroke-width="0.9"/><line x1="730.3" y1="72.1" x2="725.3" y2="83.0" stroke="#b9bcd4" stroke-width="0.9"/><line x1="726.3" y1="83.0" x2="748.0" y2="93.1" stroke="#b9bcd4" stroke-width="1.4"/><line x1="726.3" y1="83.0" x2="721.2" y2="93.9" stroke="#b9bcd4" stroke-width="1.4"/><line x1="720.9" y1="94.6" x2="731.7" y2="99.6" stroke="#b9bcd4" stroke-width="1.4"/><line x1="712.8" y1="105.6" x2="723.7" y2="110.6" stroke="#b9bcd4" stroke-width="0.9"/><line x1="712.8" y1="105.6" x2="707.8" y2="116.4" stroke="#b9bcd4" stroke-width="0.9"/><line x1="708.6" y1="114.4" x2="719.4" y2="119.5" stroke="#b9bcd4" stroke-width="0.9"/><line x1="705.8" y1="127.4" x2="700.7" y2="138.3" stroke="#b9bcd4" stroke-width="1.1"/><line x1="698.8" y1="139.2" x2="709.7" y2="144.2" stroke="#b9bcd4" stroke-width="0.9"/><line x1="698.8" y1="139.2" x2="693.8" y2="150.0" stroke="#b9bcd4" stroke-width="0.9"/><line x1="695.5" y1="150.4" x2="717.2" y2="160.5" stroke="#b9bcd4" stroke-width="0.9"/><line x1="687.1" y1="159.4" x2="708.9" y2="169.5" stroke="#b9bcd4" stroke-width="0.9"/><line x1="687.1" y1="159.4" x2="682.1" y2="170.2" stroke="#b9bcd4" stroke-width="1.4"/><line x1="679.7" y1="180.9" x2="690.5" y2="186.0" stroke="#b9bcd4" stroke-width="0.9"/><line x1="679.7" y1="180.9" x2="669.5" y2="202.7" stroke="#b9bcd4" stroke-width="1.4"/><line x1="754.7" y1="46.2" x2="765.6" y2="51.2" stroke="#b9bcd4" stroke-width="1.4"/><line x1="749.8" y1="55.7" x2="744.8" y2="66.5" stroke="#b9bcd4" stroke-width="1.1"/><line x1="747.2" y1="65.1" x2="742.2" y2="76.0" stroke="#b9bcd4" stroke-width="0.9"/><line x1="740.9" y1="77.2" x2="751.8" y2="82.3" stroke="#b9bcd4" stroke-width="0.9"/><line x1="735.5" y1="90.4" x2="730.4" y2="101.3" stroke="#b9bcd4" stroke-width="1.1"/><line x1="731.2" y1="98.4" x2="742.1" y2="103.5" stroke="#b9bcd4" stroke-width="0.9"/><line x1="724.8" y1="110.6" x2="735.6" y2="115.7" stroke="#b9bcd4" stroke-width="0.9"/><line x1="724.8" y1="110.6" x2="714.6" y2="132.4" stroke="#b9bcd4" stroke-width="0.9"/><line x1="722.0" y1="119.5" x2="732.8" y2="124.6" stroke="#b9bcd4" stroke-width="1.1"/><line x1="722.0" y1="119.5" x2="711.8" y2="141.3" stroke="#b9bcd4" stroke-width="1.4"/><line x1="710.7" y1="144.8" x2="721.6" y2="149.8" stroke="#b9bcd4" stroke-width="0.9"/><line x1="710.7" y1="144.8" x2="705.6" y2="155.6" stroke="#b9bcd4" stroke-width="1.1"/><line x1="705.9" y1="155.7" x2="727.6" y2="165.9" stroke="#b9bcd4" stroke-width="0.9"/><line x1="705.9" y1="155.7" x2="700.8" y2="166.6" stroke="#b9bcd4" stroke-width="1.4"/><line x1="700.2" y1="164.1" x2="721.9" y2="174.3" stroke="#b9bcd4" stroke-width="1.4"/><line x1="695.8" y1="174.2" x2="717.6" y2="184.4" stroke="#b9bcd4" stroke-width="1.4"/><line x1="755.3" y1="73.6" x2="766.1" y2="78.7" stroke="#b9bcd4" stroke-width="1.4"/><line x1="755.3" y1="73.6" x2="750.2" y2="84.5" stroke="#b9bcd4" stroke-width="0.9"/><line x1="749.6" y1="84.3" x2="744.5" y2="95.1" stroke="#b9bcd4" stroke-width="1.1"/><line x1="744.3" y1="93.8" x2="755.2" y2="98.9" stroke="#b9bcd4" stroke-width="0.9"/><line x1="744.3" y1="93.8" x2="734.2" y2="115.6" stroke="#b9bcd4" stroke-width="1.1"/><line x1="743.0" y1="102.9" x2="732.8" y2="124.6" stroke="#b9bcd4" stroke-width="1.4"/><line x1="735.0" y1="116.1" x2="729.9" y2="127.0" stroke="#b9bcd4" stroke-width="1.1"/><line x1="731.9" y1="125.8" x2="726.8" y2="136.6" stroke="#b9bcd4" stroke-width="0.9"/><line x1="727.1" y1="136.2" x2="717.0" y2="158.0" stroke="#b9bcd4" stroke-width="1.4"/><line x1="716.5" y1="159.6" x2="727.4" y2="164.6" stroke="#b9bcd4" stroke-width="1.4"/><line x1="716.5" y1="159.6" x2="711.4" y2="170.5" stroke="#b9bcd4" stroke-width="1.1"/><line x1="711.9" y1="168.5" x2="722.8" y2="173.6" stroke="#b9bcd4" stroke-width="0.9"/><line x1="711.9" y1="168.5" x2="706.8" y2="179.4" stroke="#b9bcd4" stroke-width="0.9"/><line x1="756.1" y1="97.4" x2="777.8" y2="107.6" stroke="#b9bcd4" stroke-width="0.9"/><line x1="756.1" y1="97.4" x2="751.0" y2="108.3" stroke="#b9bcd4" stroke-width="1.4"/><line x1="748.5" y1="119.3" x2="759.4" y2="124.4" stroke="#b9bcd4" stroke-width="0.9"/><line x1="741.0" y1="130.0" x2="730.9" y2="151.7" stroke="#b9bcd4" stroke-width="1.4"/><line x1="737.8" y1="142.6" x2="748.7" y2="147.7" stroke="#b9bcd4" stroke-width="1.4"/><line x1="732.7" y1="152.7" x2="727.6" y2="163.6" stroke="#b9bcd4" stroke-width="1.1"/><line x1="726.9" y1="163.1" x2="721.8" y2="174.0" stroke="#b9bcd4" stroke-width="0.9"/><line x1="720.8" y1="173.7" x2="731.7" y2="178.8" stroke="#b9bcd4" stroke-width="1.4"/><line x1="752.1" y1="134.9" x2="763.0" y2="140.0" stroke="#b9bcd4" stroke-width="1.4"/><line x1="752.1" y1="134.9" x2="747.1" y2="145.8" stroke="#b9bcd4" stroke-width="1.4"/><line x1="745.9" y1="147.9" x2="756.7" y2="153.0" stroke="#b9bcd4" stroke-width="1.1"/><line x1="748.4" y1="175.5" x2="743.4" y2="186.4" stroke="#b9bcd4" stroke-width="1.1"/><path d="M128.0 1.0 L107.0 12.0 L104.0 24.0 L113.0 33.0 L131.0 44.0 L148.0 50.0 L166.0 45.0 L184.0 33.0 L190.0 24.0 L200.0 10.0 L215.0 0.0" fill="none" stroke="#a2cbf6" stroke-width="2.6" stroke-linejoin="round" stroke-linecap="round" /><path d="M0.0 24.0 L18.0 39.0 L39.0 56.0 L51.0 52.0 L64.0 59.0 L77.0 69.0 L86.0 83.0 L95.0 90.0" fill="none" stroke="#a2cbf6" stroke-width="2.4" stroke-linejoin="round" stroke-linecap="round" /><path d="M185.0 64.0 L215.0 56.0 L256.0 36.0 L278.0 18.0 L304.0 11.0" fill="none" stroke="#a2cbf6" stroke-width="3.0" stroke-linejoin="round" stroke-linecap="round" /><path d="M306.0 0.0 L316.0 21.0 L327.5 32.0 L351.0 33.0 L375.0 21.0 L380.0 12.0" fill="none" stroke="#a2cbf6" stroke-width="2.6" stroke-linejoin="round" stroke-linecap="round" /><path d="M59.0 151.0 L74.0 155.0 L90.0 160.0 L107.0 167.0 L131.0 160.0 L142.0 170.0 L154.0 179.0" fill="none" stroke="#a2cbf6" stroke-width="2.4" stroke-linejoin="round" stroke-linecap="round" /><path d="M185.0 142.0 L209.0 134.0 L226.6 139.0 L244.0 146.0 L256.0 141.0 L274.0 127.0 L304.0 115.0 L306.0 103.0 L327.5 94.0 L357.0 89.0 L370.0 92.0" fill="none" stroke="#a2cbf6" stroke-width="2.2" stroke-linejoin="round" stroke-linecap="round" /><path d="M441.0 0.0 L440.0 24.0 L432.0 50.0 L420.0 71.0 L400.0 88.0 L385.0 98.0 L375.0 101.4 L363.0 115.6 L359.6 132.0 L365.5 153.0 L384.0 172.0 L403.0 179.0" fill="none" stroke="#a2cbf6" stroke-width="3.2" stroke-linejoin="round" stroke-linecap="round" /><path d="M370.0 21.0 L394.0 0.0" fill="none" stroke="#a2cbf6" stroke-width="3.0" stroke-linejoin="round" stroke-linecap="round" /><path d="M560.0 12.0 L536.0 24.0 L524.0 33.0 L520.0 57.0 L501.0 74.0 L495.0 90.0 L477.0 128.0 L459.0 155.5 L435.0 172.0 L405.6 179.0" fill="none" stroke="#a2cbf6" stroke-width="3.6" stroke-linejoin="round" stroke-linecap="round" /><path d="M560.0 12.0 L584.6 17.0 L600.6 28.0 L611.7 49.0 L619.0 74.0 L625.0 93.0 L640.0 107.5 L643.7 123.5 L636.0 138.0 L621.6 153.0 L620.0 165.0 L624.0 179.0" fill="none" stroke="#a2cbf6" stroke-width="3.4" stroke-linejoin="round" stroke-linecap="round" /><path d="M441.0 24.0 L472.0 24.0 L501.0 20.0" fill="none" stroke="#a2cbf6" stroke-width="2.2" stroke-linejoin="round" stroke-linecap="round" /><path d="M432.0 55.0 L453.0 69.0" fill="none" stroke="#a2cbf6" stroke-width="2.2" stroke-linejoin="round" stroke-linecap="round" /><path d="M560.0 30.0 L536.0 45.0 L518.5 62.0" fill="none" stroke="#a2cbf6" stroke-width="2.4" stroke-linejoin="round" stroke-linecap="round" /><path d="M599.4 92.7 L639.0 115.0" fill="none" stroke="#a2cbf6" stroke-width="2.4" stroke-linejoin="round" stroke-linecap="round" /><path d="M643.0 123.5 L660.0 123.5" fill="none" stroke="#a2cbf6" stroke-width="2.2" stroke-linejoin="round" stroke-linecap="round" /><path d="M641.0 97.0 L666.0 81.0 L690.0 66.0" fill="none" stroke="#a2cbf6" stroke-width="2.6" stroke-linejoin="round" stroke-linecap="round" /><path d="M677.0 3.7 L701.6 10.0 L714.0 20.0" fill="none" stroke="#a2cbf6" stroke-width="2.4" stroke-linejoin="round" stroke-linecap="round" /><path d="M495.0 118.0 L503.0 114.0" fill="none" stroke="#a2cbf6" stroke-width="3" stroke-linejoin="round" stroke-linecap="round" /><path d="M36.0 0.0 L76.0 36.0 L109.0 63.0 L125.0 77.0 L132.0 90.0 L138.0 125.0 L147.0 179.0" fill="none" stroke="#b0b3cf" stroke-width="2.8899999999999997" stroke-linejoin="round" stroke-linecap="round" /><path d="M90.0 10.0 L71.0 30.0 L57.0 48.0 L31.0 81.0 L26.0 90.0" fill="none" stroke="#b0b3cf" stroke-width="2.21" stroke-linejoin="round" stroke-linecap="round" /><path d="M0.0 79.6 L114.0 79.6" fill="none" stroke="#b0b3cf" stroke-width="1.7" stroke-linejoin="round" stroke-linecap="round" /><path d="M31.0 89.0 L33.0 136.0 L36.0 179.0" fill="none" stroke="#b0b3cf" stroke-width="2.04" stroke-linejoin="round" stroke-linecap="round" /><path d="M38.0 151.0 L77.0 138.0 L119.0 131.0 L166.0 114.0 L190.0 108.0 L240.0 95.0 L300.0 72.0 L380.0 60.0" fill="none" stroke="#b0b3cf" stroke-width="2.8899999999999997" stroke-linejoin="round" stroke-linecap="round" /><path d="M185.0 50.0 L235.0 35.6 L292.0 14.0 L330.0 0.0" fill="none" stroke="#b0b3cf" stroke-width="2.21" stroke-linejoin="round" stroke-linecap="round" /><path d="M185.0 76.0 L244.0 62.0 L278.0 57.0" fill="none" stroke="#b0b3cf" stroke-width="1.87" stroke-linejoin="round" stroke-linecap="round" /><path d="M286.0 66.5 L322.0 62.0 L375.0 45.0" fill="none" stroke="#b0b3cf" stroke-width="3.06" stroke-linejoin="round" stroke-linecap="round" /><path d="M344.0 113.0 L345.0 160.0 L354.0 179.0" fill="none" stroke="#b0b3cf" stroke-width="2.21" stroke-linejoin="round" stroke-linecap="round" /><path d="M370.0 36.0 L429.0 2.4 L436.5 0.0" fill="none" stroke="#b0b3cf" stroke-width="2.55" stroke-linejoin="round" stroke-linecap="round" /><path d="M370.0 26.0 L400.0 24.0 L429.0 30.0 L459.0 27.0 L507.0 32.0 L522.0 28.0" fill="none" stroke="#b0b3cf" stroke-width="2.55" stroke-linejoin="round" stroke-linecap="round" /><path d="M461.5 0.0 L468.6 59.0 L489.0 74.0 L512.5 90.0" fill="none" stroke="#b0b3cf" stroke-width="2.55" stroke-linejoin="round" stroke-linecap="round" /><path d="M504.0 0.0 L504.0 30.0 L521.0 41.6" fill="none" stroke="#b0b3cf" stroke-width="2.21" stroke-linejoin="round" stroke-linecap="round" /><path d="M530.0 14.0 L540.0 41.6 L548.0 90.0" fill="none" stroke="#b0b3cf" stroke-width="2.55" stroke-linejoin="round" stroke-linecap="round" /><path d="M433.0 0.0 L435.0 24.0 L427.0 59.0 L417.5 90.0" fill="none" stroke="#b0b3cf" stroke-width="2.55" stroke-linejoin="round" stroke-linecap="round" /><path d="M522.0 33.0 L468.6 59.0 L435.0 83.0 L400.0 110.0" fill="none" stroke="#b0b3cf" stroke-width="2.55" stroke-linejoin="round" stroke-linecap="round" /><path d="M483.0 89.0 L443.6 129.0 L408.0 179.0" fill="none" stroke="#b0b3cf" stroke-width="3.06" stroke-linejoin="round" stroke-linecap="round" /><path d="M530.0 98.5 L471.0 179.0" fill="none" stroke="#b0b3cf" stroke-width="2.21" stroke-linejoin="round" stroke-linecap="round" /><path d="M636.0 0.0 L636.0 43.0 L615.0 74.0 L603.0 93.0" fill="none" stroke="#b0b3cf" stroke-width="2.8899999999999997" stroke-linejoin="round" stroke-linecap="round" /><path d="M635.0 45.6 L671.0 80.0 L700.0 110.0" fill="none" stroke="#b0b3cf" stroke-width="2.55" stroke-linejoin="round" stroke-linecap="round" /><path d="M635.0 45.6 L695.5 24.6 L720.0 10.0" fill="none" stroke="#b0b3cf" stroke-width="2.21" stroke-linejoin="round" stroke-linecap="round" /><path d="M635.0 45.6 L717.6 51.7 L757.0 60.0" fill="none" stroke="#b0b3cf" stroke-width="2.21" stroke-linejoin="round" stroke-linecap="round" /><path d="M560.0 22.0 L600.0 15.0 L660.0 7.0 L700.0 0.0" fill="none" stroke="#b0b3cf" stroke-width="2.21" stroke-linejoin="round" stroke-linecap="round" /><path d="M677.0 89.0 L708.0 111.0 L757.0 133.0" fill="none" stroke="#b0b3cf" stroke-width="2.55" stroke-linejoin="round" stroke-linecap="round" /><path d="M656.0 89.0 L658.5 126.0 L662.0 179.0" fill="none" stroke="#b0b3cf" stroke-width="2.21" stroke-linejoin="round" stroke-linecap="round" /><path d="M455.0 86.0 L520.0 96.0 L560.0 110.0 L620.0 90.0 L650.0 60.0" fill="none" stroke="#b0b3cf" stroke-width="2.72" stroke-linejoin="round" stroke-linecap="round" /><path d="M590.0 27.0 L600.0 55.0 L612.0 93.0" fill="none" stroke="#b0b3cf" stroke-width="2.04" stroke-linejoin="round" stroke-linecap="round" /><ellipse cx="561" cy="60" rx="38" ry="37" fill="none" stroke="#b0b3cf" stroke-width="3.2"/><path d="M488.6 78.0 L519.5 31.0 L557.5 9.5 L614.5 14.0 L633.5 47.5 L643.0 95.0 L614.5 128.0 L555.0 147.0 L495.8 133.0 L481.5 95.0 L488.6 78.0" fill="none" stroke="#b0b3cf" stroke-width="3.4" stroke-linejoin="round" stroke-linecap="round" /><path d="M0.0 95.0 L35.6 107.0 L71.0 110.0 L137.0 110.0 L166.0 101.0 L190.0 94.0 L203.0 90.0 L244.0 77.0 L278.0 62.0 L284.0 47.5 L292.0 30.0 L304.0 21.0 L327.5 11.0 L335.0 0.0" fill="none" stroke="#b9bccd" stroke-width="4.6" stroke-linejoin="round" stroke-linecap="round" /><path d="M0.0 129.0 L30.0 113.0 L36.0 107.0" fill="none" stroke="#b9bccd" stroke-width="4.6" stroke-linejoin="round" stroke-linecap="round" /><path d="M295.0 0.0 L301.0 21.0 L297.0 31.0 L288.0 47.5" fill="none" stroke="#b9bccd" stroke-width="4.6" stroke-linejoin="round" stroke-linecap="round" /><path d="M335.0 0.0 L338.0 24.0 L340.6 47.5 L349.0 66.5 L363.0 83.0 L369.0 90.0 L380.0 95.0" fill="none" stroke="#b9bccd" stroke-width="4.6" stroke-linejoin="round" stroke-linecap="round" /><path d="M304.0 90.0 L339.0 71.0 L375.0 62.0 L395.0 50.0" fill="none" stroke="#b9bccd" stroke-width="4.6" stroke-linejoin="round" stroke-linecap="round" /><path d="M315.6 89.0 L280.0 107.0 L256.0 122.0 L244.0 136.5 L242.0 160.0 L238.4 179.0" fill="none" stroke="#b9bccd" stroke-width="4.6" stroke-linejoin="round" stroke-linecap="round" /><path d="M370.0 92.6 L387.8 122.0 L417.5 139.0 L441.0 155.5 L459.0 179.0" fill="none" stroke="#b9bccd" stroke-width="4.6" stroke-linejoin="round" stroke-linecap="round" /><path d="M370.0 62.0 L423.4 39.0" fill="none" stroke="#b9bccd" stroke-width="4.6" stroke-linejoin="round" stroke-linecap="round" /><path d="M597.0 99.0 L604.0 126.0 L591.0 150.6 L584.6 179.0" fill="none" stroke="#b9bccd" stroke-width="4.6" stroke-linejoin="round" stroke-linecap="round" /><path d="M699.0 116.0 L757.0 111.0" fill="none" stroke="#b9bccd" stroke-width="4.6" stroke-linejoin="round" stroke-linecap="round" /><path d="M668.0 0.0 L695.5 12.0 L714.0 24.6 L720.0 34.5" fill="none" stroke="#b9bccd" stroke-width="4.6" stroke-linejoin="round" stroke-linecap="round" /><path d="M678.0 179.0 L720.0 155.0 L757.0 140.0" fill="none" stroke="#b9bccd" stroke-width="4.6" stroke-linejoin="round" stroke-linecap="round" /><path d="M0.0 95.0 L35.6 107.0 L71.0 110.0 L137.0 110.0 L166.0 101.0 L190.0 94.0 L203.0 90.0 L244.0 77.0 L278.0 62.0 L284.0 47.5 L292.0 30.0 L304.0 21.0 L327.5 11.0 L335.0 0.0" fill="none" stroke="#ffffff" stroke-width="3.0" stroke-linejoin="round" stroke-linecap="round" /><path d="M0.0 129.0 L30.0 113.0 L36.0 107.0" fill="none" stroke="#ffffff" stroke-width="3.0" stroke-linejoin="round" stroke-linecap="round" /><path d="M295.0 0.0 L301.0 21.0 L297.0 31.0 L288.0 47.5" fill="none" stroke="#ffffff" stroke-width="3.0" stroke-linejoin="round" stroke-linecap="round" /><path d="M335.0 0.0 L338.0 24.0 L340.6 47.5 L349.0 66.5 L363.0 83.0 L369.0 90.0 L380.0 95.0" fill="none" stroke="#ffffff" stroke-width="3.0" stroke-linejoin="round" stroke-linecap="round" /><path d="M304.0 90.0 L339.0 71.0 L375.0 62.0 L395.0 50.0" fill="none" stroke="#ffffff" stroke-width="3.0" stroke-linejoin="round" stroke-linecap="round" /><path d="M315.6 89.0 L280.0 107.0 L256.0 122.0 L244.0 136.5 L242.0 160.0 L238.4 179.0" fill="none" stroke="#ffffff" stroke-width="3.0" stroke-linejoin="round" stroke-linecap="round" /><path d="M370.0 92.6 L387.8 122.0 L417.5 139.0 L441.0 155.5 L459.0 179.0" fill="none" stroke="#ffffff" stroke-width="3.0" stroke-linejoin="round" stroke-linecap="round" /><path d="M370.0 62.0 L423.4 39.0" fill="none" stroke="#ffffff" stroke-width="3.0" stroke-linejoin="round" stroke-linecap="round" /><path d="M597.0 99.0 L604.0 126.0 L591.0 150.6 L584.6 179.0" fill="none" stroke="#ffffff" stroke-width="3.0" stroke-linejoin="round" stroke-linecap="round" /><path d="M699.0 116.0 L757.0 111.0" fill="none" stroke="#ffffff" stroke-width="3.0" stroke-linejoin="round" stroke-linecap="round" /><path d="M668.0 0.0 L695.5 12.0 L714.0 24.6 L720.0 34.5" fill="none" stroke="#ffffff" stroke-width="3.0" stroke-linejoin="round" stroke-linecap="round" /><path d="M678.0 179.0 L720.0 155.0 L757.0 140.0" fill="none" stroke="#ffffff" stroke-width="3.0" stroke-linejoin="round" stroke-linecap="round" /><path d="M0.0 95.0 L35.6 107.0 L71.0 110.0 L137.0 110.0 L166.0 101.0 L190.0 94.0 L203.0 90.0 L244.0 77.0 L278.0 62.0 L284.0 47.5 L292.0 30.0 L304.0 21.0 L327.5 11.0 L335.0 0.0" fill="none" stroke="#d4d5de" stroke-width="0.6" stroke-linejoin="round" stroke-linecap="round" stroke-dasharray="3 3"/><path d="M0.0 129.0 L30.0 113.0 L36.0 107.0" fill="none" stroke="#d4d5de" stroke-width="0.6" stroke-linejoin="round" stroke-linecap="round" stroke-dasharray="3 3"/><path d="M295.0 0.0 L301.0 21.0 L297.0 31.0 L288.0 47.5" fill="none" stroke="#d4d5de" stroke-width="0.6" stroke-linejoin="round" stroke-linecap="round" stroke-dasharray="3 3"/><path d="M335.0 0.0 L338.0 24.0 L340.6 47.5 L349.0 66.5 L363.0 83.0 L369.0 90.0 L380.0 95.0" fill="none" stroke="#d4d5de" stroke-width="0.6" stroke-linejoin="round" stroke-linecap="round" stroke-dasharray="3 3"/><path d="M304.0 90.0 L339.0 71.0 L375.0 62.0 L395.0 50.0" fill="none" stroke="#d4d5de" stroke-width="0.6" stroke-linejoin="round" stroke-linecap="round" stroke-dasharray="3 3"/><path d="M315.6 89.0 L280.0 107.0 L256.0 122.0 L244.0 136.5 L242.0 160.0 L238.4 179.0" fill="none" stroke="#d4d5de" stroke-width="0.6" stroke-linejoin="round" stroke-linecap="round" stroke-dasharray="3 3"/><path d="M370.0 92.6 L387.8 122.0 L417.5 139.0 L441.0 155.5 L459.0 179.0" fill="none" stroke="#d4d5de" stroke-width="0.6" stroke-linejoin="round" stroke-linecap="round" stroke-dasharray="3 3"/><path d="M370.0 62.0 L423.4 39.0" fill="none" stroke="#d4d5de" stroke-width="0.6" stroke-linejoin="round" stroke-linecap="round" stroke-dasharray="3 3"/><path d="M597.0 99.0 L604.0 126.0 L591.0 150.6 L584.6 179.0" fill="none" stroke="#d4d5de" stroke-width="0.6" stroke-linejoin="round" stroke-linecap="round" stroke-dasharray="3 3"/><path d="M699.0 116.0 L757.0 111.0" fill="none" stroke="#d4d5de" stroke-width="0.6" stroke-linejoin="round" stroke-linecap="round" stroke-dasharray="3 3"/><path d="M668.0 0.0 L695.5 12.0 L714.0 24.6 L720.0 34.5" fill="none" stroke="#d4d5de" stroke-width="0.6" stroke-linejoin="round" stroke-linecap="round" stroke-dasharray="3 3"/><path d="M678.0 179.0 L720.0 155.0 L757.0 140.0" fill="none" stroke="#d4d5de" stroke-width="0.6" stroke-linejoin="round" stroke-linecap="round" stroke-dasharray="3 3"/><path d="M350.0 64.0 L424.0 38.0" fill="none" stroke="#c5c7d6" stroke-width="1.0" stroke-linejoin="round" stroke-linecap="round" /><path d="M352.0 70.0 L422.0 45.0" fill="none" stroke="#c5c7d6" stroke-width="1.0" stroke-linejoin="round" stroke-linecap="round" /><path d="M587.0 110.0 L598.0 179.0" fill="none" stroke="#c5c7d6" stroke-width="1.0" stroke-linejoin="round" stroke-linecap="round" /><path d="M600.0 100.0 L585.0 179.0" fill="none" stroke="#c5c7d6" stroke-width="1.0" stroke-linejoin="round" stroke-linecap="round" /><polygon points="348.0,60.0 424.0,34.0 428.0,44.0 352.0,72.0" fill="#ffffff" opacity="0.75"/><path d="M350.0 62.0 L425.0 36.0" fill="none" stroke="#c3c5d3" stroke-width="0.6" stroke-linejoin="round" stroke-linecap="round" /><path d="M350.0 65.0 L425.0 39.0" fill="none" stroke="#c3c5d3" stroke-width="0.6" stroke-linejoin="round" stroke-linecap="round" /><path d="M350.0 68.0 L425.0 42.0" fill="none" stroke="#c3c5d3" stroke-width="0.6" stroke-linejoin="round" stroke-linecap="round" /><path d="M350.0 71.0 L425.0 45.0" fill="none" stroke="#c3c5d3" stroke-width="0.6" stroke-linejoin="round" stroke-linecap="round" /><text x="136" y="21" style="font-family:'Liberation Sans';font-size:8.2px;font-style:italic;font-weight:400;paint-order:stroke;stroke:#f4f4f2;stroke-width:1.6px" fill="#555560">Терехово</text><text x="209" y="31" style="font-family:'Liberation Sans';font-size:8.2px;font-style:italic;font-weight:400;paint-order:stroke;stroke:#f4f4f2;stroke-width:1.6px" fill="#555560">Филёвский Парк</text><text x="272" y="28" style="font-family:'Liberation Sans';font-size:8.2px;font-style:italic;font-weight:400;paint-order:stroke;stroke:#f4f4f2;stroke-width:1.6px" fill="#555560">Фили</text><text x="121" y="68" style="font-family:'Liberation Sans';font-size:8.2px;font-style:italic;font-weight:400;paint-order:stroke;stroke:#f4f4f2;stroke-width:1.6px" fill="#3468c8">Нарышкинский пруд</text><text x="75" y="107" style="font-family:'Liberation Sans';font-size:8.2px;font-style:italic;font-weight:400;paint-order:stroke;stroke:#f4f4f2;stroke-width:1.6px" fill="#3468c8">Кунцевский пруд</text><text x="149" y="110" style="font-family:'Liberation Sans';font-size:8.2px;font-style:italic;font-weight:400;paint-order:stroke;stroke:#f4f4f2;stroke-width:1.6px" fill="#555560">Фили-Давыдково</text><text x="100" y="129" style="font-family:'Liberation Sans';font-size:8.2px;font-style:italic;font-weight:400;paint-order:stroke;stroke:#f4f4f2;stroke-width:1.6px" fill="#555560">Кунцево</text><text x="0" y="50" style="font-family:'Liberation Sans';font-size:8.2px;font-style:italic;font-weight:400;paint-order:stroke;stroke:#f4f4f2;stroke-width:1.6px" fill="#555560">унцево</text><text x="0" y="155" style="font-family:'Liberation Sans';font-size:8.2px;font-weight:400;paint-order:stroke;stroke:#f4f4f2;stroke-width:1.6px" fill="#555560">Се</text><text x="39" y="162" style="font-family:'Liberation Sans';font-size:8.2px;font-style:italic;font-weight:400;paint-order:stroke;stroke:#f4f4f2;stroke-width:1.6px" fill="#555560">ожайский</text><text x="84" y="160" transform="rotate(22 84 160)" style="font-family:'Liberation Sans';font-size:8.2px;font-style:italic;font-weight:400;paint-order:stroke;stroke:#f4f4f2;stroke-width:1.6px" fill="#555560">Верейская улица</text><text x="38" y="2" transform="rotate(42 38 2)" style="font-family:'Liberation Sans';font-size:8.2px;font-style:italic;font-weight:400;paint-order:stroke;stroke:#f4f4f2;stroke-width:1.6px" fill="#555560">евское шоссе</text><text x="138" y="179" transform="rotate(80 138 179)" style="font-family:'Liberation Sans';font-size:8.2px;font-style:italic;font-weight:400;paint-order:stroke;stroke:#f4f4f2;stroke-width:1.6px" fill="#555560">Амин</text><text x="322" y="62" style="font-family:'Liberation Sans';font-size:8.2px;font-style:italic;font-weight:400;paint-order:stroke;stroke:#f4f4f2;stroke-width:1.6px" fill="#555560">Дорогомилово</text><text x="236" y="188" transform="rotate(-54 236 188)" style="font-family:'Liberation Sans';font-size:8.2px;font-style:italic;font-weight:400;paint-order:stroke;stroke:#f4f4f2;stroke-width:1.6px" fill="#555560">Проспект Генерала Дорохова</text><text x="274" y="182" transform="rotate(-44 274 182)" style="font-family:'Liberation Sans';font-size:8.2px;font-style:italic;font-weight:400;paint-order:stroke;stroke:#f4f4f2;stroke-width:1.6px" fill="#555560">Мосфильмовская улица</text><text x="364" y="150" style="font-family:'Liberation Sans';font-size:8.2px;font-style:italic;font-weight:400;paint-order:stroke;stroke:#f4f4f2;stroke-width:1.6px" fill="#555560">Лужники</text><text x="419" y="108" style="font-family:'Liberation Sans';font-size:8.2px;font-style:italic;font-weight:400;paint-order:stroke;stroke:#f4f4f2;stroke-width:1.6px" fill="#555560">Хамовники</text><text x="467" y="14" style="font-family:'Liberation Sans';font-size:8.2px;font-style:italic;font-weight:400;paint-order:stroke;stroke:#f4f4f2;stroke-width:1.6px" fill="#555560">Арбат</text><text x="526" y="14" style="font-family:'Liberation Sans';font-size:10.4px;font-weight:400;paint-order:stroke;stroke:#f4f4f2;stroke-width:1.6px" fill="#222">Москва</text><text x="553" y="48" style="font-family:'Liberation Sans';font-size:8.2px;font-style:italic;font-weight:400;paint-order:stroke;stroke:#f4f4f2;stroke-width:1.6px" fill="#3468c8">Адам и Ева</text><text x="648" y="55" style="font-family:'Liberation Sans';font-size:8.2px;font-style:italic;font-weight:400;paint-order:stroke;stroke:#f4f4f2;stroke-width:1.6px" fill="#555560">Таганский</text><text x="560" y="81" style="font-family:'Liberation Sans';font-size:8.2px;font-style:italic;font-weight:400;paint-order:stroke;stroke:#f4f4f2;stroke-width:1.6px" fill="#555560">Замоскворечье</text><text x="531" y="172" transform="rotate(-82 531 172)" style="font-family:'Liberation Sans';font-size:8.2px;font-style:italic;font-weight:400;paint-order:stroke;stroke:#f4f4f2;stroke-width:1.6px" fill="#555560">Улица Шаболовка</text><text x="561" y="172" transform="rotate(-86 561 172)" style="font-family:'Liberation Sans';font-size:8.2px;font-style:italic;font-weight:400;paint-order:stroke;stroke:#f4f4f2;stroke-width:1.6px" fill="#555560">Люсиновская улица</text><text x="661" y="172" style="font-family:'Liberation Sans';font-size:8.2px;font-style:italic;font-weight:400;paint-order:stroke;stroke:#f4f4f2;stroke-width:1.6px" fill="#555560">Южнопортовый</text><text x="635" y="0" transform="rotate(90 635 0)" style="font-family:'Liberation Sans';font-size:8.2px;font-weight:400;paint-order:stroke;stroke:#f4f4f2;stroke-width:1.6px" fill="#555560">ий Вал</text></svg>
</div>
<svg style="left:1180px;top:233px" width="30" height="36" viewBox="0 0 30 36">
<path d="M14.8 33.4 C10 27 2 21.4 2 15 A12.8 12.8 0 0 1 27.6 15 C27.6 21.4 19.6 27 14.8 33.4 Z" fill="#8964c2"/>
<circle cx="14.8" cy="15.4" r="6.4" fill="#ffffff"/>
</svg>
<div style="position:absolute;left:810px;top:175px;width:36px;height:13.7px;background:rgba(255,255,255,0.8);border-radius:4px 0 0 0;"></div>
<div class="t" style="font-size:8.8px;line-height:8.8px;top:178.95px;color:#0078a8;-webkit-text-stroke:0.25px #0078a8;left:814.3px;">Leaflet</div>
<div style="position:absolute;left:1529px;top:185px;width:29px;height:29px;background:#fff;border-radius:4px;box-shadow:0 1px 2px rgba(0,0,0,0.15);"></div>
<svg style="left:1529px;top:185px" width="29" height="29" viewBox="0 0 29 29">
<path d="M14.5 7.6 L21.4 12.6 L14.5 17.6 L7.6 12.6 Z" fill="#6e6891"/>
<path d="M8.4 15.6 L14.5 20.4 L20.6 15.6" fill="none" stroke="#6e6891" stroke-width="1.3"/>
</svg>
<div style="position:absolute;left:1529px;top:222px;width:29px;height:57px;background:#fff;border-radius:4px;box-shadow:0 1px 2px rgba(0,0,0,0.15);"></div>
<div style="position:absolute;left:1529px;top:250px;width:29px;height:1px;background:#e2e2e6;"></div>
<svg style="left:1529px;top:222px" width="29" height="57" viewBox="0 0 29 57">
<path d="M14.5 8.4 L14.5 20.2 M8.6 14.3 L20.4 14.3" stroke="#6e6891" stroke-width="1.6"/>
<path d="M8.6 42.4 L20.4 42.4" stroke="#6e6891" stroke-width="1.6"/>
</svg>
<div style="position:absolute;left:1529px;top:316px;width:29px;height:29px;background:#fff;border-radius:4px;box-shadow:0 1px 2px rgba(0,0,0,0.15);"></div>
<svg style="left:1529px;top:316px" width="29" height="29" viewBox="0 0 29 29">
<path d="M8.4 12.4 L8.4 8.4 L12.4 8.4 M16.6 8.4 L20.6 8.4 L20.6 12.4 M20.6 16.6 L20.6 20.6 L16.6 20.6 M12.4 20.6 L8.4 20.6 L8.4 16.6" fill="none" stroke="#6e6891" stroke-width="1.8"/>
</svg>
<div style="position:absolute;left:819px;top:316px;width:29px;height:28.5px;background:#fff;border-radius:4px;box-shadow:0 1px 2px rgba(0,0,0,0.15);"></div>
<svg style="left:819px;top:316px" width="29" height="29" viewBox="0 0 29 29">
<path d="M20.2 10.6 L7.4 14.4 L13.2 15.8 L14.8 21.4 Z" fill="none" stroke="#6e6891" stroke-width="1.3" stroke-linejoin="round"/>
</svg>
<div class="t" style="font-size:13.56px;line-height:13.56px;top:439.92px;color:#14141c;-webkit-text-stroke:0.2px #14141c;left:50.3px;">Общая стоимость сервисов</div>
<div class="t" style="font-size:13.66px;line-height:13.66px;top:440.24px;color:#14141c;-webkit-text-stroke:0.2px #14141c;left:818px;">Параметры объекта</div>
<div style="position:absolute;left:66px;top:487px;width:1.2px;height:189px;background:#ececf0;"></div>
<div style="position:absolute;left:66px;top:675px;width:726.5px;height:1.2px;background:#ececf0;"></div>
<div style="position:absolute;left:62px;top:675.0px;width:10px;height:1px;background:#f1f1f4;"></div>
<div class="t" style="font-size:9px;line-height:9px;top:670.78px;color:#c4c4cb;right:1544.5px;">0</div>
<div style="position:absolute;left:62px;top:650.0px;width:10px;height:1px;background:#f1f1f4;"></div>
<div class="t" style="font-size:9px;line-height:9px;top:645.78px;color:#c4c4cb;right:1544.5px;">0.2</div>
<div style="position:absolute;left:62px;top:625.0px;width:10px;height:1px;background:#f1f1f4;"></div>
<div class="t" style="font-size:9px;line-height:9px;top:620.78px;color:#c4c4cb;right:1544.5px;">0.4</div>
<div style="position:absolute;left:62px;top:600.0px;width:10px;height:1px;background:#f1f1f4;"></div>
<div class="t" style="font-size:9px;line-height:9px;top:595.78px;color:#c4c4cb;right:1544.5px;">0.6</div>
<div style="position:absolute;left:62px;top:575.0px;width:10px;height:1px;background:#f1f1f4;"></div>
<div class="t" style="font-size:9px;line-height:9px;top:570.78px;color:#c4c4cb;right:1544.5px;">0.8</div>
<div style="position:absolute;left:62px;top:550.0px;width:10px;height:1px;background:#f1f1f4;"></div>
<div class="t" style="font-size:9px;line-height:9px;top:545.78px;color:#c4c4cb;right:1544.5px;">1</div>
<div style="position:absolute;left:62px;top:525.0px;width:10px;height:1px;background:#f1f1f4;"></div>
<div class="t" style="font-size:9px;line-height:9px;top:520.78px;color:#c4c4cb;right:1544.5px;">1.2</div>
<div style="position:absolute;left:62px;top:500.0px;width:10px;height:1px;background:#f1f1f4;"></div>
<div class="t" style="font-size:9px;line-height:9px;top:495.78px;color:#c4c4cb;right:1544.5px;">1.4</div>
<div style="position:absolute;left:187.3px;top:671px;width:1px;height:9px;background:#f1f1f4;"></div>
<div class="t" style="font-size:9px;line-height:9px;top:686.78px;color:#c4c4cb;left:187.8px;transform:translateX(-50%);">дек. 20</div>
<div style="position:absolute;left:429.3px;top:671px;width:1px;height:9px;background:#f1f1f4;"></div>
<div class="t" style="font-size:9px;line-height:9px;top:686.78px;color:#c4c4cb;left:429.8px;transform:translateX(-50%);">янв. 21</div>
<div style="position:absolute;left:671.3px;top:671px;width:1px;height:9px;background:#f1f1f4;"></div>
<div class="t" style="font-size:9px;line-height:9px;top:686.78px;color:#c4c4cb;left:671.8px;transform:translateX(-50%);">февр. 21</div>
<div class="t" style="font-size:9px;line-height:9px;top:663.38px;color:#c4c4cb;right:812.5px;">Время</div>
<div class="t" style="left:72.6px;top:506.5px;font-size:9px;line-height:9px;color:#c4c4cb;transform-origin:0 0;transform:rotate(-90deg)">руб</div>
<div style="position:absolute;left:834px;top:487px;width:1.2px;height:189px;background:#ececf0;"></div>
<div style="position:absolute;left:834px;top:675px;width:726px;height:1.2px;background:#ececf0;"></div>
<div style="position:absolute;left:830px;top:675.0px;width:10px;height:1px;background:#f1f1f4;"></div>
<div class="t" style="font-size:9px;line-height:9px;top:670.78px;color:#c4c4cb;right:777.5px;">0</div>
<div style="position:absolute;left:830px;top:657.55px;width:10px;height:1px;background:#f1f1f4;"></div>
<div class="t" style="font-size:9px;line-height:9px;top:653.33px;color:#c4c4cb;right:777.5px;">5k</div>
<div style="position:absolute;left:830px;top:640.1px;width:10px;height:1px;background:#f1f1f4;"></div>
<div class="t" style="font-size:9px;line-height:9px;top:635.88px;color:#c4c4cb;right:777.5px;">10k</div>
<div style="position:absolute;left:830px;top:622.65px;width:10px;height:1px;background:#f1f1f4;"></div>
<div class="t" style="font-size:9px;line-height:9px;top:618.43px;color:#c4c4cb;right:777.5px;">15k</div>
<div style="position:absolute;left:830px;top:605.2px;width:10px;height:1px;background:#f1f1f4;"></div>
<div class="t" style="font-size:9px;line-height:9px;top:600.98px;color:#c4c4cb;right:777.5px;">20k</div>
<div style="position:absolute;left:830px;top:587.75px;width:10px;height:1px;background:#f1f1f4;"></div>
<div class="t" style="font-size:9px;line-height:9px;top:583.53px;color:#c4c4cb;right:777.5px;">25k</div>
<div style="position:absolute;left:830px;top:570.3px;width:10px;height:1px;background:#f1f1f4;"></div>
<div class="t" style="font-size:9px;line-height:9px;top:566.08px;color:#c4c4cb;right:777.5px;">30k</div>
<div style="position:absolute;left:830px;top:552.85px;width:10px;height:1px;background:#f1f1f4;"></div>
<div class="t" style="font-size:9px;line-height:9px;top:548.63px;color:#c4c4cb;right:777.5px;">35k</div>
<div style="position:absolute;left:830px;top:535.4px;width:10px;height:1px;background:#f1f1f4;"></div>
<div class="t" style="font-size:9px;line-height:9px;top:531.18px;color:#c4c4cb;right:777.5px;">40k</div>
<div style="position:absolute;left:830px;top:517.95px;width:10px;height:1px;background:#f1f1f4;"></div>
<div class="t" style="font-size:9px;line-height:9px;top:513.73px;color:#c4c4cb;right:777.5px;">45k</div>
<div style="position:absolute;left:830px;top:500.5px;width:10px;height:1px;background:#f1f1f4;"></div>
<div class="t" style="font-size:9px;line-height:9px;top:496.28px;color:#c4c4cb;right:777.5px;">50k</div>
<div style="position:absolute;left:954.5px;top:671px;width:1px;height:9px;background:#f1f1f4;"></div>
<div class="t" style="font-size:9px;line-height:9px;top:686.78px;color:#c4c4cb;left:955px;transform:translateX(-50%);">дек. 20</div>
<div style="position:absolute;left:1196.5px;top:671px;width:1px;height:9px;background:#f1f1f4;"></div>
<div class="t" style="font-size:9px;line-height:9px;top:686.78px;color:#c4c4cb;left:1197px;transform:translateX(-50%);">янв. 21</div>
<div style="position:absolute;left:1438.5px;top:671px;width:1px;height:9px;background:#f1f1f4;"></div>
<div class="t" style="font-size:9px;line-height:9px;top:686.78px;color:#c4c4cb;left:1439px;transform:translateX(-50%);">февр. 21</div>
<div style="position:absolute;left:906.2px;top:549.6px;width:97.69999999999993px;height:126.39999999999998px;background:#8964c2;"></div>
<div style="position:absolute;left:1148.3px;top:572px;width:97.60000000000014px;height:104px;background:#8964c2;"></div>
<div style="position:absolute;left:1390.1px;top:637.9px;width:97.60000000000014px;height:38.10000000000002px;background:#8964c2;"></div>
<div class="t" style="font-size:9px;line-height:9px;top:663.38px;color:#c4c4cb;right:45.40000000000009px;">Время</div>
<div class="t" style="left:840.2px;top:502.8px;font-size:9px;line-height:9px;color:#c4c4cb;transform-origin:0 0;transform:rotate(-90deg)">км</div>
<div style="position:absolute;left:1375px;top:432px;width:192.7px;height:29.8px;border:1px solid #dcdce2;border-radius:4px;box-sizing:border-box;"></div>
<div style="position:absolute;left:1375px;top:432px;width:97.5px;height:29.8px;background:#eeeafd;border-radius:4px 0 0 4px;border-left:3.6px solid #8964c2;box-sizing:border-box;border-top:1px solid #dcdce2;border-bottom:1px solid #dcdce2;"></div>
<div style="position:absolute;left:1472.5px;top:432px;width:1px;height:29.8px;background:#dcdce2;"></div>
<div class="t" style="font-size:12.1px;line-height:12.1px;top:442.46px;color:#1a1a26;-webkit-text-stroke:0.12px #1a1a26;left:1396.2px;">Пробег, км</div>
<div class="t" style="font-size:12.05px;line-height:12.05px;top:442.50px;color:#a0a0aa;left:1494.4px;">Моточасы</div>
</body></html>
